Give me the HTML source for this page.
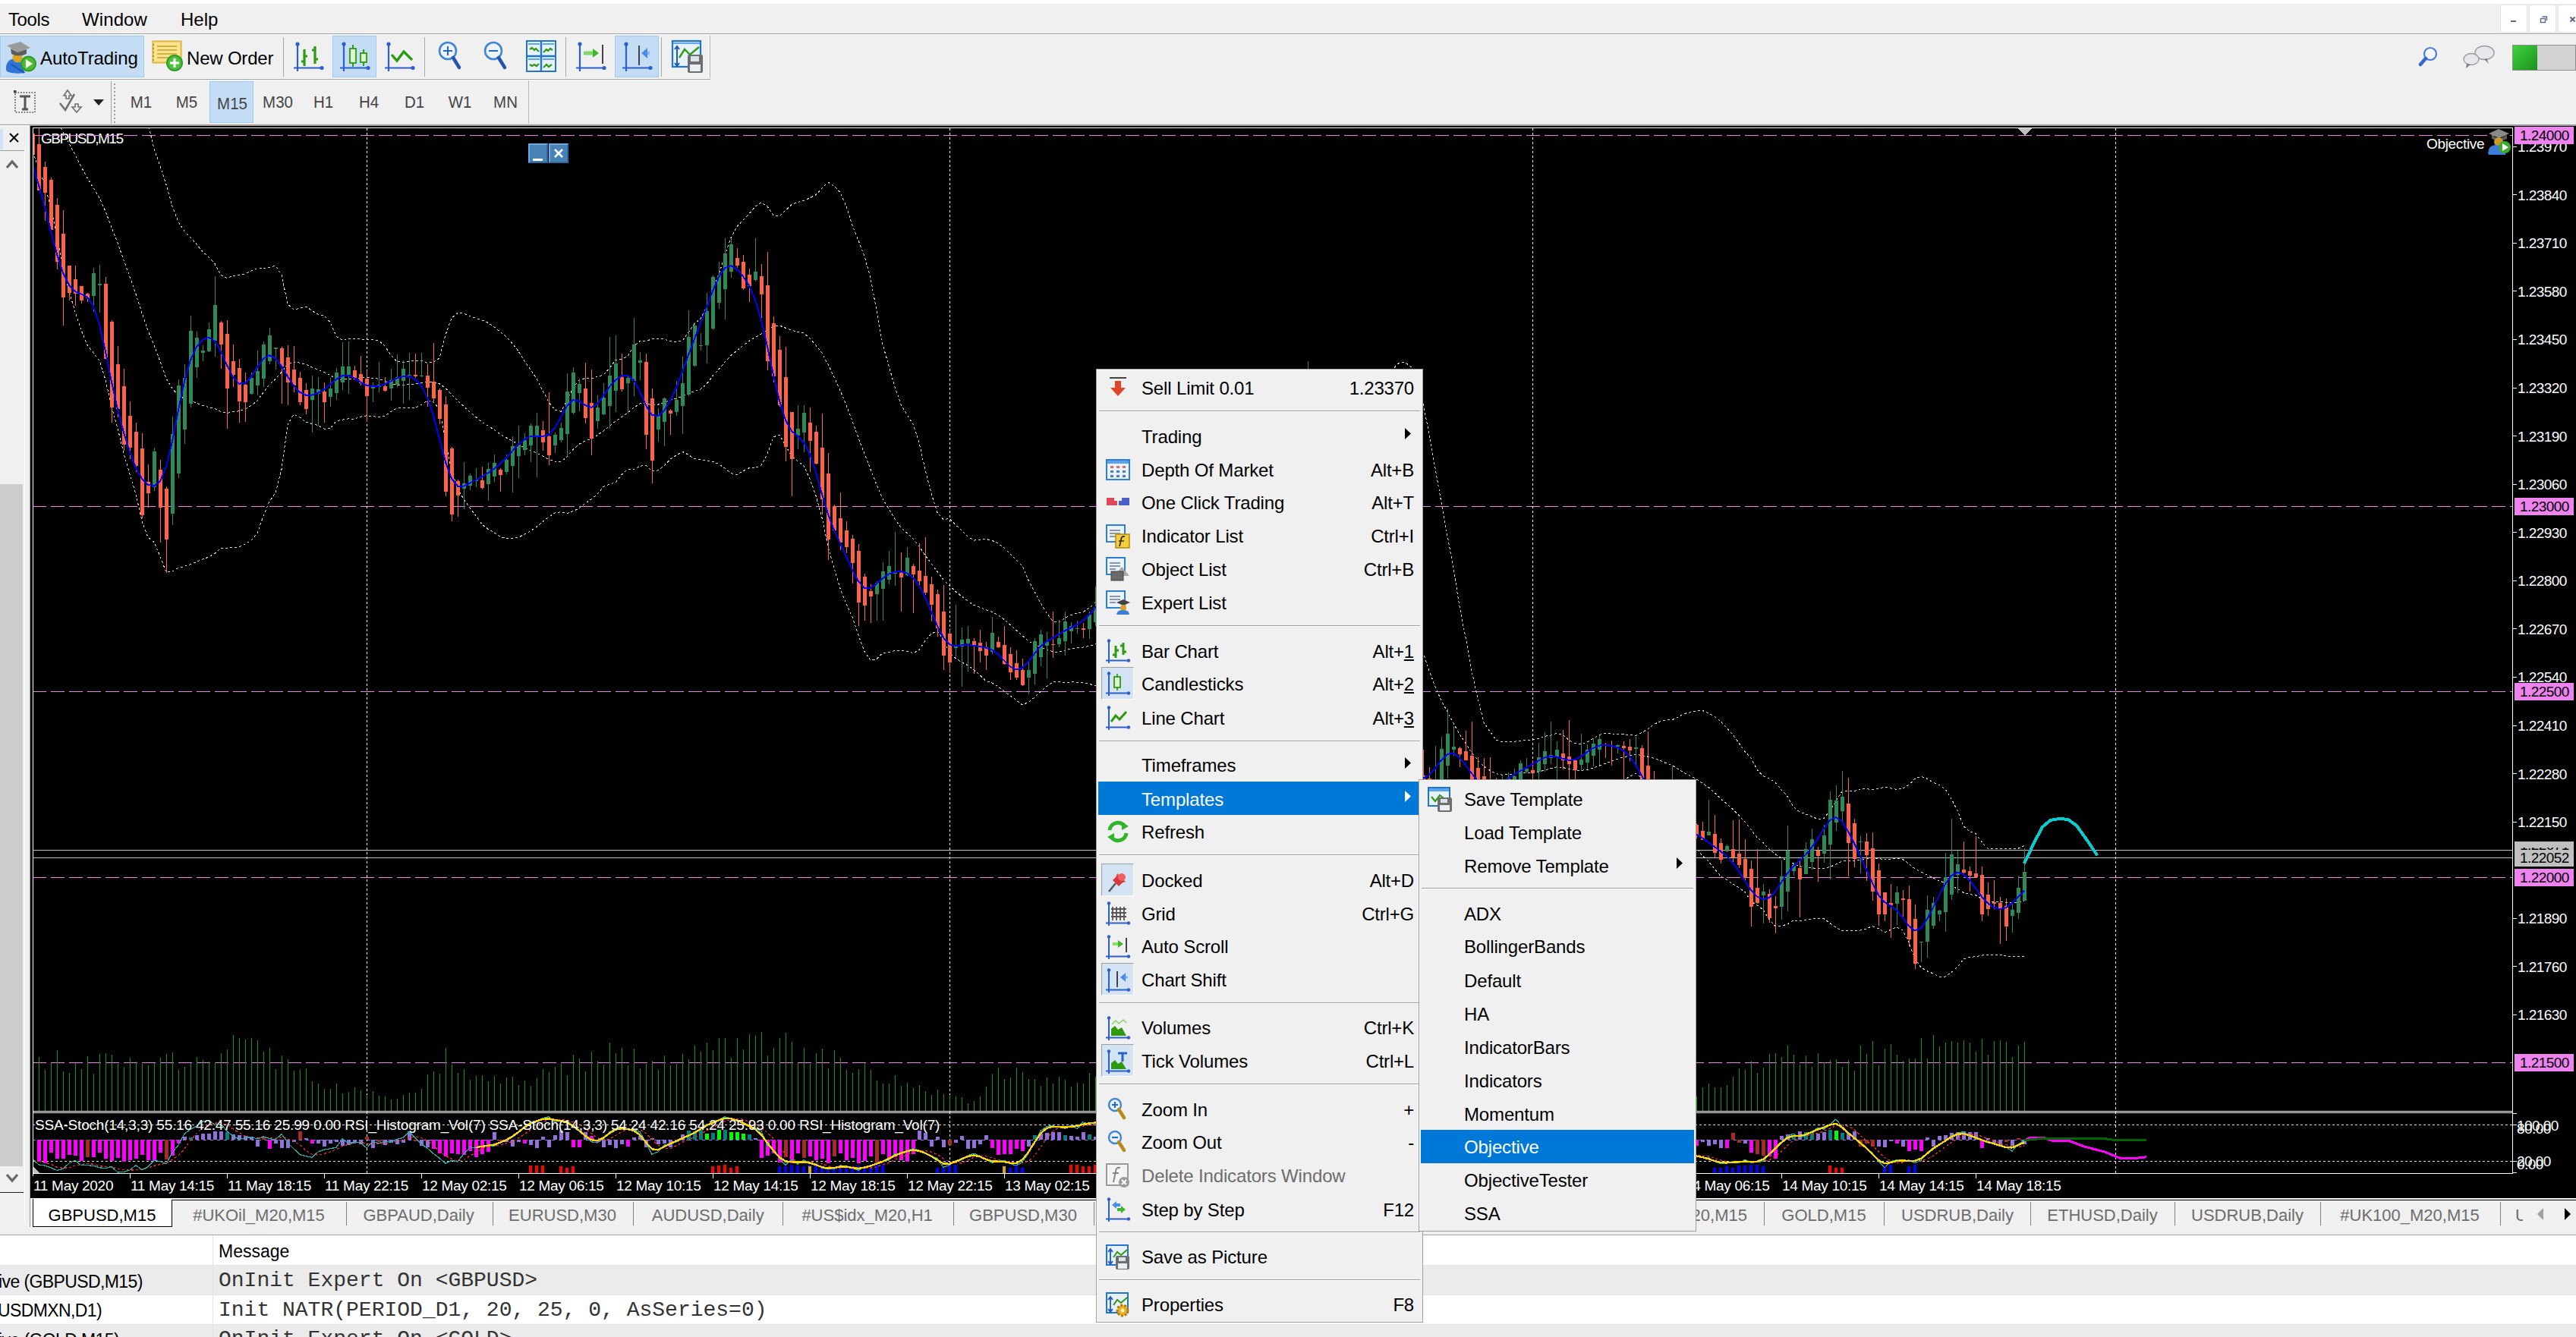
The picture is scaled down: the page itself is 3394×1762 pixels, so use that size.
<!DOCTYPE html>
<html><head><meta charset="utf-8"><style>
html,body{margin:0;padding:0;}
body{width:3394px;height:1762px;overflow:hidden;position:relative;background:#F0F0F0;font-family:"Liberation Sans", sans-serif;}
</style></head><body>
<div style="position:absolute;left:0px;top:0px;width:3394px;height:5px;background:#FFFFFF"></div>
<div style="position:absolute;left:11px;top:13.7px;font-size:24px;line-height:1;color:#000;white-space:pre;font-family:'Liberation Sans', sans-serif;letter-spacing:-0.4px">Tools</div>
<div style="position:absolute;left:108px;top:13.7px;font-size:24px;line-height:1;color:#000;white-space:pre;font-family:'Liberation Sans', sans-serif;letter-spacing:0.1px">Window</div>
<div style="position:absolute;left:238px;top:13.7px;font-size:24px;line-height:1;color:#000;white-space:pre;font-family:'Liberation Sans', sans-serif;">Help</div>
<div style="position:absolute;left:3294px;top:6px;width:36px;height:37px;background:#FFFFFF;border:1px solid #E3E3E3;box-sizing:border-box"></div>
<div style="position:absolute;left:3332px;top:6px;width:36px;height:37px;background:#FFFFFF;border:1px solid #E3E3E3;box-sizing:border-box"></div>
<div style="position:absolute;left:3370px;top:6px;width:40px;height:37px;background:#FFFFFF;border:1px solid #E3E3E3;box-sizing:border-box"></div>
<svg style="position:absolute;left:3294px;top:6px;" width="100" height="37" viewBox="0 0 100 37"><rect x="14" y="21" width="7" height="2" fill="#5A6A80"/><rect x="53.5" y="18.5" width="6" height="5" fill="none" stroke="#5A6A80" stroke-width="1.4"/><path d="M55.5 16 h6 v5" fill="none" stroke="#5A6A80" stroke-width="1.4"/><path d="M92.5 16.5 l6 6 M98.5 16.5 l-6 6" stroke="#5A6A80" stroke-width="2"/></svg>
<div style="position:absolute;left:0px;top:44px;width:3394px;height:1px;background:#A0A0A0"></div>
<div style="position:absolute;left:0px;top:45px;width:3394px;height:1px;background:#FFFFFF"></div>
<div style="position:absolute;left:0px;top:47px;width:190px;height:55px;background:#C5DDF4;border:1px solid #9CCBF3;box-sizing:border-box"></div>
<svg style="position:absolute;left:6px;top:52px;" width="46" height="46" viewBox="0 0 46 46">
<path d="M2 40 Q1 28 12 25 L20 28 L27 44 Q12 46 3 42 Z" fill="#2F74D8"/>
<path d="M9 33 L20 40 L26 44" stroke="#2553A0" stroke-width="2" fill="none"/>
<circle cx="17" cy="24" r="6.5" fill="#D9A520"/>
<path d="M3 8 L21 3 L34 11 L17 17 Z" fill="#9A9A9A"/><path d="M8 12 L17 17 L29 13 L29 19 Q18 24 9 19 Z" fill="#5E5E5E"/>
<circle cx="31.5" cy="32" r="10.5" fill="#2F9A22"/><circle cx="31.5" cy="32" r="8.5" fill="#4DBA35"/>
<path d="M28 26 L37 32 L28 38 Z" fill="#F4F4E8"/></svg>
<div style="position:absolute;left:53px;top:65.2px;font-size:24px;line-height:1;color:#000;white-space:pre;font-family:'Liberation Sans', sans-serif;letter-spacing:-0.1px">AutoTrading</div>
<svg style="position:absolute;left:198px;top:52px;" width="46" height="46" viewBox="0 0 46 46">
<rect x="3" y="2" width="38" height="29" fill="#F2CF55" stroke="#C9A43A" stroke-width="1"/>
<rect x="5" y="4" width="34" height="25" fill="#F9E38E"/>
<path d="M9 9 h26 M9 14 h26 M9 19 h26 M9 24 h20" stroke="#C9A02D" stroke-width="1.6"/>
<path d="M4 6 v22" stroke="#B8912A" stroke-width="2" stroke-dasharray="2,3"/>
<circle cx="32" cy="31" r="11" fill="#2F9A2A"/><circle cx="32" cy="31" r="9" fill="#4CC23B"/>
<path d="M32 25 v12 M26 31 h12" stroke="#FFFFFF" stroke-width="3"/></svg>
<div style="position:absolute;left:246px;top:65.2px;font-size:24px;line-height:1;color:#000;white-space:pre;font-family:'Liberation Sans', sans-serif;letter-spacing:-0.2px">New Order</div>
<div style="position:absolute;left:373px;top:49px;width:1px;height:52px;background:#A9A9A9"></div>
<div style="position:absolute;left:559px;top:49px;width:1px;height:52px;background:#A9A9A9"></div>
<div style="position:absolute;left:745px;top:49px;width:1px;height:52px;background:#A9A9A9"></div>
<div style="position:absolute;left:871px;top:49px;width:1px;height:52px;background:#A9A9A9"></div>
<div style="position:absolute;left:438px;top:47px;width:58px;height:55px;background:#C5DDF4;border:1px solid #9CCBF3;box-sizing:border-box"></div>
<div style="position:absolute;left:810px;top:47px;width:58px;height:55px;background:#C5DDF4;border:1px solid #9CCBF3;box-sizing:border-box"></div>
<svg style="position:absolute;left:387px;top:54px;" width="42" height="42" viewBox="0 0 42 42"><path d="M5 4 V40 M0 35.5 H38" stroke="#2B5FCB" stroke-width="2.2" fill="none"/><circle cx="5" cy="4" r="2.6" fill="#2B5FCB"/><circle cx="37" cy="35.5" r="2.6" fill="#2B5FCB"/><path d="M14 11 V33 M10 27 h4 M14 20 h4 M28 7 V30 M24 12 h4 M28 24 h4" stroke="#2E9A12" stroke-width="3.2" fill="none"/></svg>
<svg style="position:absolute;left:448px;top:54px;" width="42" height="42" viewBox="0 0 42 42"><path d="M5 4 V40 M0 35.5 H38" stroke="#2B5FCB" stroke-width="2.2" fill="none"/><circle cx="5" cy="4" r="2.6" fill="#2B5FCB"/><circle cx="37" cy="35.5" r="2.6" fill="#2B5FCB"/><path d="M17 5 V34 M31 11 V33" stroke="#2E9A12" stroke-width="2"/><rect x="13" y="10" width="8" height="19" fill="#DDF5D3" stroke="#2E9A12" stroke-width="1.8"/><rect x="27" y="16" width="8" height="12" fill="#DDF5D3" stroke="#2E9A12" stroke-width="1.8"/></svg>
<svg style="position:absolute;left:507px;top:54px;" width="42" height="42" viewBox="0 0 42 42"><path d="M5 4 V40 M0 35.5 H38" stroke="#2B5FCB" stroke-width="2.2" fill="none"/><circle cx="5" cy="4" r="2.6" fill="#2B5FCB"/><circle cx="37" cy="35.5" r="2.6" fill="#2B5FCB"/><path d="M9 18 L16 26 L25 14 L36 25" stroke="#2E9A12" stroke-width="3.4" fill="none"/></svg>
<svg style="position:absolute;left:576px;top:54px;" width="34" height="42" viewBox="0 0 34 42"><g transform="translate(14,13)"><circle r="11" fill="#EEF3FA" stroke="#3F86D6" stroke-width="2.6"/><path d="M-6 0 H6 M0 -6 V6" stroke="#2566C8" stroke-width="2"/><path d="M7 9 L15 22" stroke="#2355B0" stroke-width="4.5" stroke-linecap="round"/></g></svg>
<svg style="position:absolute;left:636px;top:54px;" width="34" height="42" viewBox="0 0 34 42"><g transform="translate(14,13)"><circle r="11" fill="#EEF3FA" stroke="#3F86D6" stroke-width="2.6"/><path d="M-6 0 H6" stroke="#2566C8" stroke-width="2"/><path d="M7 9 L15 22" stroke="#2355B0" stroke-width="4.5" stroke-linecap="round"/></g></svg>
<svg style="position:absolute;left:693px;top:53px;" width="42" height="42" viewBox="0 0 42 42">
<rect x="1" y="1" width="38" height="40" fill="#E7F1FA" stroke="#1F74D0" stroke-width="2"/>
<path d="M20 1 V41 M1 21 H39" stroke="#1F74D0" stroke-width="2.4"/>
<path d="M3 5 H18 M22 5 H37 M3 25 H18 M22 25 H37" stroke="#5FA6EC" stroke-width="2"/>
<path d="M5 12 l3 -2 l3 3 l2 -2 l4 4 M23 16 l4 -4 l2 2 l3 -3 l3 2 M5 32 l3 2 l3 -2 l3 2 l3 -3 M23 36 l4 -4 l3 3 l4 -3" stroke="#2E9A12" stroke-width="2.2" fill="none"/></svg>
<svg style="position:absolute;left:759px;top:54px;" width="42" height="42" viewBox="0 0 42 42"><path d="M5 4 V40 M0 35.5 H38" stroke="#2B5FCB" stroke-width="2.2" fill="none"/><circle cx="5" cy="4" r="2.6" fill="#2B5FCB"/><circle cx="37" cy="35.5" r="2.6" fill="#2B5FCB"/><path d="M10 16 H24" stroke="#7FD66A" stroke-width="5"/><path d="M22 10 L30 16 L22 22 Z" fill="#3EB82A"/><path d="M35 5 V30" stroke="#444" stroke-width="2"/></svg>
<svg style="position:absolute;left:820px;top:54px;" width="42" height="42" viewBox="0 0 42 42"><path d="M5 4 V40 M0 35.5 H38" stroke="#2B5FCB" stroke-width="2.2" fill="none"/><circle cx="5" cy="4" r="2.6" fill="#2B5FCB"/><circle cx="37" cy="35.5" r="2.6" fill="#2B5FCB"/><path d="M22 6 V32" stroke="#444" stroke-width="2"/><path d="M28 16 H36" stroke="#8AB8F0" stroke-width="5"/><path d="M33 9 L25 16 L33 23 Z" fill="#4A8DE6"/></svg>
<svg style="position:absolute;left:884px;top:52px;" width="44" height="46" viewBox="0 0 44 46">
<rect x="2" y="2" width="37" height="34" fill="#E7F1FA" stroke="#1F74D0" stroke-width="2.2"/>
<path d="M3 5 H38" stroke="#5FA6EC" stroke-width="2"/>
<path d="M8 10 V34 M5 13 l3 -4 l3 4 M5 31 l3 4 l3 -4" stroke="#2357C0" stroke-width="2" fill="none"/>
<path d="M11 24 L18 13 L25 20 L37 10" stroke="#2E9A12" stroke-width="2.4" fill="none"/>
<rect x="22" y="20" width="20" height="24" rx="2" fill="#6E6E6E"/><rect x="26" y="22" width="11" height="7" fill="#D8E6EC"/><rect x="25" y="33" width="14" height="9" fill="#E8F0F4"/></svg>
<div style="position:absolute;left:935px;top:47px;width:1px;height:56px;background:#B9B9B9"></div>
<div style="position:absolute;left:0px;top:103px;width:936px;height:1px;background:#FFFFFF"></div>
<div style="position:absolute;left:0px;top:104px;width:936px;height:1px;background:#A0A0A0"></div>
<div style="position:absolute;left:0px;top:105px;width:936px;height:1px;background:#FFFFFF"></div>
<svg style="position:absolute;left:18px;top:118px;" width="32" height="32" viewBox="0 0 32 32">
<rect x="2" y="4" width="26" height="26" fill="none" stroke="#444" stroke-width="1.6" stroke-dasharray="1.6,2"/>
<rect x="0" y="1" width="3.5" height="3.5" fill="#444"/>
<path d="M8 9 H22 M15 9 V26 M11 26 H19" stroke="#555" stroke-width="3" fill="none"/></svg>
<svg style="position:absolute;left:76px;top:116px;" width="34" height="36" viewBox="0 0 34 36">
<path d="M3 20 L10 29 L22 8" stroke="#707070" stroke-width="2.6" fill="none"/>
<path d="M8 10 L13 3 L18 10 H15 V14 H11 V10 Z" fill="#F0F0F0" stroke="#707070" stroke-width="1.6"/>
<path d="M23 21 H27 V25 H31 L25 32 L19 25 H23 Z" fill="#F0F0F0" stroke="#707070" stroke-width="1.6"/></svg>
<svg style="position:absolute;left:122px;top:130px;" width="16" height="10" viewBox="0 0 16 10"><path d="M1 1 H15 L8 9 Z" fill="#222"/></svg>
<div style="position:absolute;left:146px;top:107px;width:1px;height:56px;background:#A0A0A0"></div>
<div style="position:absolute;left:150px;top:110px;width:2px;height:2px;background:#9A9A9A"></div>
<div style="position:absolute;left:150px;top:115px;width:2px;height:2px;background:#9A9A9A"></div>
<div style="position:absolute;left:150px;top:120px;width:2px;height:2px;background:#9A9A9A"></div>
<div style="position:absolute;left:150px;top:125px;width:2px;height:2px;background:#9A9A9A"></div>
<div style="position:absolute;left:150px;top:130px;width:2px;height:2px;background:#9A9A9A"></div>
<div style="position:absolute;left:150px;top:135px;width:2px;height:2px;background:#9A9A9A"></div>
<div style="position:absolute;left:150px;top:140px;width:2px;height:2px;background:#9A9A9A"></div>
<div style="position:absolute;left:150px;top:145px;width:2px;height:2px;background:#9A9A9A"></div>
<div style="position:absolute;left:150px;top:150px;width:2px;height:2px;background:#9A9A9A"></div>
<div style="position:absolute;left:150px;top:155px;width:2px;height:2px;background:#9A9A9A"></div>
<div style="position:absolute;left:150px;top:160px;width:2px;height:2px;background:#9A9A9A"></div>
<div style="position:absolute;left:276px;top:107px;width:58px;height:55px;background:#C5DDF4;border:1px solid #9CCBF3;box-sizing:border-box"></div>
<div style="position:absolute;left:-114px;width:600px;top:123.9px;font-size:22px;line-height:1;color:#444444;white-space:pre;text-align:center;transform:scaleX(0.93)">M1</div>
<div style="position:absolute;left:-54px;width:600px;top:123.9px;font-size:22px;line-height:1;color:#444444;white-space:pre;text-align:center;transform:scaleX(0.93)">M5</div>
<div style="position:absolute;left:6px;width:600px;top:125.9px;font-size:22px;line-height:1;color:#444444;white-space:pre;text-align:center;transform:scaleX(0.93)">M15</div>
<div style="position:absolute;left:66px;width:600px;top:123.9px;font-size:22px;line-height:1;color:#444444;white-space:pre;text-align:center;transform:scaleX(0.93)">M30</div>
<div style="position:absolute;left:126px;width:600px;top:123.9px;font-size:22px;line-height:1;color:#444444;white-space:pre;text-align:center;transform:scaleX(0.93)">H1</div>
<div style="position:absolute;left:186px;width:600px;top:123.9px;font-size:22px;line-height:1;color:#444444;white-space:pre;text-align:center;transform:scaleX(0.93)">H4</div>
<div style="position:absolute;left:246px;width:600px;top:123.9px;font-size:22px;line-height:1;color:#444444;white-space:pre;text-align:center;transform:scaleX(0.93)">D1</div>
<div style="position:absolute;left:306px;width:600px;top:123.9px;font-size:22px;line-height:1;color:#444444;white-space:pre;text-align:center;transform:scaleX(0.93)">W1</div>
<div style="position:absolute;left:366px;width:600px;top:123.9px;font-size:22px;line-height:1;color:#444444;white-space:pre;text-align:center;transform:scaleX(0.93)">MN</div>
<div style="position:absolute;left:696px;top:106px;width:1px;height:58px;background:#B9B9B9"></div>
<svg style="position:absolute;left:3186px;top:58px;" width="28" height="34" viewBox="0 0 28 34"><circle cx="16" cy="13" r="8" fill="#F4F6FA" stroke="#3F7FD9" stroke-width="2.2"/>
<path d="M10 19 L3 27" stroke="#3566C9" stroke-width="4.5" stroke-linecap="round"/></svg>
<svg style="position:absolute;left:3244px;top:56px;" width="48" height="36" viewBox="0 0 48 36"><ellipse cx="29.5" cy="13.5" rx="12.5" ry="9" fill="#E8E8EC" stroke="#9A9A9A" stroke-width="1.4"/>
<path d="M32 21 L35 28 L29 22 Z" fill="#7A7A7A"/>
<ellipse cx="12" cy="22" rx="10" ry="7.5" fill="#E8E8EC" stroke="#9A9A9A" stroke-width="1.4"/>
<path d="M6 28 L5 34 L11 29 Z" fill="#7A7A7A"/></svg>
<div style="position:absolute;left:3310px;top:59px;width:84px;height:34px;background:#D3D3D3;border:1px solid #8A8A8A;box-sizing:border-box"></div>
<div style="position:absolute;left:3311px;top:60px;width:32px;height:32px;background:linear-gradient(135deg,#3FD33F,#1C8F1C)"></div>
<div style="position:absolute;left:0px;top:163px;width:3394px;height:1px;background:#E6E6E6"></div>
<div style="position:absolute;left:0px;top:164px;width:3394px;height:1px;background:#A0A0A0"></div>
<div style="position:absolute;left:0px;top:165px;width:39px;height:1452px;background:#F0F0F0"></div>
<div style="position:absolute;left:0px;top:165px;width:39px;height:1px;background:#FFFFFF"></div>
<div style="position:absolute;left:0px;top:170px;width:4px;height:27px;background:#CFE2F6"></div>
<svg style="position:absolute;left:10px;top:173px;" width="18" height="18" viewBox="0 0 18 18"><path d="M3 3 L14 14 M14 3 L3 14" stroke="#000" stroke-width="2"/></svg>
<div style="position:absolute;left:0px;top:198px;width:32px;height:1px;background:#A0A0A0"></div>
<div style="position:absolute;left:32px;top:198px;width:1px;height:1412px;background:#FFFFFF"></div>
<svg style="position:absolute;left:6px;top:208px;" width="22" height="18" viewBox="0 0 22 18"><path d="M3 13 L10 5 L17 13" stroke="#666" stroke-width="3.2" fill="none"/></svg>
<div style="position:absolute;left:0px;top:638px;width:30px;height:899px;background:#CDCDCD"></div>
<svg style="position:absolute;left:6px;top:1544px;" width="22" height="18" viewBox="0 0 22 18"><path d="M3 4 L10 12 L17 4" stroke="#666" stroke-width="3.2" fill="none"/></svg>
<div style="position:absolute;left:0px;top:1571px;width:31px;height:1px;background:#222"></div>
<div style="position:absolute;left:39px;top:165px;width:1px;height:1452px;background:#A0A0A0"></div>
<div style="position:absolute;left:40px;top:165px;width:3354px;height:1414px;background:#000"></div>
<div style="position:absolute;left:40px;top:165px;width:3354px;height:1px;background:#9A9A9A"></div>
<div style="position:absolute;left:54px;top:172.9px;font-size:19px;line-height:1;color:#FFFFFF;white-space:pre;font-family:'Liberation Sans', sans-serif;letter-spacing:-1.5px">GBPUSD,M15</div>
<svg style="position:absolute;left:0;top:0" width="3394" height="1762" viewBox="0 0 3394 1762" shape-rendering="crispEdges"><defs><clipPath id="mainclip"><rect x="44" y="169" width="3266" height="1295"/></clipPath><clipPath id="subclip"><rect x="44" y="1467" width="3266" height="79"/></clipPath></defs><line x1="43" y1="178.5" x2="3310" y2="178.5" stroke="#EE82EE" stroke-width="1" stroke-dasharray="18,6"/><line x1="43" y1="667.5" x2="3310" y2="667.5" stroke="#EE82EE" stroke-width="1" stroke-dasharray="18,6"/><line x1="43" y1="911.5" x2="3310" y2="911.5" stroke="#EE82EE" stroke-width="1" stroke-dasharray="18,6"/><line x1="43" y1="1156.5" x2="3310" y2="1156.5" stroke="#EE82EE" stroke-width="1" stroke-dasharray="18,6"/><line x1="43" y1="1400.5" x2="3310" y2="1400.5" stroke="#EE82EE" stroke-width="1" stroke-dasharray="18,6"/><line x1="483.5" y1="169" x2="483.5" y2="1546" stroke="#FFFFFF" stroke-width="1" stroke-dasharray="3,3"/><line x1="1251.5" y1="169" x2="1251.5" y2="1546" stroke="#FFFFFF" stroke-width="1" stroke-dasharray="3,3"/><line x1="2019.5" y1="169" x2="2019.5" y2="1546" stroke="#FFFFFF" stroke-width="1" stroke-dasharray="3,3"/><line x1="2787.5" y1="169" x2="2787.5" y2="1546" stroke="#FFFFFF" stroke-width="1" stroke-dasharray="3,3"/><line x1="43" y1="1120.5" x2="3310" y2="1120.5" stroke="#C0C0C0" stroke-width="1"/><line x1="43" y1="1130.5" x2="3310" y2="1130.5" stroke="#C0C0C0" stroke-width="1"/><g clip-path="url(#mainclip)"><polyline fill="none" points="35.0,27.3 43.0,28.0 51.0,22.6 59.0,21.2 67.0,15.7 75.0,6.6 83.0,-4.1 91.0,-6.2 99.0,-2.5 107.0,4.4 115.0,14.7 123.0,30.3 131.0,46.6 139.0,56.8 147.0,62.9 155.0,76.2 163.0,88.1 171.0,104.8 179.0,124.0 187.0,138.2 195.0,162.9 203.0,196.0 211.0,218.8 219.0,243.4 227.0,271.7 235.0,292.2 243.0,304.9 251.0,312.7 259.0,321.8 267.0,331.8 275.0,338.7 283.0,347.6 291.0,362.5 299.0,366.7 307.0,363.2 315.0,362.7 323.0,361.0 331.0,357.1 339.0,353.7 347.0,354.1 355.0,352.7 363.0,350.1 371.0,362.3 379.0,400.6 387.0,407.9 395.0,406.4 403.0,404.0 411.0,409.5 419.0,414.1 427.0,416.2 435.0,424.4 443.0,443.2 451.0,448.0 459.0,446.3 467.0,446.5 475.0,447.1 483.0,447.6 491.0,447.9 499.0,448.9 507.0,456.0 515.0,468.1 523.0,476.6 531.0,477.3 539.0,476.2 547.0,475.3 555.0,475.2 563.0,478.3 571.0,477.4 579.0,472.0 587.0,441.3 595.0,418.9 603.0,412.6 611.0,413.0 619.0,416.6 627.0,419.4 635.0,422.0 643.0,425.2 651.0,430.8 659.0,437.2 667.0,443.6 675.0,452.5 683.0,462.8 691.0,476.1 699.0,487.3 707.0,498.9 715.0,514.8 723.0,529.9 731.0,540.0 739.0,542.4 747.0,527.2 755.0,511.6 763.0,500.8 771.0,498.6 779.0,499.0 787.0,496.2 795.0,494.2 803.0,485.4 811.0,474.2 819.0,473.5 827.0,469.6 835.0,456.2 843.0,449.5 851.0,449.9 859.0,446.6 867.0,446.6 875.0,446.7 883.0,449.9 891.0,450.4 899.0,449.2 907.0,438.0 915.0,426.6 923.0,420.2 931.0,404.7 939.0,382.6 947.0,361.8 955.0,337.2 963.0,313.4 971.0,298.7 979.0,290.0 987.0,281.7 995.0,272.3 1003.0,266.9 1011.0,272.1 1019.0,283.5 1027.0,284.9 1035.0,277.2 1043.0,269.7 1051.0,266.6 1059.0,264.6 1067.0,260.8 1075.0,256.7 1083.0,248.0 1091.0,240.1 1099.0,245.0 1107.0,253.6 1115.0,271.8 1123.0,296.9 1131.0,317.0 1139.0,337.5 1147.0,366.6 1155.0,409.5 1163.0,453.9 1171.0,482.1 1179.0,509.9 1187.0,532.7 1195.0,546.7 1203.0,559.3 1211.0,583.2 1219.0,619.2 1227.0,650.2 1235.0,675.5 1243.0,684.5 1251.0,683.4 1259.0,691.4 1267.0,699.0 1275.0,707.1 1283.0,712.1 1291.0,711.3 1299.0,710.4 1307.0,712.3 1315.0,716.1 1323.0,722.0 1331.0,730.2 1339.0,738.1 1347.0,745.9 1355.0,764.4 1363.0,779.7 1371.0,794.3 1379.0,807.7 1387.0,818.4 1395.0,820.6 1403.0,814.6 1411.0,810.7 1419.0,808.1 1427.0,806.5 1435.0,801.5 1443.0,794.3 1451.0,783.0 1459.0,775.7 1467.0,769.9 1475.0,756.6 1483.0,749.1 1491.0,740.5 1499.0,729.5 1507.0,715.5 1515.0,708.2 1523.0,693.5 1531.0,677.3 1539.0,664.7 1547.0,653.1 1555.0,643.6 1563.0,627.3 1571.0,617.4 1579.0,609.5 1587.0,603.4 1595.0,592.8 1603.0,581.7 1611.0,573.7 1619.0,566.8 1627.0,562.2 1635.0,557.4 1643.0,557.4 1651.0,561.8 1659.0,565.7 1667.0,562.5 1675.0,547.0 1683.0,533.0 1691.0,530.6 1699.0,530.7 1707.0,529.9 1715.0,523.1 1723.0,516.8 1731.0,511.7 1739.0,510.8 1747.0,512.1 1755.0,516.2 1763.0,522.3 1771.0,524.9 1779.0,530.0 1787.0,532.7 1795.0,533.4 1803.0,528.5 1811.0,525.3 1819.0,513.0 1827.0,499.7 1835.0,486.6 1843.0,478.7 1851.0,477.4 1859.0,483.6 1867.0,500.3 1875.0,531.9 1883.0,571.9 1891.0,617.4 1899.0,662.0 1907.0,705.6 1915.0,749.4 1923.0,799.4 1931.0,839.6 1939.0,884.1 1947.0,920.1 1955.0,952.2 1963.0,963.8 1971.0,975.2 1979.0,977.5 1987.0,977.4 1995.0,977.4 2003.0,976.1 2011.0,975.6 2019.0,975.3 2027.0,973.4 2035.0,970.3 2043.0,969.0 2051.0,966.4 2059.0,968.3 2067.0,975.3 2075.0,979.4 2083.0,980.5 2091.0,978.2 2099.0,973.5 2107.0,968.4 2115.0,966.5 2123.0,966.9 2131.0,967.3 2139.0,967.8 2147.0,968.6 2155.0,969.3 2163.0,965.7 2171.0,960.9 2179.0,954.5 2187.0,951.1 2195.0,948.7 2203.0,948.7 2211.0,944.9 2219.0,940.5 2227.0,938.9 2235.0,936.6 2243.0,936.3 2251.0,940.1 2259.0,944.1 2267.0,950.6 2275.0,959.2 2283.0,968.3 2291.0,979.2 2299.0,990.4 2307.0,999.1 2315.0,1014.3 2323.0,1022.4 2331.0,1026.0 2339.0,1031.1 2347.0,1041.0 2355.0,1049.4 2363.0,1063.6 2371.0,1070.0 2379.0,1072.9 2387.0,1075.9 2395.0,1079.6 2403.0,1078.6 2411.0,1068.3 2419.0,1055.8 2427.0,1042.9 2435.0,1042.5 2443.0,1042.6 2451.0,1040.4 2459.0,1039.5 2467.0,1040.8 2475.0,1039.4 2483.0,1037.2 2491.0,1038.8 2499.0,1040.3 2507.0,1039.2 2515.0,1034.6 2523.0,1026.2 2531.0,1023.2 2539.0,1026.2 2547.0,1031.3 2555.0,1034.3 2563.0,1040.0 2571.0,1052.7 2579.0,1068.2 2587.0,1088.8 2595.0,1095.5 2603.0,1098.6 2611.0,1109.7 2619.0,1118.0 2627.0,1119.0 2635.0,1118.9 2643.0,1118.6 2651.0,1118.8 2659.0,1118.3 2667.0,1114.4" stroke="#D8D8D8" stroke-width="1" stroke-dasharray="3,3"/><polyline fill="none" points="35.0,184.2 43.0,198.6 51.0,223.3 59.0,243.9 67.0,273.5 75.0,309.7 83.0,351.7 91.0,384.1 99.0,410.9 107.0,435.0 115.0,454.5 123.0,464.9 131.0,475.0 139.0,500.7 147.0,536.1 155.0,564.2 163.0,597.3 171.0,624.7 179.0,651.0 187.0,686.7 195.0,708.2 203.0,714.3 211.0,733.2 219.0,754.3 227.0,752.9 235.0,748.6 243.0,746.5 251.0,743.7 259.0,740.4 267.0,737.0 275.0,734.1 283.0,729.5 291.0,722.5 299.0,722.3 307.0,721.5 315.0,721.1 323.0,717.2 331.0,711.9 339.0,702.8 347.0,679.9 355.0,660.6 363.0,649.4 371.0,618.6 379.0,559.6 387.0,546.0 395.0,549.8 403.0,556.3 411.0,558.4 419.0,560.6 427.0,565.2 435.0,564.9 443.0,555.1 451.0,553.1 459.0,551.9 467.0,552.1 475.0,549.2 483.0,547.8 491.0,548.7 499.0,549.6 507.0,548.5 515.0,542.4 523.0,537.8 531.0,537.4 539.0,537.5 547.0,537.2 555.0,533.7 563.0,527.8 571.0,530.0 579.0,539.3 587.0,581.9 595.0,620.8 603.0,643.3 611.0,658.2 619.0,669.1 627.0,679.7 635.0,690.9 643.0,697.3 651.0,701.7 659.0,707.2 667.0,709.8 675.0,709.6 683.0,708.2 691.0,704.2 699.0,699.7 707.0,694.5 715.0,687.4 723.0,681.3 731.0,675.9 739.0,674.7 747.0,676.8 755.0,673.7 763.0,669.8 771.0,663.3 779.0,658.1 787.0,651.3 795.0,641.4 803.0,638.0 811.0,636.1 819.0,625.5 827.0,618.7 835.0,618.7 843.0,614.3 851.0,613.3 859.0,621.1 867.0,619.8 875.0,613.8 883.0,605.2 891.0,600.0 899.0,595.3 907.0,599.3 915.0,604.5 923.0,605.8 931.0,607.3 939.0,608.1 947.0,611.5 955.0,617.2 963.0,623.6 971.0,625.4 979.0,620.8 987.0,616.8 995.0,616.6 1003.0,613.4 1011.0,598.4 1019.0,575.8 1027.0,573.2 1035.0,587.3 1043.0,600.8 1051.0,607.7 1059.0,613.6 1067.0,631.2 1075.0,653.5 1083.0,682.5 1091.0,720.5 1099.0,748.9 1107.0,775.5 1115.0,795.9 1123.0,812.9 1131.0,837.2 1139.0,858.5 1147.0,870.4 1155.0,868.6 1163.0,860.7 1171.0,859.6 1179.0,857.6 1187.0,857.5 1195.0,858.1 1203.0,860.7 1211.0,856.8 1219.0,844.5 1227.0,835.1 1235.0,831.5 1243.0,843.1 1251.0,860.3 1259.0,867.5 1267.0,872.8 1275.0,876.8 1283.0,882.5 1291.0,889.7 1299.0,897.3 1307.0,900.1 1315.0,904.8 1323.0,911.0 1331.0,916.8 1339.0,922.7 1347.0,929.1 1355.0,925.4 1363.0,919.0 1371.0,911.4 1379.0,904.6 1387.0,899.1 1395.0,898.2 1403.0,899.7 1411.0,898.8 1419.0,899.2 1427.0,899.5 1435.0,901.3 1443.0,903.6 1451.0,907.1 1459.0,907.0 1467.0,908.5 1475.0,912.1 1483.0,909.2 1491.0,904.6 1499.0,899.3 1507.0,893.0 1515.0,884.1 1523.0,884.0 1531.0,884.5 1539.0,880.5 1547.0,874.2 1555.0,866.8 1563.0,864.9 1571.0,857.3 1579.0,846.9 1587.0,833.8 1595.0,824.6 1603.0,815.8 1611.0,806.9 1619.0,794.4 1627.0,779.1 1635.0,768.0 1643.0,750.5 1651.0,733.3 1659.0,725.7 1667.0,731.7 1675.0,755.4 1683.0,780.7 1691.0,789.8 1699.0,791.7 1707.0,790.8 1715.0,790.0 1723.0,790.9 1731.0,790.5 1739.0,790.1 1747.0,791.3 1755.0,795.0 1763.0,799.0 1771.0,811.5 1779.0,824.9 1787.0,846.7 1795.0,873.4 1803.0,913.1 1811.0,949.3 1819.0,992.3 1827.0,1036.1 1835.0,1072.7 1843.0,1102.2 1851.0,1131.0 1859.0,1157.6 1867.0,1177.4 1875.0,1189.4 1883.0,1195.3 1891.0,1193.3 1899.0,1184.1 1907.0,1170.8 1915.0,1156.4 1923.0,1135.6 1931.0,1119.3 1939.0,1099.5 1947.0,1083.4 1955.0,1068.0 1963.0,1066.8 1971.0,1063.9 1979.0,1064.9 1987.0,1064.3 1995.0,1062.7 2003.0,1062.2 2011.0,1061.7 2019.0,1061.0 2027.0,1060.9 2035.0,1060.0 2043.0,1056.6 2051.0,1055.0 2059.0,1054.6 2067.0,1051.5 2075.0,1050.6 2083.0,1050.2 2091.0,1051.1 2099.0,1051.0 2107.0,1050.0 2115.0,1046.1 2123.0,1039.3 2131.0,1033.1 2139.0,1028.0 2147.0,1023.6 2155.0,1019.1 2163.0,1025.2 2171.0,1033.3 2179.0,1043.9 2187.0,1053.1 2195.0,1062.6 2203.0,1068.0 2211.0,1082.0 2219.0,1096.0 2227.0,1105.9 2235.0,1117.0 2243.0,1127.8 2251.0,1134.9 2259.0,1145.2 2267.0,1154.6 2275.0,1159.4 2283.0,1165.0 2291.0,1169.8 2299.0,1175.6 2307.0,1187.6 2315.0,1192.9 2323.0,1199.0 2331.0,1211.8 2339.0,1220.4 2347.0,1220.5 2355.0,1217.9 2363.0,1213.0 2371.0,1213.4 2379.0,1212.6 2387.0,1211.2 2395.0,1210.2 2403.0,1210.6 2411.0,1216.7 2419.0,1222.3 2427.0,1226.8 2435.0,1226.8 2443.0,1226.9 2451.0,1226.0 2459.0,1223.9 2467.0,1220.6 2475.0,1223.6 2483.0,1228.7 2491.0,1225.4 2499.0,1221.8 2507.0,1225.9 2515.0,1242.2 2523.0,1263.6 2531.0,1274.8 2539.0,1279.8 2547.0,1283.0 2555.0,1287.2 2563.0,1287.0 2571.0,1281.5 2579.0,1274.5 2587.0,1263.9 2595.0,1261.5 2603.0,1260.7 2611.0,1259.2 2619.0,1258.1 2627.0,1258.6 2635.0,1258.0 2643.0,1259.9 2651.0,1260.3 2659.0,1260.3 2667.0,1260.6" stroke="#D8D8D8" stroke-width="1" stroke-dasharray="3,3"/><polyline fill="none" points="35.0,105.8 43.0,113.3 51.0,123.0 59.0,132.5 67.0,144.6 75.0,158.1 83.0,173.8 91.0,189.0 99.0,204.2 107.0,219.7 115.0,234.6 123.0,247.6 131.0,260.8 139.0,278.7 147.0,299.5 155.0,320.2 163.0,342.7 171.0,364.7 179.0,387.5 187.0,412.5 195.0,435.5 203.0,455.1 211.0,476.0 219.0,498.9 227.0,512.3 235.0,520.4 243.0,525.7 251.0,528.2 259.0,531.1 267.0,534.4 275.0,536.4 283.0,538.5 291.0,542.5 299.0,544.5 307.0,542.3 315.0,541.9 323.0,539.1 331.0,534.5 339.0,528.2 347.0,517.0 355.0,506.6 363.0,499.7 371.0,490.5 379.0,480.1 387.0,477.0 395.0,478.1 403.0,480.2 411.0,483.9 419.0,487.3 427.0,490.7 435.0,494.6 443.0,499.1 451.0,500.6 459.0,499.1 467.0,499.3 475.0,498.1 483.0,497.7 491.0,498.3 499.0,499.2 507.0,502.3 515.0,505.2 523.0,507.2 531.0,507.3 539.0,506.8 547.0,506.3 555.0,504.5 563.0,503.1 571.0,503.7 579.0,505.7 587.0,511.6 595.0,519.9 603.0,527.9 611.0,535.6 619.0,542.8 627.0,549.6 635.0,556.4 643.0,561.2 651.0,566.3 659.0,572.2 667.0,576.7 675.0,581.1 683.0,585.5 691.0,590.2 699.0,593.5 707.0,596.7 715.0,601.1 723.0,605.6 731.0,608.0 739.0,608.6 747.0,602.0 755.0,592.6 763.0,585.3 771.0,581.0 779.0,578.5 787.0,573.7 795.0,567.8 803.0,561.7 811.0,555.1 819.0,549.5 827.0,544.1 835.0,537.4 843.0,531.9 851.0,531.6 859.0,533.9 867.0,533.2 875.0,530.3 883.0,527.5 891.0,525.2 899.0,522.3 907.0,518.7 915.0,515.6 923.0,513.0 931.0,506.0 939.0,495.4 947.0,486.7 955.0,477.2 963.0,468.5 971.0,462.0 979.0,455.4 987.0,449.3 995.0,444.5 1003.0,440.1 1011.0,435.2 1019.0,429.7 1027.0,429.0 1035.0,432.2 1043.0,435.3 1051.0,437.2 1059.0,439.1 1067.0,446.0 1075.0,455.1 1083.0,465.3 1091.0,480.3 1099.0,496.9 1107.0,514.5 1115.0,533.9 1123.0,554.9 1131.0,577.1 1139.0,598.0 1147.0,618.5 1155.0,639.0 1163.0,657.3 1171.0,670.8 1179.0,683.8 1187.0,695.1 1195.0,702.4 1203.0,710.0 1211.0,720.0 1219.0,731.8 1227.0,742.6 1235.0,753.5 1243.0,763.8 1251.0,771.9 1259.0,779.5 1267.0,785.9 1275.0,791.9 1283.0,797.3 1291.0,800.5 1299.0,803.8 1307.0,806.2 1315.0,810.4 1323.0,816.5 1331.0,823.5 1339.0,830.4 1347.0,837.5 1355.0,844.9 1363.0,849.3 1371.0,852.9 1379.0,856.1 1387.0,858.8 1395.0,859.4 1403.0,857.1 1411.0,854.8 1419.0,853.6 1427.0,853.0 1435.0,851.4 1443.0,849.0 1451.0,845.1 1459.0,841.4 1467.0,839.2 1475.0,834.4 1483.0,829.2 1491.0,822.6 1499.0,814.4 1507.0,804.3 1515.0,796.2 1523.0,788.7 1531.0,780.9 1539.0,772.6 1547.0,763.7 1555.0,755.2 1563.0,746.1 1571.0,737.3 1579.0,728.2 1587.0,718.6 1595.0,708.7 1603.0,698.7 1611.0,690.3 1619.0,680.6 1627.0,670.7 1635.0,662.7 1643.0,654.0 1651.0,647.5 1659.0,645.7 1667.0,647.1 1675.0,651.2 1683.0,656.9 1691.0,660.2 1699.0,661.2 1707.0,660.4 1715.0,656.5 1723.0,653.8 1731.0,651.1 1739.0,650.4 1747.0,651.7 1755.0,655.6 1763.0,660.7 1771.0,668.2 1779.0,677.5 1787.0,689.7 1795.0,703.4 1803.0,720.8 1811.0,737.3 1819.0,752.7 1827.0,767.9 1835.0,779.7 1843.0,790.4 1851.0,804.2 1859.0,820.6 1867.0,838.8 1875.0,860.6 1883.0,883.6 1891.0,905.3 1899.0,923.1 1907.0,938.2 1915.0,952.9 1923.0,967.5 1931.0,979.4 1939.0,991.8 1947.0,1001.7 1955.0,1010.1 1963.0,1015.3 1971.0,1019.6 1979.0,1021.2 1987.0,1020.8 1995.0,1020.0 2003.0,1019.1 2011.0,1018.7 2019.0,1018.2 2027.0,1017.2 2035.0,1015.1 2043.0,1012.8 2051.0,1010.7 2059.0,1011.4 2067.0,1013.4 2075.0,1015.0 2083.0,1015.3 2091.0,1014.6 2099.0,1012.2 2107.0,1009.2 2115.0,1006.3 2123.0,1003.1 2131.0,1000.2 2139.0,997.9 2147.0,996.1 2155.0,994.2 2163.0,995.5 2171.0,997.1 2179.0,999.2 2187.0,1002.1 2195.0,1005.7 2203.0,1008.4 2211.0,1013.4 2219.0,1018.3 2227.0,1022.4 2235.0,1026.8 2243.0,1032.1 2251.0,1037.5 2259.0,1044.6 2267.0,1052.6 2275.0,1059.3 2283.0,1066.6 2291.0,1074.5 2299.0,1083.0 2307.0,1093.3 2315.0,1103.6 2323.0,1110.7 2331.0,1118.9 2339.0,1125.7 2347.0,1130.7 2355.0,1133.7 2363.0,1138.3 2371.0,1141.7 2379.0,1142.8 2387.0,1143.6 2395.0,1144.9 2403.0,1144.6 2411.0,1142.5 2419.0,1139.1 2427.0,1134.9 2435.0,1134.7 2443.0,1134.8 2451.0,1133.2 2459.0,1131.7 2467.0,1130.7 2475.0,1131.5 2483.0,1133.0 2491.0,1132.1 2499.0,1131.1 2507.0,1132.6 2515.0,1138.4 2523.0,1144.9 2531.0,1149.0 2539.0,1153.0 2547.0,1157.2 2555.0,1160.8 2563.0,1163.5 2571.0,1167.1 2579.0,1171.3 2587.0,1176.3 2595.0,1178.5 2603.0,1179.7 2611.0,1184.5 2619.0,1188.0 2627.0,1188.8 2635.0,1188.4 2643.0,1189.2 2651.0,1189.6 2659.0,1189.3 2667.0,1187.5" stroke="#D8D8D8" stroke-width="1" stroke-dasharray="3,3"/><rect x="-191" y="23.4" width="5" height="176.6" fill="#2E8B57"/><rect x="-189" y="-16.2" width="1" height="225.9" fill="#2E8B57"/><rect x="-183" y="28.7" width="5" height="83.0" fill="#2E8B57"/><rect x="-181" y="9.3" width="1" height="107.3" fill="#2E8B57"/><rect x="-175" y="29.4" width="5" height="40.7" fill="#2E8B57"/><rect x="-173" y="28.8" width="1" height="52.1" fill="#2E8B57"/><rect x="-167" y="32.2" width="5" height="17.6" fill="#2E8B57"/><rect x="-165" y="32.2" width="1" height="40.7" fill="#2E8B57"/><rect x="-159" y="33.3" width="5" height="7.7" fill="#2E8B57"/><rect x="-157" y="27.7" width="1" height="15.8" fill="#2E8B57"/><rect x="-151" y="37.2" width="5" height="1.5" fill="#FF6347"/><rect x="-149" y="25.1" width="1" height="23.0" fill="#FF6347"/><rect x="-143" y="37.8" width="5" height="7.6" fill="#FF6347"/><rect x="-141" y="32.9" width="1" height="41.9" fill="#FF6347"/><rect x="-135" y="41.6" width="5" height="4.8" fill="#FF6347"/><rect x="-133" y="9.9" width="1" height="76.4" fill="#FF6347"/><rect x="-127" y="44.0" width="5" height="7.2" fill="#FF6347"/><rect x="-125" y="16.2" width="1" height="69.5" fill="#FF6347"/><rect x="-119" y="47.6" width="5" height="5.0" fill="#FF6347"/><rect x="-117" y="5.9" width="1" height="58.5" fill="#FF6347"/><rect x="-111" y="50.1" width="5" height="7.9" fill="#FF6347"/><rect x="-109" y="48.9" width="1" height="61.2" fill="#FF6347"/><rect x="-103" y="54.1" width="5" height="8.3" fill="#FF6347"/><rect x="-101" y="17.3" width="1" height="62.7" fill="#FF6347"/><rect x="-95" y="58.3" width="5" height="3.6" fill="#FF6347"/><rect x="-93" y="38.6" width="1" height="30.3" fill="#FF6347"/><rect x="-87" y="60.1" width="5" height="14.4" fill="#FF6347"/><rect x="-85" y="46.4" width="1" height="36.2" fill="#FF6347"/><rect x="-79" y="67.3" width="5" height="11.1" fill="#FF6347"/><rect x="-77" y="58.4" width="1" height="27.4" fill="#FF6347"/><rect x="-71" y="72.8" width="5" height="10.5" fill="#FF6347"/><rect x="-69" y="49.1" width="1" height="41.0" fill="#FF6347"/><rect x="-63" y="78.1" width="5" height="3.7" fill="#FF6347"/><rect x="-61" y="68.0" width="1" height="26.0" fill="#FF6347"/><rect x="-55" y="79.9" width="5" height="6.7" fill="#FF6347"/><rect x="-53" y="56.2" width="1" height="53.1" fill="#FF6347"/><rect x="-47" y="83.3" width="5" height="10.9" fill="#FF6347"/><rect x="-45" y="44.5" width="1" height="58.8" fill="#FF6347"/><rect x="-39" y="88.8" width="5" height="12.1" fill="#FF6347"/><rect x="-37" y="75.0" width="1" height="39.9" fill="#FF6347"/><rect x="-31" y="94.8" width="5" height="14.4" fill="#FF6347"/><rect x="-29" y="78.7" width="1" height="30.8" fill="#FF6347"/><rect x="-23" y="102.0" width="5" height="12.1" fill="#FF6347"/><rect x="-21" y="92.9" width="1" height="25.9" fill="#FF6347"/><rect x="-15" y="108.0" width="5" height="13.8" fill="#FF6347"/><rect x="-13" y="95.3" width="1" height="27.0" fill="#FF6347"/><rect x="-7" y="114.9" width="5" height="9.4" fill="#FF6347"/><rect x="-5" y="96.8" width="1" height="31.6" fill="#FF6347"/><rect x="1" y="119.6" width="5" height="16.2" fill="#FF6347"/><rect x="3" y="102.5" width="1" height="34.2" fill="#FF6347"/><rect x="9" y="127.7" width="5" height="21.4" fill="#FF6347"/><rect x="11" y="122.9" width="1" height="35.8" fill="#FF6347"/><rect x="17" y="138.4" width="5" height="20.5" fill="#FF6347"/><rect x="19" y="131.6" width="1" height="53.1" fill="#FF6347"/><rect x="25" y="148.7" width="5" height="30.4" fill="#FF6347"/><rect x="27" y="134.2" width="1" height="109.4" fill="#FF6347"/><rect x="33" y="163.9" width="5" height="24.8" fill="#FF6347"/><rect x="35" y="137.5" width="1" height="67.7" fill="#FF6347"/><rect x="41" y="176.3" width="5" height="27.3" fill="#FF6347"/><rect x="43" y="169.6" width="1" height="80.2" fill="#FF6347"/><rect x="49" y="189.9" width="5" height="60.9" fill="#FF6347"/><rect x="51" y="165.7" width="1" height="85.3" fill="#FF6347"/><rect x="57" y="220.4" width="5" height="33.4" fill="#FF6347"/><rect x="59" y="212.8" width="1" height="78.5" fill="#FF6347"/><rect x="65" y="237.1" width="5" height="65.9" fill="#FF6347"/><rect x="67" y="233.6" width="1" height="75.0" fill="#FF6347"/><rect x="73" y="270.0" width="5" height="75.4" fill="#FF6347"/><rect x="75" y="261.0" width="1" height="93.8" fill="#FF6347"/><rect x="81" y="307.7" width="5" height="84.2" fill="#FF6347"/><rect x="83" y="276.6" width="1" height="152.6" fill="#FF6347"/><rect x="89" y="349.8" width="5" height="36.2" fill="#FF6347"/><rect x="91" y="349.8" width="1" height="46.4" fill="#FF6347"/><rect x="97" y="367.9" width="5" height="19.1" fill="#FF6347"/><rect x="99" y="350.2" width="1" height="52.6" fill="#FF6347"/><rect x="105" y="377.4" width="5" height="18.7" fill="#FF6347"/><rect x="107" y="376.7" width="1" height="23.5" fill="#FF6347"/><rect x="113" y="386.8" width="5" height="6.6" fill="#FF6347"/><rect x="115" y="385.9" width="1" height="11.6" fill="#FF6347"/><rect x="121" y="359.6" width="5" height="30.6" fill="#2E8B57"/><rect x="123" y="353.3" width="1" height="57.2" fill="#2E8B57"/><rect x="129" y="374.0" width="5" height="1.5" fill="#2E8B57"/><rect x="131" y="349.4" width="1" height="62.5" fill="#2E8B57"/><rect x="137" y="374.4" width="5" height="98.2" fill="#FF6347"/><rect x="139" y="365.2" width="1" height="107.5" fill="#FF6347"/><rect x="145" y="423.5" width="5" height="113.5" fill="#FF6347"/><rect x="147" y="421.5" width="1" height="135.8" fill="#FF6347"/><rect x="153" y="480.3" width="5" height="58.3" fill="#FF6347"/><rect x="155" y="455.7" width="1" height="94.4" fill="#FF6347"/><rect x="161" y="509.4" width="5" height="76.4" fill="#FF6347"/><rect x="163" y="485.5" width="1" height="108.6" fill="#FF6347"/><rect x="169" y="547.6" width="5" height="42.1" fill="#FF6347"/><rect x="171" y="529.3" width="1" height="75.5" fill="#FF6347"/><rect x="177" y="568.6" width="5" height="45.3" fill="#FF6347"/><rect x="179" y="557.2" width="1" height="65.1" fill="#FF6347"/><rect x="185" y="591.3" width="5" height="87.3" fill="#FF6347"/><rect x="187" y="571.3" width="1" height="111.4" fill="#FF6347"/><rect x="193" y="634.9" width="5" height="15.0" fill="#FF6347"/><rect x="195" y="611.9" width="1" height="56.8" fill="#FF6347"/><rect x="201" y="595.3" width="5" height="47.1" fill="#2E8B57"/><rect x="203" y="589.5" width="1" height="57.7" fill="#2E8B57"/><rect x="209" y="618.9" width="5" height="49.6" fill="#FF6347"/><rect x="211" y="605.6" width="1" height="109.7" fill="#FF6347"/><rect x="217" y="643.7" width="5" height="67.1" fill="#FF6347"/><rect x="219" y="640.5" width="1" height="114.2" fill="#FF6347"/><rect x="225" y="571.6" width="5" height="105.6" fill="#2E8B57"/><rect x="227" y="548.5" width="1" height="143.9" fill="#2E8B57"/><rect x="233" y="507.5" width="5" height="116.9" fill="#2E8B57"/><rect x="235" y="500.4" width="1" height="130.0" fill="#2E8B57"/><rect x="241" y="498.1" width="5" height="67.8" fill="#2E8B57"/><rect x="243" y="480.0" width="1" height="105.4" fill="#2E8B57"/><rect x="249" y="435.8" width="5" height="96.2" fill="#2E8B57"/><rect x="251" y="416.2" width="1" height="120.9" fill="#2E8B57"/><rect x="257" y="445.3" width="5" height="38.6" fill="#2E8B57"/><rect x="259" y="436.5" width="1" height="61.2" fill="#2E8B57"/><rect x="265" y="462.1" width="5" height="2.5" fill="#2E8B57"/><rect x="267" y="455.0" width="1" height="21.2" fill="#2E8B57"/><rect x="273" y="433.9" width="5" height="29.5" fill="#2E8B57"/><rect x="275" y="425.1" width="1" height="38.6" fill="#2E8B57"/><rect x="281" y="401.6" width="5" height="47.0" fill="#2E8B57"/><rect x="283" y="364.0" width="1" height="106.3" fill="#2E8B57"/><rect x="289" y="425.1" width="5" height="28.7" fill="#FF6347"/><rect x="291" y="422.9" width="1" height="62.9" fill="#FF6347"/><rect x="297" y="439.5" width="5" height="72.7" fill="#FF6347"/><rect x="299" y="422.0" width="1" height="143.0" fill="#FF6347"/><rect x="305" y="475.8" width="5" height="17.8" fill="#FF6347"/><rect x="307" y="454.2" width="1" height="55.5" fill="#FF6347"/><rect x="313" y="484.7" width="5" height="44.5" fill="#FF6347"/><rect x="315" y="472.7" width="1" height="84.5" fill="#FF6347"/><rect x="321" y="507.0" width="5" height="23.1" fill="#FF6347"/><rect x="323" y="490.7" width="1" height="65.2" fill="#FF6347"/><rect x="329" y="497.6" width="5" height="20.9" fill="#2E8B57"/><rect x="331" y="491.2" width="1" height="29.2" fill="#2E8B57"/><rect x="337" y="488.9" width="5" height="19.2" fill="#2E8B57"/><rect x="339" y="462.0" width="1" height="58.5" fill="#2E8B57"/><rect x="345" y="454.0" width="5" height="44.5" fill="#2E8B57"/><rect x="347" y="449.7" width="1" height="60.4" fill="#2E8B57"/><rect x="353" y="442.1" width="5" height="34.1" fill="#2E8B57"/><rect x="355" y="432.0" width="1" height="47.9" fill="#2E8B57"/><rect x="361" y="458.2" width="5" height="1.5" fill="#2E8B57"/><rect x="363" y="457.7" width="1" height="29.3" fill="#2E8B57"/><rect x="369" y="458.7" width="5" height="24.3" fill="#FF6347"/><rect x="371" y="457.1" width="1" height="74.8" fill="#FF6347"/><rect x="377" y="470.8" width="5" height="33.0" fill="#FF6347"/><rect x="379" y="454.9" width="1" height="79.0" fill="#FF6347"/><rect x="385" y="487.3" width="5" height="21.0" fill="#FF6347"/><rect x="387" y="456.2" width="1" height="60.7" fill="#FF6347"/><rect x="393" y="497.8" width="5" height="32.6" fill="#FF6347"/><rect x="395" y="490.4" width="1" height="43.7" fill="#FF6347"/><rect x="401" y="514.1" width="5" height="24.9" fill="#FF6347"/><rect x="403" y="505.1" width="1" height="41.2" fill="#FF6347"/><rect x="409" y="511.8" width="5" height="14.8" fill="#2E8B57"/><rect x="411" y="495.0" width="1" height="75.1" fill="#2E8B57"/><rect x="417" y="513.3" width="5" height="5.9" fill="#2E8B57"/><rect x="419" y="496.6" width="1" height="65.2" fill="#2E8B57"/><rect x="425" y="516.3" width="5" height="13.2" fill="#FF6347"/><rect x="427" y="503.7" width="1" height="53.7" fill="#FF6347"/><rect x="433" y="512.4" width="5" height="10.5" fill="#2E8B57"/><rect x="435" y="498.2" width="1" height="38.0" fill="#2E8B57"/><rect x="441" y="491.1" width="5" height="26.5" fill="#2E8B57"/><rect x="443" y="485.2" width="1" height="41.5" fill="#2E8B57"/><rect x="449" y="483.3" width="5" height="21.0" fill="#2E8B57"/><rect x="451" y="451.3" width="1" height="62.8" fill="#2E8B57"/><rect x="457" y="482.7" width="5" height="11.2" fill="#2E8B57"/><rect x="459" y="450.4" width="1" height="68.1" fill="#2E8B57"/><rect x="465" y="488.3" width="5" height="9.2" fill="#FF6347"/><rect x="467" y="482.2" width="1" height="15.6" fill="#FF6347"/><rect x="473" y="492.9" width="5" height="12.3" fill="#FF6347"/><rect x="475" y="469.3" width="1" height="38.7" fill="#FF6347"/><rect x="481" y="499.0" width="5" height="22.5" fill="#FF6347"/><rect x="483" y="487.7" width="1" height="68.2" fill="#FF6347"/><rect x="489" y="510.1" width="5" height="1.5" fill="#2E8B57"/><rect x="491" y="504.3" width="1" height="25.9" fill="#2E8B57"/><rect x="497" y="507.1" width="5" height="3.1" fill="#2E8B57"/><rect x="499" y="477.4" width="1" height="39.6" fill="#2E8B57"/><rect x="505" y="508.6" width="5" height="6.4" fill="#FF6347"/><rect x="507" y="497.1" width="1" height="18.8" fill="#FF6347"/><rect x="513" y="501.2" width="5" height="10.7" fill="#2E8B57"/><rect x="515" y="485.9" width="1" height="41.7" fill="#2E8B57"/><rect x="521" y="497.4" width="5" height="9.2" fill="#2E8B57"/><rect x="523" y="467.0" width="1" height="43.9" fill="#2E8B57"/><rect x="529" y="486.3" width="5" height="15.7" fill="#2E8B57"/><rect x="531" y="474.9" width="1" height="57.2" fill="#2E8B57"/><rect x="537" y="493.8" width="5" height="1.5" fill="#2E8B57"/><rect x="539" y="464.9" width="1" height="62.2" fill="#2E8B57"/><rect x="545" y="493.9" width="5" height="2.5" fill="#FF6347"/><rect x="547" y="466.0" width="1" height="31.5" fill="#FF6347"/><rect x="553" y="494.9" width="5" height="1.5" fill="#2E8B57"/><rect x="555" y="464.5" width="1" height="32.6" fill="#2E8B57"/><rect x="561" y="495.0" width="5" height="15.6" fill="#FF6347"/><rect x="563" y="479.7" width="1" height="56.3" fill="#FF6347"/><rect x="569" y="502.8" width="5" height="22.0" fill="#FF6347"/><rect x="571" y="452.2" width="1" height="76.5" fill="#FF6347"/><rect x="577" y="513.8" width="5" height="38.5" fill="#FF6347"/><rect x="579" y="511.6" width="1" height="47.1" fill="#FF6347"/><rect x="585" y="533.1" width="5" height="115.1" fill="#FF6347"/><rect x="587" y="521.6" width="1" height="132.4" fill="#FF6347"/><rect x="593" y="590.6" width="5" height="87.1" fill="#FF6347"/><rect x="595" y="588.6" width="1" height="98.1" fill="#FF6347"/><rect x="601" y="634.2" width="5" height="18.8" fill="#FF6347"/><rect x="603" y="631.5" width="1" height="49.0" fill="#FF6347"/><rect x="609" y="636.8" width="5" height="6.7" fill="#2E8B57"/><rect x="611" y="609.3" width="1" height="61.7" fill="#2E8B57"/><rect x="617" y="627.1" width="5" height="13.1" fill="#2E8B57"/><rect x="619" y="623.6" width="1" height="22.1" fill="#2E8B57"/><rect x="625" y="631.9" width="5" height="1.7" fill="#2E8B57"/><rect x="627" y="616.8" width="1" height="25.1" fill="#2E8B57"/><rect x="633" y="632.8" width="5" height="10.0" fill="#FF6347"/><rect x="635" y="614.9" width="1" height="30.5" fill="#FF6347"/><rect x="641" y="617.7" width="5" height="20.1" fill="#2E8B57"/><rect x="643" y="609.8" width="1" height="49.7" fill="#2E8B57"/><rect x="649" y="610.2" width="5" height="17.5" fill="#2E8B57"/><rect x="651" y="598.5" width="1" height="36.9" fill="#2E8B57"/><rect x="657" y="619.0" width="5" height="6.8" fill="#FF6347"/><rect x="659" y="616.6" width="1" height="31.6" fill="#FF6347"/><rect x="665" y="605.7" width="5" height="16.6" fill="#2E8B57"/><rect x="667" y="599.0" width="1" height="25.5" fill="#2E8B57"/><rect x="673" y="588.1" width="5" height="26.0" fill="#2E8B57"/><rect x="675" y="575.4" width="1" height="73.2" fill="#2E8B57"/><rect x="681" y="585.7" width="5" height="15.4" fill="#2E8B57"/><rect x="683" y="561.1" width="1" height="69.2" fill="#2E8B57"/><rect x="689" y="579.6" width="5" height="13.8" fill="#2E8B57"/><rect x="691" y="571.3" width="1" height="28.4" fill="#2E8B57"/><rect x="697" y="560.9" width="5" height="25.6" fill="#2E8B57"/><rect x="699" y="558.2" width="1" height="51.0" fill="#2E8B57"/><rect x="705" y="560.6" width="5" height="13.1" fill="#2E8B57"/><rect x="707" y="544.4" width="1" height="84.4" fill="#2E8B57"/><rect x="713" y="567.1" width="5" height="16.0" fill="#FF6347"/><rect x="715" y="555.1" width="1" height="38.6" fill="#FF6347"/><rect x="721" y="575.1" width="5" height="24.6" fill="#FF6347"/><rect x="723" y="516.7" width="1" height="96.0" fill="#FF6347"/><rect x="729" y="572.8" width="5" height="14.6" fill="#2E8B57"/><rect x="731" y="569.8" width="1" height="27.4" fill="#2E8B57"/><rect x="737" y="564.4" width="5" height="15.7" fill="#2E8B57"/><rect x="739" y="556.8" width="1" height="26.2" fill="#2E8B57"/><rect x="745" y="516.3" width="5" height="55.9" fill="#2E8B57"/><rect x="747" y="492.4" width="1" height="108.6" fill="#2E8B57"/><rect x="753" y="490.8" width="5" height="53.5" fill="#2E8B57"/><rect x="755" y="483.6" width="1" height="62.3" fill="#2E8B57"/><rect x="761" y="505.6" width="5" height="11.9" fill="#2E8B57"/><rect x="763" y="499.3" width="1" height="42.7" fill="#2E8B57"/><rect x="769" y="511.6" width="5" height="38.9" fill="#FF6347"/><rect x="771" y="478.2" width="1" height="79.8" fill="#FF6347"/><rect x="777" y="531.0" width="5" height="47.1" fill="#FF6347"/><rect x="779" y="487.2" width="1" height="113.2" fill="#FF6347"/><rect x="785" y="536.7" width="5" height="17.8" fill="#2E8B57"/><rect x="787" y="521.4" width="1" height="43.6" fill="#2E8B57"/><rect x="793" y="524.0" width="5" height="21.6" fill="#2E8B57"/><rect x="795" y="505.3" width="1" height="41.6" fill="#2E8B57"/><rect x="801" y="495.4" width="5" height="39.4" fill="#2E8B57"/><rect x="803" y="443.5" width="1" height="121.8" fill="#2E8B57"/><rect x="809" y="478.8" width="5" height="36.3" fill="#2E8B57"/><rect x="811" y="441.8" width="1" height="101.5" fill="#2E8B57"/><rect x="817" y="497.0" width="5" height="16.1" fill="#FF6347"/><rect x="819" y="465.8" width="1" height="49.8" fill="#FF6347"/><rect x="825" y="498.4" width="5" height="6.6" fill="#2E8B57"/><rect x="827" y="495.3" width="1" height="49.2" fill="#2E8B57"/><rect x="833" y="454.2" width="5" height="47.5" fill="#2E8B57"/><rect x="835" y="419.2" width="1" height="102.7" fill="#2E8B57"/><rect x="841" y="475.3" width="5" height="2.7" fill="#2E8B57"/><rect x="843" y="463.7" width="1" height="37.6" fill="#2E8B57"/><rect x="849" y="476.6" width="5" height="96.6" fill="#FF6347"/><rect x="851" y="465.5" width="1" height="126.3" fill="#FF6347"/><rect x="857" y="524.9" width="5" height="81.7" fill="#FF6347"/><rect x="859" y="511.8" width="1" height="124.8" fill="#FF6347"/><rect x="865" y="546.9" width="5" height="18.9" fill="#2E8B57"/><rect x="867" y="538.0" width="1" height="44.1" fill="#2E8B57"/><rect x="873" y="525.1" width="5" height="31.2" fill="#2E8B57"/><rect x="875" y="523.9" width="1" height="63.7" fill="#2E8B57"/><rect x="881" y="540.7" width="5" height="4.0" fill="#FF6347"/><rect x="883" y="538.8" width="1" height="34.2" fill="#FF6347"/><rect x="889" y="526.8" width="5" height="15.9" fill="#2E8B57"/><rect x="891" y="502.4" width="1" height="45.1" fill="#2E8B57"/><rect x="897" y="505.1" width="5" height="29.6" fill="#2E8B57"/><rect x="899" y="470.2" width="1" height="101.9" fill="#2E8B57"/><rect x="905" y="444.0" width="5" height="76.0" fill="#2E8B57"/><rect x="907" y="409.0" width="1" height="113.3" fill="#2E8B57"/><rect x="913" y="428.9" width="5" height="53.1" fill="#2E8B57"/><rect x="915" y="425.1" width="1" height="57.5" fill="#2E8B57"/><rect x="921" y="454.7" width="5" height="1.5" fill="#2E8B57"/><rect x="923" y="438.8" width="1" height="23.6" fill="#2E8B57"/><rect x="929" y="410.1" width="5" height="45.0" fill="#2E8B57"/><rect x="931" y="386.1" width="1" height="93.0" fill="#2E8B57"/><rect x="937" y="365.4" width="5" height="67.2" fill="#2E8B57"/><rect x="939" y="362.8" width="1" height="72.0" fill="#2E8B57"/><rect x="945" y="362.6" width="5" height="36.4" fill="#2E8B57"/><rect x="947" y="344.7" width="1" height="62.1" fill="#2E8B57"/><rect x="953" y="334.4" width="5" height="46.4" fill="#2E8B57"/><rect x="955" y="313.7" width="1" height="106.8" fill="#2E8B57"/><rect x="961" y="321.6" width="5" height="36.0" fill="#2E8B57"/><rect x="963" y="313.9" width="1" height="52.1" fill="#2E8B57"/><rect x="969" y="339.6" width="5" height="10.3" fill="#FF6347"/><rect x="971" y="326.5" width="1" height="26.0" fill="#FF6347"/><rect x="977" y="344.8" width="5" height="34.9" fill="#FF6347"/><rect x="979" y="335.9" width="1" height="45.8" fill="#FF6347"/><rect x="985" y="362.2" width="5" height="14.4" fill="#FF6347"/><rect x="987" y="353.5" width="1" height="44.4" fill="#FF6347"/><rect x="993" y="358.0" width="5" height="11.3" fill="#2E8B57"/><rect x="995" y="313.5" width="1" height="57.1" fill="#2E8B57"/><rect x="1001" y="363.7" width="5" height="24.4" fill="#FF6347"/><rect x="1003" y="347.8" width="1" height="71.4" fill="#FF6347"/><rect x="1009" y="375.9" width="5" height="99.8" fill="#FF6347"/><rect x="1011" y="332.4" width="1" height="155.1" fill="#FF6347"/><rect x="1017" y="425.8" width="5" height="69.7" fill="#FF6347"/><rect x="1019" y="417.4" width="1" height="87.0" fill="#FF6347"/><rect x="1025" y="460.7" width="5" height="73.0" fill="#FF6347"/><rect x="1027" y="443.4" width="1" height="92.3" fill="#FF6347"/><rect x="1033" y="497.2" width="5" height="92.1" fill="#FF6347"/><rect x="1035" y="457.2" width="1" height="150.7" fill="#FF6347"/><rect x="1041" y="543.3" width="5" height="61.6" fill="#FF6347"/><rect x="1043" y="542.9" width="1" height="111.5" fill="#FF6347"/><rect x="1049" y="564.9" width="5" height="9.2" fill="#2E8B57"/><rect x="1051" y="533.8" width="1" height="58.5" fill="#2E8B57"/><rect x="1057" y="544.1" width="5" height="25.4" fill="#2E8B57"/><rect x="1059" y="533.9" width="1" height="62.0" fill="#2E8B57"/><rect x="1065" y="556.8" width="5" height="24.6" fill="#FF6347"/><rect x="1067" y="537.3" width="1" height="84.8" fill="#FF6347"/><rect x="1073" y="569.1" width="5" height="42.2" fill="#FF6347"/><rect x="1075" y="561.4" width="1" height="50.9" fill="#FF6347"/><rect x="1081" y="590.1" width="5" height="67.8" fill="#FF6347"/><rect x="1083" y="545.0" width="1" height="132.8" fill="#FF6347"/><rect x="1089" y="624.0" width="5" height="86.5" fill="#FF6347"/><rect x="1091" y="597.4" width="1" height="140.5" fill="#FF6347"/><rect x="1097" y="667.3" width="5" height="31.3" fill="#FF6347"/><rect x="1099" y="664.7" width="1" height="36.1" fill="#FF6347"/><rect x="1105" y="682.9" width="5" height="31.6" fill="#FF6347"/><rect x="1107" y="648.8" width="1" height="76.4" fill="#FF6347"/><rect x="1113" y="698.7" width="5" height="22.6" fill="#FF6347"/><rect x="1115" y="687.2" width="1" height="41.7" fill="#FF6347"/><rect x="1121" y="710.0" width="5" height="32.2" fill="#FF6347"/><rect x="1123" y="705.4" width="1" height="63.2" fill="#FF6347"/><rect x="1129" y="726.1" width="5" height="68.3" fill="#FF6347"/><rect x="1131" y="717.1" width="1" height="107.7" fill="#FF6347"/><rect x="1137" y="760.3" width="5" height="37.7" fill="#FF6347"/><rect x="1139" y="756.1" width="1" height="62.0" fill="#FF6347"/><rect x="1145" y="779.1" width="5" height="7.2" fill="#FF6347"/><rect x="1147" y="769.5" width="1" height="51.7" fill="#FF6347"/><rect x="1153" y="768.4" width="5" height="14.3" fill="#2E8B57"/><rect x="1155" y="766.1" width="1" height="52.0" fill="#2E8B57"/><rect x="1161" y="753.0" width="5" height="22.5" fill="#2E8B57"/><rect x="1163" y="741.0" width="1" height="77.3" fill="#2E8B57"/><rect x="1169" y="746.1" width="5" height="18.1" fill="#2E8B57"/><rect x="1171" y="726.2" width="1" height="43.4" fill="#2E8B57"/><rect x="1177" y="754.6" width="5" height="1.5" fill="#2E8B57"/><rect x="1179" y="701.4" width="1" height="70.7" fill="#2E8B57"/><rect x="1185" y="754.9" width="5" height="5.8" fill="#FF6347"/><rect x="1187" y="727.9" width="1" height="77.6" fill="#FF6347"/><rect x="1193" y="734.8" width="5" height="23.0" fill="#2E8B57"/><rect x="1195" y="721.3" width="1" height="37.6" fill="#2E8B57"/><rect x="1201" y="746.3" width="5" height="10.6" fill="#FF6347"/><rect x="1203" y="742.9" width="1" height="64.7" fill="#FF6347"/><rect x="1209" y="751.6" width="5" height="13.9" fill="#FF6347"/><rect x="1211" y="715.6" width="1" height="55.5" fill="#FF6347"/><rect x="1217" y="758.6" width="5" height="21.9" fill="#FF6347"/><rect x="1219" y="708.1" width="1" height="75.5" fill="#FF6347"/><rect x="1225" y="769.5" width="5" height="27.5" fill="#FF6347"/><rect x="1227" y="759.5" width="1" height="59.3" fill="#FF6347"/><rect x="1233" y="783.3" width="5" height="44.8" fill="#FF6347"/><rect x="1235" y="777.2" width="1" height="61.4" fill="#FF6347"/><rect x="1241" y="805.7" width="5" height="58.5" fill="#FF6347"/><rect x="1243" y="770.7" width="1" height="111.8" fill="#FF6347"/><rect x="1249" y="834.9" width="5" height="37.7" fill="#FF6347"/><rect x="1251" y="830.2" width="1" height="56.5" fill="#FF6347"/><rect x="1257" y="850.4" width="5" height="3.4" fill="#2E8B57"/><rect x="1259" y="797.0" width="1" height="67.8" fill="#2E8B57"/><rect x="1265" y="843.0" width="5" height="9.1" fill="#2E8B57"/><rect x="1267" y="827.4" width="1" height="77.3" fill="#2E8B57"/><rect x="1273" y="842.2" width="5" height="5.3" fill="#2E8B57"/><rect x="1275" y="824.9" width="1" height="59.8" fill="#2E8B57"/><rect x="1281" y="844.9" width="5" height="4.7" fill="#FF6347"/><rect x="1283" y="840.6" width="1" height="47.1" fill="#FF6347"/><rect x="1289" y="847.2" width="5" height="11.0" fill="#FF6347"/><rect x="1291" y="829.6" width="1" height="42.9" fill="#FF6347"/><rect x="1297" y="852.7" width="5" height="11.7" fill="#FF6347"/><rect x="1299" y="846.2" width="1" height="37.0" fill="#FF6347"/><rect x="1305" y="833.9" width="5" height="24.7" fill="#2E8B57"/><rect x="1307" y="812.5" width="1" height="49.5" fill="#2E8B57"/><rect x="1313" y="846.2" width="5" height="6.5" fill="#FF6347"/><rect x="1315" y="839.1" width="1" height="15.1" fill="#FF6347"/><rect x="1321" y="849.5" width="5" height="25.6" fill="#FF6347"/><rect x="1323" y="824.6" width="1" height="51.5" fill="#FF6347"/><rect x="1329" y="862.3" width="5" height="23.6" fill="#FF6347"/><rect x="1331" y="852.7" width="1" height="42.8" fill="#FF6347"/><rect x="1337" y="874.1" width="5" height="18.6" fill="#FF6347"/><rect x="1339" y="856.5" width="1" height="39.3" fill="#FF6347"/><rect x="1345" y="883.4" width="5" height="19.2" fill="#FF6347"/><rect x="1347" y="868.4" width="1" height="35.2" fill="#FF6347"/><rect x="1353" y="883.2" width="5" height="9.8" fill="#2E8B57"/><rect x="1355" y="869.5" width="1" height="45.4" fill="#2E8B57"/><rect x="1361" y="844.7" width="5" height="43.3" fill="#2E8B57"/><rect x="1363" y="841.3" width="1" height="60.2" fill="#2E8B57"/><rect x="1369" y="836.4" width="5" height="30.0" fill="#2E8B57"/><rect x="1371" y="830.2" width="1" height="47.9" fill="#2E8B57"/><rect x="1377" y="846.0" width="5" height="5.4" fill="#2E8B57"/><rect x="1379" y="833.0" width="1" height="61.3" fill="#2E8B57"/><rect x="1385" y="848.7" width="5" height="1.5" fill="#FF6347"/><rect x="1387" y="806.1" width="1" height="60.7" fill="#FF6347"/><rect x="1393" y="840.6" width="5" height="8.7" fill="#2E8B57"/><rect x="1395" y="817.0" width="1" height="35.6" fill="#2E8B57"/><rect x="1401" y="818.7" width="5" height="26.1" fill="#2E8B57"/><rect x="1403" y="806.2" width="1" height="57.9" fill="#2E8B57"/><rect x="1409" y="825.4" width="5" height="6.4" fill="#2E8B57"/><rect x="1411" y="819.6" width="1" height="28.7" fill="#2E8B57"/><rect x="1417" y="827.9" width="5" height="1.5" fill="#2E8B57"/><rect x="1419" y="818.4" width="1" height="16.2" fill="#2E8B57"/><rect x="1425" y="828.2" width="5" height="2.1" fill="#FF6347"/><rect x="1427" y="821.3" width="1" height="19.4" fill="#FF6347"/><rect x="1433" y="810.3" width="5" height="19.0" fill="#2E8B57"/><rect x="1435" y="805.9" width="1" height="36.2" fill="#2E8B57"/><rect x="1441" y="800.5" width="5" height="19.3" fill="#2E8B57"/><rect x="1443" y="773.4" width="1" height="52.0" fill="#2E8B57"/><rect x="1449" y="780.3" width="5" height="29.8" fill="#2E8B57"/><rect x="1451" y="749.5" width="1" height="67.5" fill="#2E8B57"/><rect x="1457" y="790.6" width="5" height="4.6" fill="#2E8B57"/><rect x="1459" y="776.0" width="1" height="21.0" fill="#2E8B57"/><rect x="1465" y="790.1" width="5" height="2.8" fill="#2E8B57"/><rect x="1467" y="762.3" width="1" height="66.6" fill="#2E8B57"/><rect x="1473" y="756.6" width="5" height="35.0" fill="#2E8B57"/><rect x="1475" y="725.8" width="1" height="79.6" fill="#2E8B57"/><rect x="1481" y="771.1" width="5" height="2.9" fill="#2E8B57"/><rect x="1483" y="741.3" width="1" height="41.0" fill="#2E8B57"/><rect x="1489" y="753.4" width="5" height="19.2" fill="#2E8B57"/><rect x="1491" y="752.7" width="1" height="25.3" fill="#2E8B57"/><rect x="1497" y="729.7" width="5" height="33.3" fill="#2E8B57"/><rect x="1499" y="728.9" width="1" height="93.2" fill="#2E8B57"/><rect x="1505" y="699.8" width="5" height="46.6" fill="#2E8B57"/><rect x="1507" y="697.6" width="1" height="84.8" fill="#2E8B57"/><rect x="1513" y="721.6" width="5" height="1.5" fill="#2E8B57"/><rect x="1515" y="717.0" width="1" height="6.4" fill="#2E8B57"/><rect x="1521" y="695.3" width="5" height="27.0" fill="#2E8B57"/><rect x="1523" y="681.0" width="1" height="59.6" fill="#2E8B57"/><rect x="1529" y="680.2" width="5" height="28.6" fill="#2E8B57"/><rect x="1531" y="663.0" width="1" height="60.8" fill="#2E8B57"/><rect x="1537" y="680.2" width="5" height="14.3" fill="#2E8B57"/><rect x="1539" y="647.7" width="1" height="59.9" fill="#2E8B57"/><rect x="1545" y="670.3" width="5" height="17.0" fill="#2E8B57"/><rect x="1547" y="646.1" width="1" height="44.8" fill="#2E8B57"/><rect x="1553" y="671.2" width="5" height="7.6" fill="#2E8B57"/><rect x="1555" y="657.1" width="1" height="35.6" fill="#2E8B57"/><rect x="1561" y="636.8" width="5" height="38.2" fill="#2E8B57"/><rect x="1563" y="626.6" width="1" height="48.5" fill="#2E8B57"/><rect x="1569" y="650.4" width="5" height="5.6" fill="#2E8B57"/><rect x="1571" y="626.6" width="1" height="35.8" fill="#2E8B57"/><rect x="1577" y="645.9" width="5" height="7.3" fill="#2E8B57"/><rect x="1579" y="631.9" width="1" height="40.2" fill="#2E8B57"/><rect x="1585" y="637.5" width="5" height="12.0" fill="#2E8B57"/><rect x="1587" y="587.3" width="1" height="69.8" fill="#2E8B57"/><rect x="1593" y="613.2" width="5" height="30.3" fill="#2E8B57"/><rect x="1595" y="597.9" width="1" height="86.1" fill="#2E8B57"/><rect x="1601" y="600.3" width="5" height="28.0" fill="#2E8B57"/><rect x="1603" y="566.8" width="1" height="75.5" fill="#2E8B57"/><rect x="1609" y="611.9" width="5" height="2.4" fill="#2E8B57"/><rect x="1611" y="587.6" width="1" height="40.0" fill="#2E8B57"/><rect x="1617" y="596.9" width="5" height="16.2" fill="#2E8B57"/><rect x="1619" y="566.8" width="1" height="54.2" fill="#2E8B57"/><rect x="1625" y="591.0" width="5" height="14.0" fill="#2E8B57"/><rect x="1627" y="569.0" width="1" height="45.1" fill="#2E8B57"/><rect x="1633" y="598.0" width="5" height="1.5" fill="#2E8B57"/><rect x="1635" y="583.5" width="1" height="25.9" fill="#2E8B57"/><rect x="1641" y="595.8" width="5" height="2.2" fill="#2E8B57"/><rect x="1643" y="558.4" width="1" height="39.9" fill="#2E8B57"/><rect x="1649" y="596.9" width="5" height="27.8" fill="#FF6347"/><rect x="1651" y="587.7" width="1" height="41.2" fill="#FF6347"/><rect x="1657" y="610.8" width="5" height="82.2" fill="#FF6347"/><rect x="1659" y="587.8" width="1" height="148.5" fill="#FF6347"/><rect x="1665" y="651.9" width="5" height="75.6" fill="#FF6347"/><rect x="1667" y="648.2" width="1" height="81.4" fill="#FF6347"/><rect x="1673" y="689.7" width="5" height="113.7" fill="#FF6347"/><rect x="1675" y="685.7" width="1" height="154.2" fill="#FF6347"/><rect x="1681" y="746.6" width="5" height="62.7" fill="#FF6347"/><rect x="1683" y="745.8" width="1" height="80.2" fill="#FF6347"/><rect x="1689" y="746.7" width="5" height="31.2" fill="#2E8B57"/><rect x="1691" y="739.5" width="1" height="49.9" fill="#2E8B57"/><rect x="1697" y="699.6" width="5" height="62.8" fill="#2E8B57"/><rect x="1699" y="699.1" width="1" height="75.3" fill="#2E8B57"/><rect x="1705" y="654.8" width="5" height="76.2" fill="#2E8B57"/><rect x="1707" y="650.1" width="1" height="112.6" fill="#2E8B57"/><rect x="1713" y="594.0" width="5" height="98.8" fill="#2E8B57"/><rect x="1715" y="593.1" width="1" height="130.5" fill="#2E8B57"/><rect x="1721" y="583.1" width="5" height="60.4" fill="#2E8B57"/><rect x="1723" y="562.7" width="1" height="87.9" fill="#2E8B57"/><rect x="1729" y="595.4" width="5" height="17.9" fill="#2E8B57"/><rect x="1731" y="594.9" width="1" height="25.6" fill="#2E8B57"/><rect x="1737" y="604.3" width="5" height="28.3" fill="#FF6347"/><rect x="1739" y="542.1" width="1" height="97.2" fill="#FF6347"/><rect x="1745" y="618.5" width="5" height="44.9" fill="#FF6347"/><rect x="1747" y="576.4" width="1" height="97.9" fill="#FF6347"/><rect x="1753" y="640.9" width="5" height="49.8" fill="#FF6347"/><rect x="1755" y="629.6" width="1" height="64.6" fill="#FF6347"/><rect x="1761" y="665.8" width="5" height="35.7" fill="#FF6347"/><rect x="1763" y="665.0" width="1" height="72.4" fill="#FF6347"/><rect x="1769" y="683.7" width="5" height="79.4" fill="#FF6347"/><rect x="1771" y="667.0" width="1" height="109.4" fill="#FF6347"/><rect x="1777" y="723.4" width="5" height="58.1" fill="#FF6347"/><rect x="1779" y="715.9" width="1" height="113.1" fill="#FF6347"/><rect x="1785" y="752.4" width="5" height="83.0" fill="#FF6347"/><rect x="1787" y="726.6" width="1" height="118.5" fill="#FF6347"/><rect x="1793" y="793.9" width="5" height="78.7" fill="#FF6347"/><rect x="1795" y="793.5" width="1" height="87.8" fill="#FF6347"/><rect x="1801" y="833.3" width="5" height="110.9" fill="#FF6347"/><rect x="1803" y="824.5" width="1" height="125.9" fill="#FF6347"/><rect x="1809" y="888.7" width="5" height="65.8" fill="#FF6347"/><rect x="1811" y="886.4" width="1" height="76.5" fill="#FF6347"/><rect x="1817" y="921.6" width="5" height="78.4" fill="#FF6347"/><rect x="1819" y="894.0" width="1" height="119.8" fill="#FF6347"/><rect x="1825" y="960.8" width="5" height="70.7" fill="#FF6347"/><rect x="1827" y="925.6" width="1" height="109.0" fill="#FF6347"/><rect x="1833" y="996.2" width="5" height="43.3" fill="#FF6347"/><rect x="1835" y="991.3" width="1" height="64.4" fill="#FF6347"/><rect x="1841" y="1017.9" width="5" height="6.2" fill="#FF6347"/><rect x="1843" y="1002.4" width="1" height="44.7" fill="#FF6347"/><rect x="1849" y="1021.0" width="5" height="1.5" fill="#FF6347"/><rect x="1851" y="1019.5" width="1" height="16.2" fill="#FF6347"/><rect x="1857" y="1021.7" width="5" height="6.4" fill="#FF6347"/><rect x="1859" y="1007.5" width="1" height="42.4" fill="#FF6347"/><rect x="1865" y="1018.7" width="5" height="6.2" fill="#2E8B57"/><rect x="1867" y="981.2" width="1" height="51.1" fill="#2E8B57"/><rect x="1873" y="1021.8" width="5" height="8.6" fill="#FF6347"/><rect x="1875" y="987.7" width="1" height="55.4" fill="#FF6347"/><rect x="1881" y="1026.1" width="5" height="16.3" fill="#FF6347"/><rect x="1883" y="1011.2" width="1" height="45.4" fill="#FF6347"/><rect x="1889" y="1030.0" width="5" height="4.3" fill="#2E8B57"/><rect x="1891" y="982.5" width="1" height="66.5" fill="#2E8B57"/><rect x="1897" y="986.7" width="5" height="45.4" fill="#2E8B57"/><rect x="1899" y="970.8" width="1" height="62.7" fill="#2E8B57"/><rect x="1905" y="966.9" width="5" height="42.5" fill="#2E8B57"/><rect x="1907" y="934.4" width="1" height="91.2" fill="#2E8B57"/><rect x="1913" y="983.8" width="5" height="4.4" fill="#2E8B57"/><rect x="1915" y="956.9" width="1" height="39.4" fill="#2E8B57"/><rect x="1921" y="986.0" width="5" height="7.7" fill="#FF6347"/><rect x="1923" y="984.2" width="1" height="26.6" fill="#FF6347"/><rect x="1929" y="989.9" width="5" height="11.8" fill="#FF6347"/><rect x="1931" y="963.3" width="1" height="39.0" fill="#FF6347"/><rect x="1937" y="995.8" width="5" height="33.1" fill="#FF6347"/><rect x="1939" y="950.6" width="1" height="92.3" fill="#FF6347"/><rect x="1945" y="1012.3" width="5" height="21.9" fill="#FF6347"/><rect x="1947" y="998.2" width="1" height="63.2" fill="#FF6347"/><rect x="1953" y="1023.3" width="5" height="16.7" fill="#FF6347"/><rect x="1955" y="998.7" width="1" height="77.2" fill="#FF6347"/><rect x="1961" y="1031.7" width="5" height="15.8" fill="#FF6347"/><rect x="1963" y="998.0" width="1" height="63.9" fill="#FF6347"/><rect x="1969" y="1039.5" width="5" height="1.5" fill="#FF6347"/><rect x="1971" y="1024.7" width="1" height="40.4" fill="#FF6347"/><rect x="1977" y="1031.8" width="5" height="8.3" fill="#2E8B57"/><rect x="1979" y="1023.4" width="1" height="25.7" fill="#2E8B57"/><rect x="1985" y="1025.3" width="5" height="10.6" fill="#2E8B57"/><rect x="1987" y="1018.2" width="1" height="18.6" fill="#2E8B57"/><rect x="1993" y="1023.3" width="5" height="7.3" fill="#2E8B57"/><rect x="1995" y="1013.4" width="1" height="42.3" fill="#2E8B57"/><rect x="2001" y="1006.4" width="5" height="20.6" fill="#2E8B57"/><rect x="2003" y="1001.8" width="1" height="34.4" fill="#2E8B57"/><rect x="2009" y="1013.0" width="5" height="3.6" fill="#2E8B57"/><rect x="2011" y="999.3" width="1" height="19.2" fill="#2E8B57"/><rect x="2017" y="1014.8" width="5" height="3.8" fill="#FF6347"/><rect x="2019" y="1002.1" width="1" height="49.1" fill="#FF6347"/><rect x="2025" y="997.8" width="5" height="19.0" fill="#2E8B57"/><rect x="2027" y="979.0" width="1" height="58.2" fill="#2E8B57"/><rect x="2033" y="990.0" width="5" height="17.3" fill="#2E8B57"/><rect x="2035" y="964.9" width="1" height="51.8" fill="#2E8B57"/><rect x="2041" y="995.2" width="5" height="3.5" fill="#2E8B57"/><rect x="2043" y="951.0" width="1" height="55.7" fill="#2E8B57"/><rect x="2049" y="988.2" width="5" height="8.7" fill="#2E8B57"/><rect x="2051" y="977.1" width="1" height="51.1" fill="#2E8B57"/><rect x="2057" y="992.6" width="5" height="9.5" fill="#FF6347"/><rect x="2059" y="962.2" width="1" height="51.4" fill="#FF6347"/><rect x="2065" y="997.3" width="5" height="9.6" fill="#FF6347"/><rect x="2067" y="948.5" width="1" height="92.5" fill="#FF6347"/><rect x="2073" y="1002.1" width="5" height="12.5" fill="#FF6347"/><rect x="2075" y="999.5" width="1" height="37.7" fill="#FF6347"/><rect x="2081" y="1001.0" width="5" height="7.4" fill="#2E8B57"/><rect x="2083" y="967.2" width="1" height="49.0" fill="#2E8B57"/><rect x="2089" y="987.8" width="5" height="16.8" fill="#2E8B57"/><rect x="2091" y="981.2" width="1" height="33.2" fill="#2E8B57"/><rect x="2097" y="980.2" width="5" height="16.1" fill="#2E8B57"/><rect x="2099" y="973.4" width="1" height="37.0" fill="#2E8B57"/><rect x="2105" y="973.7" width="5" height="14.6" fill="#2E8B57"/><rect x="2107" y="969.2" width="1" height="38.9" fill="#2E8B57"/><rect x="2113" y="980.9" width="5" height="1.5" fill="#FF6347"/><rect x="2115" y="979.2" width="1" height="20.1" fill="#FF6347"/><rect x="2121" y="981.5" width="5" height="2.1" fill="#FF6347"/><rect x="2123" y="976.0" width="1" height="33.4" fill="#FF6347"/><rect x="2129" y="982.3" width="5" height="1.5" fill="#2E8B57"/><rect x="2131" y="980.5" width="1" height="12.7" fill="#2E8B57"/><rect x="2137" y="982.5" width="5" height="3.5" fill="#FF6347"/><rect x="2139" y="976.6" width="1" height="50.2" fill="#FF6347"/><rect x="2145" y="984.2" width="5" height="4.8" fill="#FF6347"/><rect x="2147" y="973.8" width="1" height="28.7" fill="#FF6347"/><rect x="2153" y="984.6" width="5" height="2.0" fill="#2E8B57"/><rect x="2155" y="970.9" width="1" height="36.4" fill="#2E8B57"/><rect x="2161" y="985.6" width="5" height="47.4" fill="#FF6347"/><rect x="2163" y="981.6" width="1" height="51.7" fill="#FF6347"/><rect x="2169" y="1009.3" width="5" height="35.9" fill="#FF6347"/><rect x="2171" y="964.2" width="1" height="92.2" fill="#FF6347"/><rect x="2177" y="1027.3" width="5" height="33.1" fill="#FF6347"/><rect x="2179" y="1016.3" width="1" height="57.6" fill="#FF6347"/><rect x="2185" y="1043.8" width="5" height="12.0" fill="#FF6347"/><rect x="2187" y="1033.6" width="1" height="29.5" fill="#FF6347"/><rect x="2193" y="1049.8" width="5" height="12.2" fill="#FF6347"/><rect x="2195" y="1035.2" width="1" height="30.2" fill="#FF6347"/><rect x="2201" y="1048.7" width="5" height="7.2" fill="#2E8B57"/><rect x="2203" y="1008.6" width="1" height="51.8" fill="#2E8B57"/><rect x="2209" y="1052.3" width="5" height="37.3" fill="#FF6347"/><rect x="2211" y="1046.0" width="1" height="44.1" fill="#FF6347"/><rect x="2217" y="1071.0" width="5" height="28.1" fill="#FF6347"/><rect x="2219" y="1044.8" width="1" height="63.1" fill="#FF6347"/><rect x="2225" y="1085.0" width="5" height="4.6" fill="#FF6347"/><rect x="2227" y="1081.9" width="1" height="15.4" fill="#FF6347"/><rect x="2233" y="1087.3" width="5" height="14.3" fill="#FF6347"/><rect x="2235" y="1084.8" width="1" height="19.7" fill="#FF6347"/><rect x="2241" y="1094.5" width="5" height="12.2" fill="#FF6347"/><rect x="2243" y="1083.4" width="1" height="23.5" fill="#FF6347"/><rect x="2249" y="1096.4" width="5" height="4.2" fill="#2E8B57"/><rect x="2251" y="1054.4" width="1" height="46.4" fill="#2E8B57"/><rect x="2257" y="1098.5" width="5" height="25.1" fill="#FF6347"/><rect x="2259" y="1074.3" width="1" height="55.3" fill="#FF6347"/><rect x="2265" y="1111.0" width="5" height="22.1" fill="#FF6347"/><rect x="2267" y="1104.6" width="1" height="33.2" fill="#FF6347"/><rect x="2273" y="1115.3" width="5" height="6.8" fill="#2E8B57"/><rect x="2275" y="1113.4" width="1" height="9.4" fill="#2E8B57"/><rect x="2281" y="1118.7" width="5" height="11.6" fill="#FF6347"/><rect x="2283" y="1081.3" width="1" height="57.9" fill="#FF6347"/><rect x="2289" y="1124.5" width="5" height="15.7" fill="#FF6347"/><rect x="2291" y="1080.3" width="1" height="64.0" fill="#FF6347"/><rect x="2297" y="1132.4" width="5" height="24.2" fill="#FF6347"/><rect x="2299" y="1106.4" width="1" height="56.9" fill="#FF6347"/><rect x="2305" y="1144.5" width="5" height="50.5" fill="#FF6347"/><rect x="2307" y="1133.5" width="1" height="87.0" fill="#FF6347"/><rect x="2313" y="1169.7" width="5" height="20.5" fill="#FF6347"/><rect x="2315" y="1119.4" width="1" height="71.7" fill="#FF6347"/><rect x="2321" y="1175.0" width="5" height="5.0" fill="#2E8B57"/><rect x="2323" y="1165.3" width="1" height="52.0" fill="#2E8B57"/><rect x="2329" y="1177.5" width="5" height="32.3" fill="#FF6347"/><rect x="2331" y="1172.2" width="1" height="44.1" fill="#FF6347"/><rect x="2337" y="1193.6" width="5" height="2.9" fill="#FF6347"/><rect x="2339" y="1181.1" width="1" height="48.4" fill="#FF6347"/><rect x="2345" y="1155.4" width="5" height="39.6" fill="#2E8B57"/><rect x="2347" y="1134.0" width="1" height="77.8" fill="#2E8B57"/><rect x="2353" y="1121.1" width="5" height="54.2" fill="#2E8B57"/><rect x="2355" y="1087.9" width="1" height="112.8" fill="#2E8B57"/><rect x="2361" y="1140.4" width="5" height="7.7" fill="#2E8B57"/><rect x="2363" y="1137.0" width="1" height="17.0" fill="#2E8B57"/><rect x="2369" y="1144.3" width="5" height="14.6" fill="#FF6347"/><rect x="2371" y="1131.8" width="1" height="77.4" fill="#FF6347"/><rect x="2377" y="1119.4" width="5" height="32.2" fill="#2E8B57"/><rect x="2379" y="1110.0" width="1" height="41.9" fill="#2E8B57"/><rect x="2385" y="1106.0" width="5" height="29.5" fill="#2E8B57"/><rect x="2387" y="1092.0" width="1" height="53.7" fill="#2E8B57"/><rect x="2393" y="1120.7" width="5" height="7.4" fill="#FF6347"/><rect x="2395" y="1116.1" width="1" height="45.7" fill="#FF6347"/><rect x="2401" y="1101.1" width="5" height="23.4" fill="#2E8B57"/><rect x="2403" y="1086.8" width="1" height="50.2" fill="#2E8B57"/><rect x="2409" y="1054.2" width="5" height="58.5" fill="#2E8B57"/><rect x="2411" y="1043.0" width="1" height="115.7" fill="#2E8B57"/><rect x="2417" y="1054.6" width="5" height="28.9" fill="#2E8B57"/><rect x="2419" y="1035.0" width="1" height="60.2" fill="#2E8B57"/><rect x="2425" y="1049.7" width="5" height="19.3" fill="#2E8B57"/><rect x="2427" y="1016.3" width="1" height="67.4" fill="#2E8B57"/><rect x="2433" y="1059.4" width="5" height="51.4" fill="#FF6347"/><rect x="2435" y="1024.8" width="1" height="129.7" fill="#FF6347"/><rect x="2441" y="1085.1" width="5" height="47.2" fill="#FF6347"/><rect x="2443" y="1078.8" width="1" height="63.8" fill="#FF6347"/><rect x="2449" y="1108.5" width="5" height="1.5" fill="#2E8B57"/><rect x="2451" y="1101.6" width="1" height="49.7" fill="#2E8B57"/><rect x="2457" y="1108.6" width="5" height="18.3" fill="#FF6347"/><rect x="2459" y="1097.5" width="1" height="63.2" fill="#FF6347"/><rect x="2465" y="1117.7" width="5" height="57.6" fill="#FF6347"/><rect x="2467" y="1097.2" width="1" height="90.2" fill="#FF6347"/><rect x="2473" y="1146.6" width="5" height="58.8" fill="#FF6347"/><rect x="2475" y="1137.6" width="1" height="82.1" fill="#FF6347"/><rect x="2481" y="1176.0" width="5" height="28.8" fill="#FF6347"/><rect x="2483" y="1175.6" width="1" height="38.7" fill="#FF6347"/><rect x="2489" y="1190.3" width="5" height="2.2" fill="#FF6347"/><rect x="2491" y="1164.9" width="1" height="71.1" fill="#FF6347"/><rect x="2497" y="1175.5" width="5" height="15.9" fill="#2E8B57"/><rect x="2499" y="1168.4" width="1" height="51.0" fill="#2E8B57"/><rect x="2505" y="1183.5" width="5" height="2.5" fill="#FF6347"/><rect x="2507" y="1172.7" width="1" height="37.7" fill="#FF6347"/><rect x="2513" y="1184.7" width="5" height="53.3" fill="#FF6347"/><rect x="2515" y="1166.7" width="1" height="79.9" fill="#FF6347"/><rect x="2521" y="1211.4" width="5" height="59.0" fill="#FF6347"/><rect x="2523" y="1192.4" width="1" height="84.7" fill="#FF6347"/><rect x="2529" y="1240.8" width="5" height="1.5" fill="#2E8B57"/><rect x="2531" y="1240.5" width="1" height="27.1" fill="#2E8B57"/><rect x="2537" y="1198.5" width="5" height="42.3" fill="#2E8B57"/><rect x="2539" y="1180.3" width="1" height="81.7" fill="#2E8B57"/><rect x="2545" y="1189.6" width="5" height="30.1" fill="#2E8B57"/><rect x="2547" y="1182.2" width="1" height="42.1" fill="#2E8B57"/><rect x="2553" y="1200.1" width="5" height="4.5" fill="#2E8B57"/><rect x="2555" y="1199.3" width="1" height="14.9" fill="#2E8B57"/><rect x="2561" y="1155.8" width="5" height="46.6" fill="#2E8B57"/><rect x="2563" y="1124.3" width="1" height="103.8" fill="#2E8B57"/><rect x="2569" y="1126.3" width="5" height="52.8" fill="#2E8B57"/><rect x="2571" y="1079.3" width="1" height="106.3" fill="#2E8B57"/><rect x="2577" y="1139.0" width="5" height="13.6" fill="#2E8B57"/><rect x="2579" y="1120.7" width="1" height="56.3" fill="#2E8B57"/><rect x="2585" y="1145.9" width="5" height="4.4" fill="#FF6347"/><rect x="2587" y="1109.1" width="1" height="45.0" fill="#FF6347"/><rect x="2593" y="1148.0" width="5" height="5.8" fill="#FF6347"/><rect x="2595" y="1141.5" width="1" height="33.7" fill="#FF6347"/><rect x="2601" y="1151.0" width="5" height="4.7" fill="#FF6347"/><rect x="2603" y="1102.0" width="1" height="54.7" fill="#FF6347"/><rect x="2609" y="1153.3" width="5" height="51.6" fill="#FF6347"/><rect x="2611" y="1141.6" width="1" height="72.8" fill="#FF6347"/><rect x="2617" y="1179.1" width="5" height="19.1" fill="#FF6347"/><rect x="2619" y="1162.7" width="1" height="44.5" fill="#FF6347"/><rect x="2625" y="1188.6" width="5" height="2.0" fill="#FF6347"/><rect x="2627" y="1159.5" width="1" height="38.2" fill="#FF6347"/><rect x="2633" y="1189.6" width="5" height="8.4" fill="#FF6347"/><rect x="2635" y="1182.3" width="1" height="61.9" fill="#FF6347"/><rect x="2641" y="1193.8" width="5" height="27.1" fill="#FF6347"/><rect x="2643" y="1183.5" width="1" height="56.2" fill="#FF6347"/><rect x="2649" y="1198.6" width="5" height="8.7" fill="#2E8B57"/><rect x="2651" y="1187.5" width="1" height="41.1" fill="#2E8B57"/><rect x="2657" y="1170.4" width="5" height="32.6" fill="#2E8B57"/><rect x="2659" y="1153.8" width="1" height="56.7" fill="#2E8B57"/><rect x="2665" y="1149.3" width="5" height="37.4" fill="#2E8B57"/><rect x="2667" y="1117.9" width="1" height="69.3" fill="#2E8B57"/><polyline fill="none" points="35.0,196.7 43.0,218.1 51.0,243.6 59.0,272.8 67.0,304.4 75.0,334.8 83.0,359.5 91.0,375.7 99.0,384.1 107.0,387.5 115.0,391.6 123.0,403.2 131.0,427.6 139.0,463.5 147.0,503.2 155.0,539.6 163.0,570.1 171.0,595.7 179.0,616.5 187.0,631.1 195.0,638.9 203.0,640.6 211.0,634.5 219.0,615.3 227.0,581.5 235.0,540.3 243.0,502.4 251.0,474.5 259.0,457.0 267.0,447.4 275.0,444.6 283.0,449.9 291.0,463.4 299.0,481.3 307.0,497.0 315.0,505.6 323.0,505.1 331.0,496.6 339.0,483.9 347.0,472.8 355.0,468.2 363.0,472.2 371.0,482.8 379.0,496.2 387.0,508.4 395.0,516.9 403.0,520.7 411.0,520.6 419.0,517.9 427.0,513.3 435.0,506.8 443.0,499.9 451.0,495.2 459.0,494.8 467.0,498.4 475.0,503.6 483.0,507.8 491.0,509.5 499.0,508.8 507.0,506.2 515.0,502.4 523.0,498.6 531.0,496.1 539.0,496.2 547.0,499.8 555.0,508.3 563.0,523.7 571.0,547.6 579.0,578.3 587.0,609.0 595.0,631.0 603.0,640.6 611.0,640.6 619.0,636.7 627.0,632.5 635.0,628.3 643.0,623.4 651.0,617.8 659.0,611.2 667.0,603.3 675.0,594.5 683.0,585.9 691.0,579.0 699.0,575.0 707.0,574.5 715.0,575.2 723.0,572.8 731.0,564.1 739.0,549.8 747.0,535.3 755.0,527.3 763.0,528.3 771.0,534.0 779.0,537.0 787.0,532.3 795.0,521.5 803.0,509.7 811.0,500.7 819.0,495.5 827.0,494.7 835.0,501.0 843.0,515.9 851.0,534.3 859.0,546.9 867.0,548.5 875.0,541.1 883.0,528.4 891.0,511.3 899.0,490.3 907.0,467.8 915.0,446.4 923.0,425.9 931.0,404.8 939.0,383.5 947.0,365.1 955.0,353.3 963.0,350.2 971.0,354.8 979.0,364.0 987.0,376.5 995.0,394.9 1003.0,422.0 1011.0,456.9 1019.0,494.6 1027.0,528.6 1035.0,553.8 1043.0,568.0 1051.0,574.9 1059.0,582.7 1067.0,598.4 1075.0,622.8 1083.0,651.2 1091.0,677.5 1099.0,698.6 1107.0,716.1 1115.0,733.3 1123.0,751.0 1131.0,766.2 1139.0,774.8 1147.0,775.0 1155.0,769.3 1163.0,762.1 1171.0,756.6 1179.0,753.7 1187.0,753.1 1195.0,755.4 1203.0,761.4 1211.0,772.1 1219.0,787.3 1227.0,805.9 1235.0,825.0 1243.0,840.5 1251.0,849.2 1259.0,851.4 1267.0,850.4 1275.0,849.8 1283.0,850.7 1291.0,852.2 1299.0,853.7 1307.0,856.5 1315.0,862.2 1323.0,870.5 1331.0,878.5 1339.0,882.6 1347.0,880.3 1355.0,872.0 1363.0,861.2 1371.0,851.8 1379.0,845.5 1387.0,840.7 1395.0,836.0 1403.0,831.3 1411.0,827.3 1419.0,823.3 1427.0,817.8 1435.0,810.2 1443.0,801.4 1451.0,793.1 1459.0,785.6 1467.0,777.9 1475.0,769.1 1483.0,758.4 1491.0,745.9 1499.0,732.3 1507.0,719.4 1515.0,707.8 1523.0,697.4 1531.0,687.8 1539.0,678.9 1547.0,670.3 1555.0,661.9 1563.0,654.0 1571.0,646.5 1579.0,638.8 1587.0,629.9 1595.0,620.5 1603.0,612.1 1611.0,605.8 1619.0,602.1 1627.0,602.3 1635.0,609.1 1643.0,625.5 1651.0,652.8 1659.0,687.9 1667.0,722.5 1675.0,745.5 1683.0,748.5 1691.0,730.3 1699.0,697.9 1707.0,662.2 1715.0,633.8 1723.0,619.9 1731.0,622.4 1739.0,638.2 1747.0,662.1 1755.0,690.3 1763.0,721.7 1771.0,756.5 1779.0,795.0 1787.0,836.3 1795.0,878.7 1803.0,919.5 1811.0,956.1 1819.0,986.0 1827.0,1007.4 1835.0,1019.8 1843.0,1024.9 1851.0,1026.0 1859.0,1026.1 1867.0,1026.5 1875.0,1025.8 1883.0,1021.5 1891.0,1012.6 1899.0,1001.7 1907.0,993.8 1915.0,992.6 1923.0,998.3 1931.0,1008.2 1939.0,1019.3 1947.0,1028.7 1955.0,1034.9 1963.0,1037.2 1971.0,1035.8 1979.0,1031.7 1987.0,1026.3 1995.0,1020.8 2003.0,1016.0 2011.0,1011.7 2019.0,1007.2 2027.0,1002.5 2035.0,998.6 2043.0,996.7 2051.0,997.5 2059.0,999.9 2067.0,1001.8 2075.0,1001.1 2083.0,997.1 2091.0,991.3 2099.0,985.9 2107.0,982.6 2115.0,981.8 2123.0,982.8 2131.0,985.0 2139.0,989.1 2147.0,996.4 2155.0,1007.8 2163.0,1022.2 2171.0,1036.5 2179.0,1047.7 2187.0,1055.6 2195.0,1062.3 2203.0,1069.9 2211.0,1078.7 2219.0,1087.2 2227.0,1094.0 2235.0,1099.4 2243.0,1104.4 2251.0,1110.1 2259.0,1116.1 2267.0,1122.1 2275.0,1128.4 2283.0,1136.7 2291.0,1147.9 2299.0,1160.9 2307.0,1173.0 2315.0,1181.6 2323.0,1185.2 2331.0,1183.1 2339.0,1174.8 2347.0,1162.6 2355.0,1150.8 2363.0,1141.8 2371.0,1134.4 2379.0,1126.5 2387.0,1116.9 2395.0,1105.2 2403.0,1092.1 2411.0,1081.1 2419.0,1077.1 2427.0,1082.7 2435.0,1095.7 2443.0,1111.4 2451.0,1127.9 2459.0,1145.7 2467.0,1164.1 2475.0,1179.5 2483.0,1188.9 2491.0,1194.0 2499.0,1199.7 2507.0,1209.4 2515.0,1220.5 2523.0,1226.4 2531.0,1223.0 2539.0,1211.4 2547.0,1196.0 2555.0,1179.8 2563.0,1164.9 2571.0,1154.0 2579.0,1149.7 2587.0,1152.2 2595.0,1160.0 2603.0,1170.7 2611.0,1181.6 2619.0,1190.3 2627.0,1195.8 2635.0,1198.0 2643.0,1196.2 2651.0,1190.4 2659.0,1182.2 2667.0,1173.9" stroke="#0000FF" stroke-width="2"/></g><polyline fill="none" points="2667.0,1137.8 2681.0,1108.6 2691.0,1089.7 2701.5,1081.0 2715.0,1078.6 2725.5,1080.4 2736.0,1088.0 2749.6,1107.0 2763.4,1127.5" stroke="#00CED1" stroke-width="4" stroke-linejoin="round"/><rect x="1723" y="476" width="1" height="12" fill="#2E8B57"/><path d="M2658 169 L2677.5 169 L2667.7 178.5 Z" fill="#C0C0C0"/><path d="M51.5 1464V1393M59.5 1464V1410M67.5 1464V1401M75.5 1464V1384M83.5 1464V1412M91.5 1464V1414M99.5 1464V1401M107.5 1464V1409M115.5 1464V1392M123.5 1464V1415M131.5 1464V1389M139.5 1464V1388M147.5 1464V1390M155.5 1464V1402M163.5 1464V1406M171.5 1464V1394M179.5 1464V1399M187.5 1464V1402M195.5 1464V1404M203.5 1464V1401M211.5 1464V1394M219.5 1464V1389M227.5 1464V1387M235.5 1464V1410M243.5 1464V1406M251.5 1464V1401M259.5 1464V1393M267.5 1464V1397M275.5 1464V1399M283.5 1464V1400M291.5 1464V1388M299.5 1464V1383M307.5 1464V1364M315.5 1464V1368M323.5 1464V1370M331.5 1464V1368M339.5 1464V1371M347.5 1464V1386M355.5 1464V1381M363.5 1464V1409M371.5 1464V1391M379.5 1464V1396M387.5 1464V1411M395.5 1464V1410M403.5 1464V1408M411.5 1464V1425M419.5 1464V1428M427.5 1464V1435M435.5 1464V1435M443.5 1464V1428M451.5 1464V1441M459.5 1464V1439M467.5 1464V1433M475.5 1464V1437M483.5 1464V1443M491.5 1464V1438M499.5 1464V1444M507.5 1464V1445M515.5 1464V1449M523.5 1464V1448M531.5 1464V1443M539.5 1464V1440M547.5 1464V1440M555.5 1464V1435M563.5 1464V1416M571.5 1464V1412M579.5 1464V1415M587.5 1464V1381M595.5 1464V1403M603.5 1464V1414M611.5 1464V1409M619.5 1464V1423M627.5 1464V1418M635.5 1464V1417M643.5 1464V1425M651.5 1464V1418M659.5 1464V1428M667.5 1464V1420M675.5 1464V1419M683.5 1464V1430M691.5 1464V1424M699.5 1464V1431M707.5 1464V1421M715.5 1464V1409M723.5 1464V1413M731.5 1464V1406M739.5 1464V1402M747.5 1464V1417M755.5 1464V1390M763.5 1464V1395M771.5 1464V1412M779.5 1464V1386M787.5 1464V1398M795.5 1464V1403M803.5 1464V1374M811.5 1464V1388M819.5 1464V1381M827.5 1464V1404M835.5 1464V1382M843.5 1464V1408M851.5 1464V1402M859.5 1464V1398M867.5 1464V1410M875.5 1464V1391M883.5 1464V1404M891.5 1464V1402M899.5 1464V1389M907.5 1464V1396M915.5 1464V1378M923.5 1464V1386M931.5 1464V1374M939.5 1464V1384M947.5 1464V1368M955.5 1464V1368M963.5 1464V1394M971.5 1464V1368M979.5 1464V1383M987.5 1464V1363M995.5 1464V1365M1003.5 1464V1360M1011.5 1464V1391M1019.5 1464V1381M1027.5 1464V1368M1035.5 1464V1361M1043.5 1464V1373M1051.5 1464V1401M1059.5 1464V1381M1067.5 1464V1402M1075.5 1464V1388M1083.5 1464V1382M1091.5 1464V1408M1099.5 1464V1384M1107.5 1464V1394M1115.5 1464V1410M1123.5 1464V1414M1131.5 1464V1409M1139.5 1464V1401M1147.5 1464V1410M1155.5 1464V1424M1163.5 1464V1428M1171.5 1464V1428M1179.5 1464V1417M1187.5 1464V1431M1195.5 1464V1427M1203.5 1464V1434M1211.5 1464V1430M1219.5 1464V1438M1227.5 1464V1443M1235.5 1464V1436M1243.5 1464V1442M1251.5 1464V1443M1259.5 1464V1445M1267.5 1464V1446M1275.5 1464V1454M1283.5 1464V1451M1291.5 1464V1445M1299.5 1464V1432M1307.5 1464V1415M1315.5 1464V1407M1323.5 1464V1422M1331.5 1464V1420M1339.5 1464V1407M1347.5 1464V1413M1355.5 1464V1422M1363.5 1464V1422M1371.5 1464V1431M1379.5 1464V1420M1387.5 1464V1428M1395.5 1464V1419M1403.5 1464V1423M1411.5 1464V1432M1419.5 1464V1427M1427.5 1464V1428M1435.5 1464V1414M1443.5 1464V1419M1451.5 1464V1430M1459.5 1464V1427M1467.5 1464V1423M1475.5 1464V1420M1483.5 1464V1417M1491.5 1464V1421M1499.5 1464V1421M1507.5 1464V1429M1515.5 1464V1416M1523.5 1464V1421M1531.5 1464V1428M1539.5 1464V1417M1547.5 1464V1404M1555.5 1464V1426M1563.5 1464V1424M1571.5 1464V1411M1579.5 1464V1420M1587.5 1464V1419M1595.5 1464V1414M1603.5 1464V1419M1611.5 1464V1411M1619.5 1464V1412M1627.5 1464V1400M1635.5 1464V1399M1643.5 1464V1423M1651.5 1464V1409M1659.5 1464V1403M1667.5 1464V1400M1675.5 1464V1402M1683.5 1464V1406M1691.5 1464V1405M1699.5 1464V1412M1707.5 1464V1415M1715.5 1464V1401M1723.5 1464V1399M1731.5 1464V1398M1739.5 1464V1405M1747.5 1464V1415M1755.5 1464V1403M1763.5 1464V1404M1771.5 1464V1410M1779.5 1464V1407M1787.5 1464V1415M1795.5 1464V1410M1803.5 1464V1414M1811.5 1464V1423M1819.5 1464V1416M1827.5 1464V1417M1835.5 1464V1400M1843.5 1464V1413M1851.5 1464V1416M1859.5 1464V1420M1867.5 1464V1420M1875.5 1464V1418M1883.5 1464V1423M1891.5 1464V1426M1899.5 1464V1406M1907.5 1464V1416M1915.5 1464V1416M1923.5 1464V1414M1931.5 1464V1420M1939.5 1464V1424M1947.5 1464V1426M1955.5 1464V1421M1963.5 1464V1421M1971.5 1464V1412M1979.5 1464V1416M1987.5 1464V1407M1995.5 1464V1421M2003.5 1464V1409M2011.5 1464V1417M2019.5 1464V1429M2027.5 1464V1427M2035.5 1464V1419M2043.5 1464V1412M2051.5 1464V1425M2059.5 1464V1418M2067.5 1464V1425M2075.5 1464V1418M2083.5 1464V1434M2091.5 1464V1427M2099.5 1464V1420M2107.5 1464V1432M2115.5 1464V1433M2123.5 1464V1437M2131.5 1464V1436M2139.5 1464V1435M2147.5 1464V1428M2155.5 1464V1437M2163.5 1464V1435M2171.5 1464V1438M2179.5 1464V1433M2187.5 1464V1430M2195.5 1464V1434M2203.5 1464V1441M2211.5 1464V1435M2219.5 1464V1433M2227.5 1464V1438M2235.5 1464V1445M2243.5 1464V1433M2251.5 1464V1428M2259.5 1464V1433M2267.5 1464V1433M2275.5 1464V1430M2283.5 1464V1419M2291.5 1464V1408M2299.5 1464V1410M2307.5 1464V1398M2315.5 1464V1414M2323.5 1464V1407M2331.5 1464V1389M2339.5 1464V1388M2347.5 1464V1393M2355.5 1464V1378M2363.5 1464V1390M2371.5 1464V1403M2379.5 1464V1391M2387.5 1464V1406M2395.5 1464V1388M2403.5 1464V1400M2411.5 1464V1397M2419.5 1464V1396M2427.5 1464V1406M2435.5 1464V1397M2443.5 1464V1411M2451.5 1464V1378M2459.5 1464V1389M2467.5 1464V1372M2475.5 1464V1404M2483.5 1464V1382M2491.5 1464V1376M2499.5 1464V1390M2507.5 1464V1398M2515.5 1464V1395M2523.5 1464V1395M2531.5 1464V1368M2539.5 1464V1395M2547.5 1464V1364M2555.5 1464V1379M2563.5 1464V1374M2571.5 1464V1372M2579.5 1464V1374M2587.5 1464V1371M2595.5 1464V1374M2603.5 1464V1386M2611.5 1464V1369M2619.5 1464V1390M2627.5 1464V1372M2635.5 1464V1371M2643.5 1464V1373M2651.5 1464V1393M2659.5 1464V1378M2667.5 1464V1373" stroke="#0A9A0A" stroke-width="1" fill="none"/><line x1="43" y1="1482.5" x2="3310" y2="1482.5" stroke="#E0E0E0" stroke-width="1" stroke-dasharray="3,3"/><line x1="43" y1="1530.5" x2="3310" y2="1530.5" stroke="#E0E0E0" stroke-width="1" stroke-dasharray="3,3"/><line x1="43" y1="1502.5" x2="2667" y2="1502.5" stroke="#9370DB" stroke-width="1" stroke-dasharray="4,5"/><g clip-path="url(#subclip)"><rect x="49" y="1502" width="5" height="29" fill="#FF00FF"/><rect x="57" y="1502" width="5" height="31" fill="#FF00FF"/><rect x="65" y="1502" width="5" height="17" fill="#FF00FF"/><rect x="73" y="1502" width="5" height="25" fill="#FF00FF"/><rect x="81" y="1502" width="5" height="25" fill="#FF00FF"/><rect x="89" y="1502" width="5" height="20" fill="#FF00FF"/><rect x="97" y="1502" width="5" height="21" fill="#FF00FF"/><rect x="105" y="1502" width="5" height="28" fill="#FF00FF"/><rect x="113" y="1502" width="5" height="23" fill="#A52A2A"/><rect x="121" y="1502" width="5" height="23" fill="#FF00FF"/><rect x="129" y="1502" width="5" height="17" fill="#FF00FF"/><rect x="137" y="1502" width="5" height="25" fill="#FF00FF"/><rect x="145" y="1502" width="5" height="28" fill="#FF00FF"/><rect x="153" y="1502" width="5" height="24" fill="#FF00FF"/><rect x="161" y="1502" width="5" height="29" fill="#FF00FF"/><rect x="169" y="1502" width="5" height="27" fill="#FF00FF"/><rect x="177" y="1502" width="5" height="25" fill="#FF00FF"/><rect x="185" y="1502" width="5" height="20" fill="#FF00FF"/><rect x="193" y="1502" width="5" height="27" fill="#FF00FF"/><rect x="201" y="1502" width="5" height="28" fill="#FF00FF"/><rect x="209" y="1502" width="5" height="17" fill="#FF00FF"/><rect x="217" y="1502" width="5" height="26" fill="#A52A2A"/><rect x="225" y="1502" width="5" height="21" fill="#FF00FF"/><rect x="233" y="1502" width="5" height="5" fill="#FF00FF"/><rect x="241" y="1498" width="5" height="4" fill="#9370DB"/><rect x="249" y="1499" width="5" height="3" fill="#008080"/><rect x="257" y="1496" width="5" height="6" fill="#9370DB"/><rect x="265" y="1494" width="5" height="8" fill="#9370DB"/><rect x="273" y="1494" width="5" height="8" fill="#9370DB"/><rect x="281" y="1491" width="5" height="11" fill="#9370DB"/><rect x="289" y="1491" width="5" height="11" fill="#9370DB"/><rect x="297" y="1492" width="5" height="10" fill="#008080"/><rect x="305" y="1495" width="5" height="7" fill="#9370DB"/><rect x="313" y="1496" width="5" height="6" fill="#9370DB"/><rect x="321" y="1497" width="5" height="5" fill="#9370DB"/><rect x="329" y="1498" width="5" height="4" fill="#9370DB"/><rect x="337" y="1502" width="5" height="9" fill="#9370DB"/><rect x="345" y="1499" width="5" height="3" fill="#A52A2A"/><rect x="353" y="1502" width="5" height="12" fill="#FF00FF"/><rect x="361" y="1502" width="5" height="5" fill="#9370DB"/><rect x="369" y="1502" width="5" height="11" fill="#9370DB"/><rect x="377" y="1502" width="5" height="11" fill="#9370DB"/><rect x="385" y="1502" width="5" height="3" fill="#9370DB"/><rect x="393" y="1491" width="5" height="11" fill="#A52A2A"/><rect x="401" y="1500" width="5" height="2" fill="#9370DB"/><rect x="409" y="1502" width="5" height="5" fill="#FF00FF"/><rect x="417" y="1502" width="5" height="5" fill="#9370DB"/><rect x="425" y="1502" width="5" height="9" fill="#9370DB"/><rect x="433" y="1502" width="5" height="5" fill="#9370DB"/><rect x="441" y="1502" width="5" height="3" fill="#9370DB"/><rect x="449" y="1502" width="5" height="8" fill="#9370DB"/><rect x="457" y="1502" width="5" height="7" fill="#9370DB"/><rect x="465" y="1502" width="5" height="3" fill="#9370DB"/><rect x="473" y="1502" width="5" height="6" fill="#9370DB"/><rect x="481" y="1498" width="5" height="4" fill="#A52A2A"/><rect x="489" y="1502" width="5" height="11" fill="#9370DB"/><rect x="497" y="1502" width="5" height="3" fill="#A52A2A"/><rect x="505" y="1502" width="5" height="7" fill="#9370DB"/><rect x="513" y="1502" width="5" height="4" fill="#9370DB"/><rect x="521" y="1502" width="5" height="6" fill="#9370DB"/><rect x="529" y="1502" width="5" height="4" fill="#9370DB"/><rect x="537" y="1491" width="5" height="11" fill="#9370DB"/><rect x="545" y="1502" width="5" height="2" fill="#A52A2A"/><rect x="553" y="1502" width="5" height="8" fill="#9370DB"/><rect x="561" y="1502" width="5" height="10" fill="#9370DB"/><rect x="569" y="1502" width="5" height="12" fill="#FF00FF"/><rect x="577" y="1502" width="5" height="18" fill="#FF00FF"/><rect x="585" y="1502" width="5" height="22" fill="#FF00FF"/><rect x="593" y="1502" width="5" height="18" fill="#FF00FF"/><rect x="601" y="1502" width="5" height="19" fill="#FF00FF"/><rect x="609" y="1502" width="5" height="20" fill="#FF00FF"/><rect x="617" y="1502" width="5" height="15" fill="#FF00FF"/><rect x="625" y="1502" width="5" height="23" fill="#FF00FF"/><rect x="633" y="1502" width="5" height="19" fill="#FF00FF"/><rect x="641" y="1502" width="5" height="16" fill="#FF00FF"/><rect x="649" y="1492" width="5" height="10" fill="#9370DB"/><rect x="657" y="1502" width="5" height="2" fill="#A52A2A"/><rect x="665" y="1502" width="5" height="3" fill="#9370DB"/><rect x="673" y="1502" width="5" height="9" fill="#9370DB"/><rect x="681" y="1502" width="5" height="3" fill="#9370DB"/><rect x="689" y="1502" width="5" height="5" fill="#FF00FF"/><rect x="697" y="1502" width="5" height="7" fill="#9370DB"/><rect x="705" y="1502" width="5" height="11" fill="#9370DB"/><rect x="713" y="1498" width="5" height="4" fill="#9370DB"/><rect x="721" y="1502" width="5" height="10" fill="#9370DB"/><rect x="729" y="1496" width="5" height="6" fill="#9370DB"/><rect x="737" y="1490" width="5" height="12" fill="#9370DB"/><rect x="745" y="1492" width="5" height="10" fill="#9370DB"/><rect x="753" y="1502" width="5" height="10" fill="#FF00FF"/><rect x="761" y="1502" width="5" height="10" fill="#FF00FF"/><rect x="769" y="1492" width="5" height="10" fill="#9370DB"/><rect x="777" y="1497" width="5" height="5" fill="#FF00FF"/><rect x="785" y="1502" width="5" height="3" fill="#FF00FF"/><rect x="793" y="1502" width="5" height="10" fill="#9370DB"/><rect x="801" y="1502" width="5" height="7" fill="#9370DB"/><rect x="809" y="1502" width="5" height="11" fill="#9370DB"/><rect x="817" y="1502" width="5" height="6" fill="#9370DB"/><rect x="825" y="1502" width="5" height="9" fill="#FF00FF"/><rect x="833" y="1499" width="5" height="3" fill="#9370DB"/><rect x="841" y="1497" width="5" height="5" fill="#9370DB"/><rect x="849" y="1502" width="5" height="10" fill="#9370DB"/><rect x="857" y="1500" width="5" height="2" fill="#9370DB"/><rect x="865" y="1502" width="5" height="6" fill="#9370DB"/><rect x="873" y="1502" width="5" height="5" fill="#9370DB"/><rect x="881" y="1502" width="5" height="10" fill="#9370DB"/><rect x="889" y="1502" width="5" height="3" fill="#9370DB"/><rect x="897" y="1495" width="5" height="7" fill="#9370DB"/><rect x="905" y="1490" width="5" height="12" fill="#008080"/><rect x="913" y="1491" width="5" height="11" fill="#008080"/><rect x="921" y="1489" width="5" height="13" fill="#008080"/><rect x="929" y="1494" width="5" height="8" fill="#00FF00"/><rect x="937" y="1493" width="5" height="9" fill="#008080"/><rect x="945" y="1489" width="5" height="13" fill="#00FF00"/><rect x="953" y="1489" width="5" height="13" fill="#008080"/><rect x="961" y="1492" width="5" height="10" fill="#00FF00"/><rect x="969" y="1492" width="5" height="10" fill="#00FF00"/><rect x="977" y="1494" width="5" height="8" fill="#00FF00"/><rect x="985" y="1495" width="5" height="7" fill="#008080"/><rect x="993" y="1500" width="5" height="2" fill="#9370DB"/><rect x="1001" y="1502" width="5" height="24" fill="#FF00FF"/><rect x="1009" y="1502" width="5" height="21" fill="#FF00FF"/><rect x="1017" y="1502" width="5" height="18" fill="#FF00FF"/><rect x="1025" y="1502" width="5" height="30" fill="#FF00FF"/><rect x="1033" y="1502" width="5" height="23" fill="#A52A2A"/><rect x="1041" y="1502" width="5" height="31" fill="#FF00FF"/><rect x="1049" y="1502" width="5" height="18" fill="#FF00FF"/><rect x="1057" y="1502" width="5" height="24" fill="#A52A2A"/><rect x="1065" y="1502" width="5" height="22" fill="#FF00FF"/><rect x="1073" y="1502" width="5" height="27" fill="#FF00FF"/><rect x="1081" y="1502" width="5" height="25" fill="#FF00FF"/><rect x="1089" y="1502" width="5" height="31" fill="#FF00FF"/><rect x="1097" y="1502" width="5" height="22" fill="#A52A2A"/><rect x="1105" y="1502" width="5" height="18" fill="#FF00FF"/><rect x="1113" y="1502" width="5" height="27" fill="#FF00FF"/><rect x="1121" y="1502" width="5" height="24" fill="#FF00FF"/><rect x="1129" y="1502" width="5" height="31" fill="#FF00FF"/><rect x="1137" y="1502" width="5" height="28" fill="#FF00FF"/><rect x="1145" y="1502" width="5" height="22" fill="#FF00FF"/><rect x="1153" y="1502" width="5" height="31" fill="#A52A2A"/><rect x="1161" y="1502" width="5" height="19" fill="#FF00FF"/><rect x="1169" y="1502" width="5" height="26" fill="#FF00FF"/><rect x="1177" y="1502" width="5" height="23" fill="#FF00FF"/><rect x="1185" y="1502" width="5" height="27" fill="#FF00FF"/><rect x="1193" y="1502" width="5" height="29" fill="#FF00FF"/><rect x="1201" y="1502" width="5" height="19" fill="#FF00FF"/><rect x="1209" y="1490" width="5" height="12" fill="#9370DB"/><rect x="1217" y="1493" width="5" height="9" fill="#9370DB"/><rect x="1225" y="1502" width="5" height="9" fill="#9370DB"/><rect x="1233" y="1498" width="5" height="4" fill="#9370DB"/><rect x="1241" y="1502" width="5" height="10" fill="#9370DB"/><rect x="1249" y="1502" width="5" height="7" fill="#A52A2A"/><rect x="1257" y="1502" width="5" height="4" fill="#9370DB"/><rect x="1265" y="1497" width="5" height="5" fill="#9370DB"/><rect x="1273" y="1502" width="5" height="12" fill="#9370DB"/><rect x="1281" y="1502" width="5" height="11" fill="#9370DB"/><rect x="1289" y="1502" width="5" height="6" fill="#9370DB"/><rect x="1297" y="1496" width="5" height="6" fill="#9370DB"/><rect x="1305" y="1502" width="5" height="11" fill="#FF00FF"/><rect x="1313" y="1502" width="5" height="20" fill="#FF00FF"/><rect x="1321" y="1502" width="5" height="19" fill="#FF00FF"/><rect x="1329" y="1502" width="5" height="19" fill="#FF00FF"/><rect x="1337" y="1502" width="5" height="12" fill="#FF00FF"/><rect x="1345" y="1502" width="5" height="15" fill="#FF00FF"/><rect x="1353" y="1502" width="5" height="9" fill="#9370DB"/><rect x="1361" y="1496" width="5" height="6" fill="#008080"/><rect x="1369" y="1494" width="5" height="8" fill="#9370DB"/><rect x="1377" y="1493" width="5" height="9" fill="#9370DB"/><rect x="1385" y="1492" width="5" height="10" fill="#9370DB"/><rect x="1393" y="1492" width="5" height="10" fill="#9370DB"/><rect x="1401" y="1496" width="5" height="6" fill="#008080"/><rect x="1409" y="1497" width="5" height="5" fill="#9370DB"/><rect x="1417" y="1498" width="5" height="4" fill="#9370DB"/><rect x="1425" y="1492" width="5" height="10" fill="#9370DB"/><rect x="1433" y="1495" width="5" height="7" fill="#008080"/><rect x="1441" y="1498" width="5" height="4" fill="#9370DB"/><rect x="1449" y="1493" width="5" height="9" fill="#008080"/><rect x="1457" y="1493" width="5" height="9" fill="#9370DB"/><rect x="1465" y="1492" width="5" height="10" fill="#9370DB"/><rect x="1473" y="1491" width="5" height="11" fill="#008080"/><rect x="1481" y="1496" width="5" height="6" fill="#9370DB"/><rect x="1489" y="1492" width="5" height="10" fill="#9370DB"/><rect x="1497" y="1497" width="5" height="5" fill="#008080"/><rect x="1505" y="1494" width="5" height="8" fill="#9370DB"/><rect x="1513" y="1493" width="5" height="9" fill="#008080"/><rect x="1521" y="1498" width="5" height="4" fill="#9370DB"/><rect x="1529" y="1498" width="5" height="4" fill="#9370DB"/><rect x="1537" y="1494" width="5" height="8" fill="#008080"/><rect x="1545" y="1493" width="5" height="9" fill="#9370DB"/><rect x="1553" y="1495" width="5" height="7" fill="#9370DB"/><rect x="1561" y="1497" width="5" height="5" fill="#008080"/><rect x="1569" y="1492" width="5" height="10" fill="#008080"/><rect x="1577" y="1498" width="5" height="4" fill="#9370DB"/><rect x="1585" y="1492" width="5" height="10" fill="#9370DB"/><rect x="1593" y="1491" width="5" height="11" fill="#008080"/><rect x="1601" y="1492" width="5" height="10" fill="#008080"/><rect x="1609" y="1502" width="5" height="8" fill="#A52A2A"/><rect x="1617" y="1502" width="5" height="9" fill="#9370DB"/><rect x="1625" y="1499" width="5" height="3" fill="#9370DB"/><rect x="1633" y="1502" width="5" height="5" fill="#9370DB"/><rect x="1641" y="1499" width="5" height="3" fill="#9370DB"/><rect x="1649" y="1502" width="5" height="10" fill="#9370DB"/><rect x="1657" y="1502" width="5" height="3" fill="#A52A2A"/><rect x="1665" y="1502" width="5" height="8" fill="#9370DB"/><rect x="1673" y="1502" width="5" height="3" fill="#9370DB"/><rect x="1681" y="1492" width="5" height="10" fill="#9370DB"/><rect x="1689" y="1502" width="5" height="3" fill="#9370DB"/><rect x="1697" y="1502" width="5" height="5" fill="#9370DB"/><rect x="1705" y="1502" width="5" height="4" fill="#9370DB"/><rect x="1713" y="1502" width="5" height="10" fill="#FF00FF"/><rect x="1721" y="1502" width="5" height="10" fill="#9370DB"/><rect x="1729" y="1502" width="5" height="6" fill="#9370DB"/><rect x="1737" y="1502" width="5" height="9" fill="#9370DB"/><rect x="1745" y="1502" width="5" height="7" fill="#9370DB"/><rect x="1753" y="1491" width="5" height="11" fill="#FF00FF"/><rect x="1761" y="1502" width="5" height="5" fill="#A52A2A"/><rect x="1769" y="1502" width="5" height="3" fill="#9370DB"/><rect x="1777" y="1502" width="5" height="9" fill="#9370DB"/><rect x="1785" y="1502" width="5" height="4" fill="#9370DB"/><rect x="1793" y="1502" width="5" height="4" fill="#9370DB"/><rect x="1801" y="1502" width="5" height="6" fill="#9370DB"/><rect x="1809" y="1502" width="5" height="4" fill="#9370DB"/><rect x="1817" y="1493" width="5" height="9" fill="#FF00FF"/><rect x="1825" y="1502" width="5" height="11" fill="#9370DB"/><rect x="1833" y="1502" width="5" height="3" fill="#9370DB"/><rect x="1841" y="1502" width="5" height="11" fill="#9370DB"/><rect x="1849" y="1502" width="5" height="5" fill="#9370DB"/><rect x="1857" y="1502" width="5" height="8" fill="#A52A2A"/><rect x="1865" y="1498" width="5" height="4" fill="#9370DB"/><rect x="1873" y="1502" width="5" height="10" fill="#9370DB"/><rect x="1881" y="1502" width="5" height="3" fill="#9370DB"/><rect x="1889" y="1502" width="5" height="7" fill="#FF00FF"/><rect x="1897" y="1502" width="5" height="7" fill="#A52A2A"/><rect x="1905" y="1502" width="5" height="8" fill="#9370DB"/><rect x="1913" y="1497" width="5" height="5" fill="#9370DB"/><rect x="1921" y="1502" width="5" height="9" fill="#FF00FF"/><rect x="1929" y="1493" width="5" height="9" fill="#9370DB"/><rect x="1937" y="1502" width="5" height="10" fill="#9370DB"/><rect x="1945" y="1502" width="5" height="4" fill="#9370DB"/><rect x="1953" y="1502" width="5" height="2" fill="#FF00FF"/><rect x="1961" y="1502" width="5" height="2" fill="#FF00FF"/><rect x="1969" y="1497" width="5" height="5" fill="#9370DB"/><rect x="1977" y="1502" width="5" height="7" fill="#9370DB"/><rect x="1985" y="1502" width="5" height="4" fill="#A52A2A"/><rect x="1993" y="1502" width="5" height="8" fill="#9370DB"/><rect x="2001" y="1502" width="5" height="7" fill="#9370DB"/><rect x="2009" y="1502" width="5" height="9" fill="#9370DB"/><rect x="2017" y="1502" width="5" height="9" fill="#9370DB"/><rect x="2025" y="1502" width="5" height="6" fill="#9370DB"/><rect x="2033" y="1502" width="5" height="4" fill="#9370DB"/><rect x="2041" y="1495" width="5" height="7" fill="#9370DB"/><rect x="2049" y="1502" width="5" height="8" fill="#9370DB"/><rect x="2057" y="1502" width="5" height="12" fill="#9370DB"/><rect x="2065" y="1502" width="5" height="10" fill="#FF00FF"/><rect x="2073" y="1500" width="5" height="2" fill="#9370DB"/><rect x="2081" y="1502" width="5" height="10" fill="#9370DB"/><rect x="2089" y="1502" width="5" height="4" fill="#A52A2A"/><rect x="2097" y="1491" width="5" height="11" fill="#9370DB"/><rect x="2105" y="1502" width="5" height="5" fill="#9370DB"/><rect x="2113" y="1492" width="5" height="10" fill="#9370DB"/><rect x="2121" y="1493" width="5" height="9" fill="#9370DB"/><rect x="2129" y="1502" width="5" height="4" fill="#9370DB"/><rect x="2137" y="1502" width="5" height="10" fill="#FF00FF"/><rect x="2145" y="1491" width="5" height="11" fill="#9370DB"/><rect x="2153" y="1502" width="5" height="7" fill="#9370DB"/><rect x="2161" y="1502" width="5" height="10" fill="#9370DB"/><rect x="2169" y="1502" width="5" height="7" fill="#9370DB"/><rect x="2177" y="1502" width="5" height="2" fill="#9370DB"/><rect x="2185" y="1502" width="5" height="10" fill="#A52A2A"/><rect x="2193" y="1502" width="5" height="9" fill="#9370DB"/><rect x="2201" y="1502" width="5" height="3" fill="#FF00FF"/><rect x="2209" y="1499" width="5" height="3" fill="#9370DB"/><rect x="2217" y="1502" width="5" height="10" fill="#9370DB"/><rect x="2225" y="1502" width="5" height="5" fill="#9370DB"/><rect x="2233" y="1502" width="5" height="8" fill="#FF00FF"/><rect x="2241" y="1502" width="5" height="3" fill="#9370DB"/><rect x="2249" y="1502" width="5" height="8" fill="#9370DB"/><rect x="2257" y="1502" width="5" height="6" fill="#9370DB"/><rect x="2265" y="1502" width="5" height="11" fill="#9370DB"/><rect x="2273" y="1502" width="5" height="11" fill="#FF00FF"/><rect x="2281" y="1493" width="5" height="9" fill="#A52A2A"/><rect x="2289" y="1502" width="5" height="4" fill="#A52A2A"/><rect x="2297" y="1502" width="5" height="5" fill="#9370DB"/><rect x="2305" y="1502" width="5" height="17" fill="#FF00FF"/><rect x="2313" y="1502" width="5" height="19" fill="#A52A2A"/><rect x="2321" y="1502" width="5" height="21" fill="#A52A2A"/><rect x="2329" y="1502" width="5" height="22" fill="#FF00FF"/><rect x="2337" y="1502" width="5" height="25" fill="#FF00FF"/><rect x="2345" y="1497" width="5" height="5" fill="#9370DB"/><rect x="2353" y="1495" width="5" height="7" fill="#9370DB"/><rect x="2361" y="1497" width="5" height="5" fill="#008080"/><rect x="2369" y="1491" width="5" height="11" fill="#9370DB"/><rect x="2377" y="1492" width="5" height="10" fill="#008080"/><rect x="2385" y="1491" width="5" height="11" fill="#008080"/><rect x="2393" y="1494" width="5" height="8" fill="#9370DB"/><rect x="2401" y="1492" width="5" height="10" fill="#9370DB"/><rect x="2409" y="1489" width="5" height="13" fill="#008080"/><rect x="2417" y="1490" width="5" height="12" fill="#00FF00"/><rect x="2425" y="1493" width="5" height="9" fill="#008080"/><rect x="2433" y="1493" width="5" height="9" fill="#9370DB"/><rect x="2441" y="1491" width="5" height="11" fill="#9370DB"/><rect x="2449" y="1502" width="5" height="9" fill="#A52A2A"/><rect x="2457" y="1502" width="5" height="5" fill="#A52A2A"/><rect x="2465" y="1502" width="5" height="9" fill="#A52A2A"/><rect x="2473" y="1502" width="5" height="9" fill="#9370DB"/><rect x="2481" y="1502" width="5" height="10" fill="#9370DB"/><rect x="2489" y="1502" width="5" height="2" fill="#9370DB"/><rect x="2497" y="1502" width="5" height="5" fill="#FF00FF"/><rect x="2505" y="1502" width="5" height="9" fill="#9370DB"/><rect x="2513" y="1502" width="5" height="15" fill="#FF00FF"/><rect x="2521" y="1502" width="5" height="13" fill="#FF00FF"/><rect x="2529" y="1502" width="5" height="15" fill="#FF00FF"/><rect x="2537" y="1499" width="5" height="3" fill="#9370DB"/><rect x="2545" y="1502" width="5" height="9" fill="#9370DB"/><rect x="2553" y="1497" width="5" height="5" fill="#9370DB"/><rect x="2561" y="1496" width="5" height="6" fill="#9370DB"/><rect x="2569" y="1493" width="5" height="9" fill="#9370DB"/><rect x="2577" y="1492" width="5" height="10" fill="#9370DB"/><rect x="2585" y="1491" width="5" height="11" fill="#9370DB"/><rect x="2593" y="1492" width="5" height="10" fill="#9370DB"/><rect x="2601" y="1492" width="5" height="10" fill="#9370DB"/><rect x="2609" y="1502" width="5" height="11" fill="#FF00FF"/><rect x="2617" y="1500" width="5" height="2" fill="#9370DB"/><rect x="2625" y="1502" width="5" height="4" fill="#9370DB"/><rect x="2633" y="1502" width="5" height="9" fill="#9370DB"/><rect x="2641" y="1502" width="5" height="3" fill="#A52A2A"/><rect x="2649" y="1502" width="5" height="8" fill="#9370DB"/><rect x="2657" y="1500" width="5" height="2" fill="#A52A2A"/><rect x="2665" y="1502" width="5" height="6" fill="#9370DB"/><rect x="697" y="1536" width="4" height="10" fill="#FF0000"/><rect x="705" y="1536" width="4" height="10" fill="#FF0000"/><rect x="713" y="1536" width="4" height="10" fill="#FF0000"/><rect x="737" y="1537" width="4" height="9" fill="#FF0000"/><rect x="745" y="1539" width="4" height="7" fill="#FF0000"/><rect x="753" y="1537" width="4" height="9" fill="#FF0000"/><rect x="937" y="1537" width="4" height="9" fill="#FF0000"/><rect x="945" y="1536" width="4" height="10" fill="#FF0000"/><rect x="953" y="1535" width="4" height="11" fill="#FF0000"/><rect x="961" y="1539" width="4" height="7" fill="#FF0000"/><rect x="969" y="1537" width="4" height="9" fill="#FF0000"/><rect x="1025" y="1537" width="4" height="9" fill="#0000FF"/><rect x="1033" y="1537" width="4" height="9" fill="#0000FF"/><rect x="1041" y="1535" width="4" height="11" fill="#0000FF"/><rect x="1049" y="1536" width="4" height="10" fill="#0000FF"/><rect x="1057" y="1537" width="4" height="9" fill="#0000FF"/><rect x="1065" y="1535" width="4" height="11" fill="#0000FF"/><rect x="1073" y="1536" width="4" height="10" fill="#0000FF"/><rect x="1081" y="1539" width="4" height="7" fill="#0000FF"/><rect x="1089" y="1539" width="4" height="7" fill="#0000FF"/><rect x="1097" y="1539" width="4" height="7" fill="#0000FF"/><rect x="1105" y="1535" width="4" height="11" fill="#0000FF"/><rect x="1113" y="1536" width="4" height="10" fill="#0000FF"/><rect x="1121" y="1537" width="4" height="9" fill="#0000FF"/><rect x="1129" y="1536" width="4" height="10" fill="#0000FF"/><rect x="1137" y="1539" width="4" height="7" fill="#0000FF"/><rect x="1145" y="1535" width="4" height="11" fill="#0000FF"/><rect x="1153" y="1535" width="4" height="11" fill="#0000FF"/><rect x="1161" y="1535" width="4" height="11" fill="#0000FF"/><rect x="1233" y="1539" width="4" height="7" fill="#0000FF"/><rect x="1241" y="1539" width="4" height="7" fill="#0000FF"/><rect x="1249" y="1535" width="4" height="11" fill="#0000FF"/><rect x="1257" y="1535" width="4" height="11" fill="#0000FF"/><rect x="1329" y="1539" width="4" height="7" fill="#0000FF"/><rect x="1337" y="1535" width="4" height="11" fill="#0000FF"/><rect x="1345" y="1539" width="4" height="7" fill="#0000FF"/><rect x="1409" y="1535" width="4" height="11" fill="#FF0000"/><rect x="1417" y="1535" width="4" height="11" fill="#FF0000"/><rect x="1425" y="1537" width="4" height="9" fill="#FF0000"/><rect x="1433" y="1537" width="4" height="9" fill="#FF0000"/><rect x="1441" y="1535" width="4" height="11" fill="#FF0000"/><rect x="1449" y="1535" width="4" height="11" fill="#FF0000"/><rect x="2257" y="1539" width="4" height="7" fill="#0000FF"/><rect x="2265" y="1539" width="4" height="7" fill="#0000FF"/><rect x="2273" y="1537" width="4" height="9" fill="#0000FF"/><rect x="2281" y="1539" width="4" height="7" fill="#0000FF"/><rect x="2289" y="1536" width="4" height="10" fill="#0000FF"/><rect x="2297" y="1536" width="4" height="10" fill="#0000FF"/><rect x="2305" y="1535" width="4" height="11" fill="#0000FF"/><rect x="2313" y="1535" width="4" height="11" fill="#0000FF"/><rect x="2321" y="1537" width="4" height="9" fill="#0000FF"/><rect x="2409" y="1536" width="4" height="10" fill="#FF0000"/><rect x="2417" y="1539" width="4" height="7" fill="#FF0000"/><rect x="2425" y="1539" width="4" height="7" fill="#FF0000"/><rect x="2481" y="1537" width="4" height="9" fill="#0000FF"/><rect x="2489" y="1535" width="4" height="11" fill="#0000FF"/><rect x="2513" y="1537" width="4" height="9" fill="#0000FF"/><rect x="2521" y="1535" width="4" height="11" fill="#0000FF"/><rect x="1065" y="1537" width="4" height="9" fill="#DAA520"/><rect x="1321" y="1537" width="4" height="9" fill="#DAA520"/><polyline fill="none" points="-189.0,1527.3 -181.0,1528.4 -173.0,1526.9 -165.0,1527.2 -157.0,1527.7 -149.0,1527.6 -141.0,1528.1 -133.0,1528.4 -125.0,1528.5 -117.0,1527.9 -109.0,1529.1 -101.0,1528.9 -93.0,1528.9 -85.0,1529.1 -77.0,1529.0 -69.0,1529.1 -61.0,1529.7 -53.0,1530.2 -45.0,1529.6 -37.0,1529.4 -29.0,1529.3 -21.0,1528.8 -13.0,1529.4 -5.0,1529.8 3.0,1529.2 11.0,1528.1 19.0,1528.0 27.0,1527.9 35.0,1528.0 43.0,1528.9 51.0,1530.3 59.0,1531.9 67.0,1534.3 75.0,1538.1 83.0,1539.4 91.0,1538.7 99.0,1536.3 107.0,1534.6 115.0,1533.4 123.0,1534.2 131.0,1536.7 139.0,1537.6 147.0,1538.0 155.0,1540.2 163.0,1541.6 171.0,1542.2 179.0,1541.8 187.0,1541.0 195.0,1539.3 203.0,1536.2 211.0,1534.8 219.0,1532.8 227.0,1528.2 235.0,1523.1 243.0,1514.0 251.0,1502.7 259.0,1494.0 267.0,1486.2 275.0,1481.7 283.0,1480.2 291.0,1479.5 299.0,1482.6 307.0,1487.8 315.0,1492.5 323.0,1497.2 331.0,1499.1 339.0,1500.1 347.0,1499.3 355.0,1499.5 363.0,1500.4 371.0,1498.7 379.0,1500.7 387.0,1504.0 395.0,1508.9 403.0,1516.2 411.0,1521.1 419.0,1522.1 427.0,1520.5 435.0,1518.0 443.0,1514.8 451.0,1510.5 459.0,1508.2 467.0,1506.3 475.0,1504.6 483.0,1507.7 491.0,1507.3 499.0,1507.5 507.0,1507.2 515.0,1505.2 523.0,1504.4 531.0,1502.6 539.0,1499.4 547.0,1498.0 555.0,1499.6 563.0,1503.0 571.0,1510.2 579.0,1516.9 587.0,1523.3 595.0,1527.3 603.0,1530.0 611.0,1528.6 619.0,1523.2 627.0,1519.1 635.0,1513.9 643.0,1511.1 651.0,1510.8 659.0,1508.8 667.0,1506.9 675.0,1504.3 683.0,1499.8 691.0,1494.7 699.0,1488.7 707.0,1483.8 715.0,1479.0 723.0,1475.7 731.0,1475.6 739.0,1475.1 747.0,1476.0 755.0,1478.9 763.0,1481.8 771.0,1486.8 779.0,1493.6 787.0,1499.4 795.0,1502.2 803.0,1501.0 811.0,1496.6 819.0,1491.4 827.0,1488.3 835.0,1487.5 843.0,1488.6 851.0,1493.6 859.0,1501.7 867.0,1509.1 875.0,1513.5 883.0,1514.0 891.0,1509.9 899.0,1505.2 907.0,1502.0 915.0,1498.7 923.0,1494.5 931.0,1490.0 939.0,1486.2 947.0,1481.5 955.0,1477.4 963.0,1475.6 971.0,1474.2 979.0,1475.2 987.0,1478.5 995.0,1481.8 1003.0,1485.5 1011.0,1493.0 1019.0,1500.5 1027.0,1510.5 1035.0,1521.8 1043.0,1526.4 1051.0,1531.2 1059.0,1531.6 1067.0,1530.9 1075.0,1532.5 1083.0,1533.7 1091.0,1536.7 1099.0,1538.6 1107.0,1539.0 1115.0,1538.3 1123.0,1538.0 1131.0,1538.6 1139.0,1539.0 1147.0,1539.2 1155.0,1537.7 1163.0,1534.8 1171.0,1532.5 1179.0,1528.3 1187.0,1525.2 1195.0,1521.7 1203.0,1517.8 1211.0,1516.7 1219.0,1516.5 1227.0,1518.1 1235.0,1521.5 1243.0,1527.0 1251.0,1530.9 1259.0,1532.5 1267.0,1533.0 1275.0,1529.1 1283.0,1525.3 1291.0,1523.8 1299.0,1523.7 1307.0,1526.1 1315.0,1528.6 1323.0,1530.1 1331.0,1531.4 1339.0,1532.3 1347.0,1532.6 1355.0,1530.2 1363.0,1523.2 1371.0,1511.8 1379.0,1500.0 1387.0,1491.0 1395.0,1486.0 1403.0,1485.2 1411.0,1484.8 1419.0,1485.8 1427.0,1484.1 1435.0,1482.8 1443.0,1481.6 1451.0,1479.6 1459.0,1480.1 1467.0,1480.2 1475.0,1481.6 1483.0,1481.9 1491.0,1481.6 1499.0,1481.7 1507.0,1481.7 1515.0,1482.0 1523.0,1483.6 1531.0,1485.1 1539.0,1484.6 1547.0,1485.7 1555.0,1486.2 1563.0,1484.7 1571.0,1486.0 1579.0,1486.2 1587.0,1485.3 1595.0,1487.5 1603.0,1488.0 1611.0,1488.3 1619.0,1489.8 1627.0,1489.9 1635.0,1490.6 1643.0,1491.6 1651.0,1492.1 1659.0,1491.6 1667.0,1491.4 1675.0,1491.6 1683.0,1490.4 1691.0,1492.6 1699.0,1493.1 1707.0,1492.9 1715.0,1493.9 1723.0,1493.3 1731.0,1494.0 1739.0,1494.7 1747.0,1495.9 1755.0,1495.7 1763.0,1495.8 1771.0,1496.5 1779.0,1496.8 1787.0,1498.1 1795.0,1498.9 1803.0,1499.5 1811.0,1500.4 1819.0,1501.1 1827.0,1501.8 1835.0,1502.1 1843.0,1502.1 1851.0,1501.2 1859.0,1501.0 1867.0,1501.5 1875.0,1502.0 1883.0,1502.5 1891.0,1502.2 1899.0,1501.3 1907.0,1501.6 1915.0,1502.6 1923.0,1503.8 1931.0,1504.2 1939.0,1504.1 1947.0,1504.0 1955.0,1503.5 1963.0,1504.7 1971.0,1505.0 1979.0,1504.7 1987.0,1504.8 1995.0,1505.3 2003.0,1505.9 2011.0,1506.1 2019.0,1506.5 2027.0,1506.8 2035.0,1507.2 2043.0,1507.8 2051.0,1509.5 2059.0,1509.1 2067.0,1508.5 2075.0,1509.5 2083.0,1508.8 2091.0,1509.4 2099.0,1510.3 2107.0,1509.5 2115.0,1509.6 2123.0,1510.0 2131.0,1511.6 2139.0,1512.4 2147.0,1514.7 2155.0,1515.8 2163.0,1515.3 2171.0,1516.8 2179.0,1517.3 2187.0,1517.6 2195.0,1517.9 2203.0,1518.8 2211.0,1518.8 2219.0,1520.4 2227.0,1521.4 2235.0,1522.0 2243.0,1523.3 2251.0,1523.8 2259.0,1526.5 2267.0,1528.8 2275.0,1530.7 2283.0,1531.9 2291.0,1532.5 2299.0,1531.1 2307.0,1531.0 2315.0,1531.2 2323.0,1530.6 2331.0,1529.0 2339.0,1524.1 2347.0,1517.7 2355.0,1509.4 2363.0,1502.6 2371.0,1499.1 2379.0,1496.8 2387.0,1495.4 2395.0,1493.5 2403.0,1490.8 2411.0,1487.3 2419.0,1483.0 2427.0,1482.6 2435.0,1484.3 2443.0,1488.3 2451.0,1496.3 2459.0,1503.2 2467.0,1509.3 2475.0,1517.4 2483.0,1525.4 2491.0,1530.0 2499.0,1532.2 2507.0,1532.0 2515.0,1529.4 2523.0,1529.9 2531.0,1530.1 2539.0,1527.5 2547.0,1523.5 2555.0,1517.5 2563.0,1511.3 2571.0,1505.7 2579.0,1500.9 2587.0,1496.5 2595.0,1494.9 2603.0,1495.3 2611.0,1497.5 2619.0,1501.2 2627.0,1503.3 2635.0,1506.3 2643.0,1508.4 2651.0,1511.2 2659.0,1511.8 2667.0,1509.8" stroke="#FF2020" stroke-width="1.2" stroke-dasharray="3,3"/><polyline fill="none" points="-189.0,1527.3 -181.0,1529.5 -173.0,1523.8 -165.0,1528.2 -157.0,1529.2 -149.0,1529.2 -141.0,1525.8 -133.0,1529.5 -125.0,1529.3 -117.0,1526.9 -109.0,1530.6 -101.0,1528.9 -93.0,1529.0 -85.0,1528.0 -77.0,1530.2 -69.0,1529.2 -61.0,1531.4 -53.0,1530.0 -45.0,1527.7 -37.0,1528.5 -29.0,1531.0 -21.0,1528.2 -13.0,1529.8 -5.0,1530.1 3.0,1528.6 11.0,1524.1 19.0,1529.3 27.0,1529.5 35.0,1529.3 43.0,1527.4 51.0,1535.0 59.0,1536.0 67.0,1538.8 75.0,1542.5 83.0,1540.5 91.0,1533.1 99.0,1529.0 107.0,1535.9 115.0,1535.7 123.0,1536.3 131.0,1538.8 139.0,1539.7 147.0,1537.3 155.0,1545.0 163.0,1544.5 171.0,1542.0 179.0,1535.8 187.0,1541.6 195.0,1537.7 203.0,1529.5 211.0,1530.4 219.0,1533.7 227.0,1519.2 235.0,1509.0 243.0,1494.2 251.0,1488.4 259.0,1484.3 267.0,1478.1 275.0,1476.3 283.0,1482.3 291.0,1481.3 299.0,1490.5 307.0,1497.3 315.0,1501.1 323.0,1499.8 331.0,1498.5 339.0,1500.9 347.0,1497.9 355.0,1500.6 363.0,1502.0 371.0,1494.4 379.0,1505.8 387.0,1513.9 395.0,1521.7 403.0,1523.6 411.0,1525.3 419.0,1518.0 427.0,1515.1 435.0,1513.7 443.0,1512.3 451.0,1500.7 459.0,1506.2 467.0,1505.9 475.0,1505.6 483.0,1513.0 491.0,1504.6 499.0,1506.8 507.0,1504.3 515.0,1505.2 523.0,1501.4 531.0,1499.3 539.0,1491.7 547.0,1499.5 555.0,1507.7 563.0,1513.2 571.0,1520.2 579.0,1526.4 587.0,1533.3 595.0,1529.4 603.0,1531.0 611.0,1520.6 619.0,1511.8 627.0,1512.9 635.0,1510.5 643.0,1509.1 651.0,1510.8 659.0,1504.9 667.0,1502.8 675.0,1498.6 683.0,1492.9 691.0,1484.7 699.0,1478.8 707.0,1478.8 715.0,1473.6 723.0,1471.7 731.0,1478.3 739.0,1476.8 747.0,1477.4 755.0,1483.1 763.0,1490.1 771.0,1496.5 779.0,1504.8 787.0,1506.1 795.0,1501.3 803.0,1491.8 811.0,1487.3 819.0,1485.2 827.0,1488.8 835.0,1488.6 843.0,1491.6 851.0,1505.3 859.0,1521.2 867.0,1518.1 875.0,1509.1 883.0,1507.3 891.0,1504.9 899.0,1499.4 907.0,1496.3 915.0,1494.1 923.0,1488.3 931.0,1481.2 939.0,1481.1 947.0,1475.4 955.0,1471.8 963.0,1473.9 971.0,1475.7 979.0,1479.5 987.0,1485.0 995.0,1486.9 1003.0,1490.5 1011.0,1509.5 1019.0,1515.2 1027.0,1526.8 1035.0,1535.6 1043.0,1527.9 1051.0,1534.4 1059.0,1528.5 1067.0,1532.9 1075.0,1534.1 1083.0,1539.4 1091.0,1540.6 1099.0,1540.2 1107.0,1536.0 1115.0,1536.6 1123.0,1539.4 1131.0,1542.3 1139.0,1537.9 1147.0,1537.3 1155.0,1533.3 1163.0,1530.8 1171.0,1528.8 1179.0,1520.3 1187.0,1520.9 1195.0,1516.8 1203.0,1513.3 1211.0,1516.0 1219.0,1519.9 1227.0,1523.2 1235.0,1526.8 1243.0,1538.3 1251.0,1535.4 1259.0,1529.5 1267.0,1528.8 1275.0,1522.9 1283.0,1520.1 1291.0,1523.3 1299.0,1528.6 1307.0,1532.4 1315.0,1530.3 1323.0,1529.3 1331.0,1533.5 1339.0,1536.0 1347.0,1531.5 1355.0,1519.9 1363.0,1505.4 1371.0,1490.4 1379.0,1484.5 1387.0,1483.6 1395.0,1485.4 1403.0,1487.2 1411.0,1483.0 1419.0,1487.6 1427.0,1478.6 1435.0,1481.9 1443.0,1478.1 1451.0,1479.7 1459.0,1480.7 1467.0,1482.2 1475.0,1483.9 1483.0,1480.7 1491.0,1479.7 1499.0,1482.4 1507.0,1483.9 1515.0,1482.2 1523.0,1486.1 1531.0,1488.2 1539.0,1482.0 1547.0,1486.3 1555.0,1488.2 1563.0,1482.3 1571.0,1487.4 1579.0,1486.9 1587.0,1484.8 1595.0,1491.1 1603.0,1489.2 1611.0,1488.2 1619.0,1490.6 1627.0,1491.5 1635.0,1492.2 1643.0,1492.3 1651.0,1492.4 1659.0,1489.4 1667.0,1491.5 1675.0,1493.1 1683.0,1487.4 1691.0,1498.3 1699.0,1493.4 1707.0,1492.4 1715.0,1491.2 1723.0,1496.1 1731.0,1496.1 1739.0,1495.3 1747.0,1496.1 1755.0,1495.5 1763.0,1496.3 1771.0,1498.1 1779.0,1497.4 1787.0,1500.7 1795.0,1499.4 1803.0,1500.4 1811.0,1501.2 1819.0,1503.4 1827.0,1502.2 1835.0,1501.7 1843.0,1501.1 1851.0,1500.0 1859.0,1501.2 1867.0,1503.7 1875.0,1503.0 1883.0,1501.9 1891.0,1500.2 1899.0,1500.0 1907.0,1504.3 1915.0,1506.0 1923.0,1504.9 1931.0,1501.4 1939.0,1504.2 1947.0,1505.4 1955.0,1503.2 1963.0,1506.2 1971.0,1505.3 1979.0,1504.2 1987.0,1503.6 1995.0,1508.2 2003.0,1507.5 2011.0,1505.1 2019.0,1505.1 2027.0,1509.5 2035.0,1509.1 2043.0,1507.4 2051.0,1511.8 2059.0,1508.0 2067.0,1506.6 2075.0,1511.5 2083.0,1509.0 2091.0,1510.4 2099.0,1510.0 2107.0,1508.6 2115.0,1509.1 2123.0,1512.1 2131.0,1516.4 2139.0,1512.1 2147.0,1518.0 2155.0,1516.5 2163.0,1514.5 2171.0,1518.3 2179.0,1519.9 2187.0,1517.6 2195.0,1515.8 2203.0,1522.0 2211.0,1519.8 2219.0,1524.0 2227.0,1519.8 2235.0,1524.5 2243.0,1525.1 2251.0,1525.8 2259.0,1530.6 2267.0,1533.6 2275.0,1532.7 2283.0,1530.7 2291.0,1533.0 2299.0,1528.1 2307.0,1532.3 2315.0,1531.5 2323.0,1530.6 2331.0,1521.5 2339.0,1513.0 2347.0,1505.5 2355.0,1497.7 2363.0,1494.0 2371.0,1499.2 2379.0,1496.4 2387.0,1492.0 2395.0,1486.4 2403.0,1488.2 2411.0,1482.4 2419.0,1474.9 2427.0,1485.0 2435.0,1495.1 2443.0,1498.4 2451.0,1506.8 2459.0,1512.5 2467.0,1519.5 2475.0,1530.6 2483.0,1538.9 2491.0,1530.8 2499.0,1528.5 2507.0,1529.7 2515.0,1528.9 2523.0,1532.6 2531.0,1529.4 2539.0,1519.2 2547.0,1512.8 2555.0,1508.7 2563.0,1504.3 2571.0,1496.9 2579.0,1493.8 2587.0,1491.0 2595.0,1497.9 2603.0,1498.3 2611.0,1502.7 2619.0,1506.0 2627.0,1506.0 2635.0,1510.5 2643.0,1511.3 2651.0,1517.2 2659.0,1508.2 2667.0,1502.4" stroke="#20B2AA" stroke-width="1.2"/><polyline fill="none" points="627.0,1512.3 635.0,1510.8 643.0,1509.8 651.0,1508.5 659.0,1505.7 667.0,1502.2 675.0,1497.8 683.0,1492.0 691.0,1485.7 699.0,1480.7 707.0,1477.5 715.0,1474.9 723.0,1474.4 731.0,1476.0 739.0,1477.4 747.0,1479.4 755.0,1483.8 763.0,1490.1 771.0,1496.8 779.0,1502.1 787.0,1503.3 795.0,1499.5 803.0,1493.4 811.0,1488.7 819.0,1487.2 827.0,1488.0 835.0,1490.1 843.0,1495.7 851.0,1505.6 859.0,1514.3 867.0,1515.4 875.0,1511.3 883.0,1507.3 891.0,1503.9 899.0,1500.1 907.0,1496.6 915.0,1492.8 923.0,1488.0 931.0,1483.3 939.0,1479.6 947.0,1476.2 955.0,1473.9 963.0,1474.2 971.0,1476.5 979.0,1480.0 987.0,1483.9 995.0,1488.2 1003.0,1495.3 1011.0,1505.9 1019.0,1516.4 1027.0,1525.2 1035.0,1530.4 1043.0,1531.3 1051.0,1531.4 1059.0,1531.3 1067.0,1532.6 1075.0,1535.1 1083.0,1538.1 1091.0,1539.6 1099.0,1539.0 1107.0,1537.6 1115.0,1537.6 1123.0,1539.1 1131.0,1539.9 1139.0,1538.6 1147.0,1536.4 1155.0,1533.7 1163.0,1530.7 1171.0,1527.0 1179.0,1522.9 1187.0,1519.8 1195.0,1517.1 1203.0,1515.6 1211.0,1516.7 1219.0,1519.7 1227.0,1523.7 1235.0,1528.8 1243.0,1533.5 1251.0,1533.8 1259.0,1530.9 1267.0,1527.4 1275.0,1524.1 1283.0,1522.5 1291.0,1524.3 1299.0,1527.8 1307.0,1530.3 1315.0,1530.7 1323.0,1531.1 1331.0,1532.8 1339.0,1533.1 1347.0,1528.4 1355.0,1518.4 1363.0,1505.5 1371.0,1493.8 1379.0,1486.9 1387.0,1484.8 1395.0,1485.2 1403.0,1485.6 1411.0,1485.0 1419.0,1483.9 1427.0,1481.8 1435.0,1480.4 1443.0,1479.6 1451.0,1479.8 1459.0,1480.9 1467.0,1482.0 1475.0,1482.3 1483.0,1481.4 1491.0,1481.0 1499.0,1482.0 1507.0,1483.0 1515.0,1483.9 1523.0,1485.3 1531.0,1485.8 1539.0,1485.2 1547.0,1485.6 1555.0,1485.9 1563.0,1485.5 1571.0,1485.9 1579.0,1486.5 1587.0,1487.2 1595.0,1488.7 1603.0,1489.3 1611.0,1489.4 1619.0,1490.2 1627.0,1491.3 1635.0,1492.0 1643.0,1492.1 1651.0,1491.6 1659.0,1491.0 1667.0,1491.2 1675.0,1491.4 1683.0,1492.0 1691.0,1493.9 1699.0,1493.9 1707.0,1492.9 1715.0,1493.1 1723.0,1494.7 1731.0,1495.6 1739.0,1495.7 1747.0,1495.8 1755.0,1496.0 1763.0,1496.6 1771.0,1497.5 1779.0,1498.4 1787.0,1499.4 1795.0,1500.0 1803.0,1500.5 1811.0,1501.5 1819.0,1502.3 1827.0,1502.2 1835.0,1501.6 1843.0,1501.0 1851.0,1500.8 1859.0,1501.6 1867.0,1502.6 1875.0,1502.7 1883.0,1501.8 1891.0,1500.9 1899.0,1501.5 1907.0,1503.5 1915.0,1504.7 1923.0,1504.3 1931.0,1503.4 1939.0,1503.8 1947.0,1504.4 1955.0,1504.6 1963.0,1505.1 1971.0,1505.0 1979.0,1504.6 1987.0,1505.2 1995.0,1506.5 2003.0,1506.8 2011.0,1506.1 2019.0,1506.5 2027.0,1508.0 2035.0,1508.7 2043.0,1509.1 2051.0,1509.4 2059.0,1508.8 2067.0,1508.6 2075.0,1509.5 2083.0,1509.9 2091.0,1510.0 2099.0,1509.7 2107.0,1509.4 2115.0,1510.2 2123.0,1512.2 2131.0,1514.0 2139.0,1514.8 2147.0,1515.9 2155.0,1516.2 2163.0,1516.4 2171.0,1517.6 2179.0,1518.4 2187.0,1518.0 2195.0,1518.2 2203.0,1519.8 2211.0,1521.1 2219.0,1521.8 2227.0,1522.2 2235.0,1523.5 2243.0,1525.1 2251.0,1527.2 2259.0,1530.0 2267.0,1532.1 2275.0,1532.4 2283.0,1531.8 2291.0,1531.2 2299.0,1530.6 2307.0,1531.0 2315.0,1530.7 2323.0,1527.7 2331.0,1521.3 2339.0,1513.4 2347.0,1505.7 2355.0,1499.6 2363.0,1496.9 2371.0,1496.8 2379.0,1495.3 2387.0,1491.9 2395.0,1488.5 2403.0,1485.8 2411.0,1482.4 2419.0,1481.0 2427.0,1485.6 2435.0,1493.0 2443.0,1499.7 2451.0,1506.2 2459.0,1513.0 2467.0,1520.9 2475.0,1529.0 2483.0,1533.3 2491.0,1532.1 2499.0,1529.9 2507.0,1529.4 2515.0,1530.0 2523.0,1530.0 2531.0,1526.8 2539.0,1520.3 2547.0,1513.8 2555.0,1508.6 2563.0,1503.5 2571.0,1498.3 2579.0,1494.7 2587.0,1494.1 2595.0,1496.3 2603.0,1499.3 2611.0,1502.3 2619.0,1505.0 2627.0,1507.2 2635.0,1509.7 2643.0,1512.1 2651.0,1512.4 2659.0,1509.2 2667.0,1505.5" stroke="#FFD700" stroke-width="2.4"/><polyline fill="none" points="2667.0,1503.0 2676.0,1499.0 2692.0,1499.0 2703.0,1503.0 2725.0,1503.0 2746.0,1511.0 2773.0,1518.0 2795.0,1527.0 2814.0,1526.4 2828.0,1524.8" stroke="#FF00FF" stroke-width="3"/><polyline fill="none" points="2667.0,1503.0 2676.0,1501.7 2692.0,1500.3 2770.0,1500.3 2787.0,1502.5 2828.0,1502.5" stroke="#006400" stroke-width="3"/></g><path d="M44 1537 L52 1546 L44 1546 Z" fill="#C0C0C0"/><line x1="43.5" y1="168" x2="43.5" y2="1550" stroke="#FFFFFF" stroke-width="1"/><line x1="43" y1="168.5" x2="3311" y2="168.5" stroke="#FFFFFF" stroke-width="1"/><line x1="3310.5" y1="168" x2="3310.5" y2="1547" stroke="#FFFFFF" stroke-width="1"/><line x1="43" y1="1464.5" x2="3311" y2="1464.5" stroke="#FFFFFF" stroke-width="1"/><line x1="43" y1="1466.5" x2="3311" y2="1466.5" stroke="#FFFFFF" stroke-width="1"/><line x1="43" y1="1546.5" x2="3311" y2="1546.5" stroke="#FFFFFF" stroke-width="1"/><line x1="40" y1="1579.5" x2="3394" y2="1579.5" stroke="#FFFFFF" stroke-width="1"/><line x1="3311" y1="193.5" x2="3316" y2="193.5" stroke="#FFFFFF" stroke-width="1"/><line x1="3311" y1="256.5" x2="3316" y2="256.5" stroke="#FFFFFF" stroke-width="1"/><line x1="3311" y1="320.5" x2="3316" y2="320.5" stroke="#FFFFFF" stroke-width="1"/><line x1="3311" y1="383.5" x2="3316" y2="383.5" stroke="#FFFFFF" stroke-width="1"/><line x1="3311" y1="447.5" x2="3316" y2="447.5" stroke="#FFFFFF" stroke-width="1"/><line x1="3311" y1="511.5" x2="3316" y2="511.5" stroke="#FFFFFF" stroke-width="1"/><line x1="3311" y1="574.5" x2="3316" y2="574.5" stroke="#FFFFFF" stroke-width="1"/><line x1="3311" y1="638.5" x2="3316" y2="638.5" stroke="#FFFFFF" stroke-width="1"/><line x1="3311" y1="701.5" x2="3316" y2="701.5" stroke="#FFFFFF" stroke-width="1"/><line x1="3311" y1="765.5" x2="3316" y2="765.5" stroke="#FFFFFF" stroke-width="1"/><line x1="3311" y1="828.5" x2="3316" y2="828.5" stroke="#FFFFFF" stroke-width="1"/><line x1="3311" y1="892.5" x2="3316" y2="892.5" stroke="#FFFFFF" stroke-width="1"/><line x1="3311" y1="956.5" x2="3316" y2="956.5" stroke="#FFFFFF" stroke-width="1"/><line x1="3311" y1="1019.5" x2="3316" y2="1019.5" stroke="#FFFFFF" stroke-width="1"/><line x1="3311" y1="1083.5" x2="3316" y2="1083.5" stroke="#FFFFFF" stroke-width="1"/><line x1="3311" y1="1210.5" x2="3316" y2="1210.5" stroke="#FFFFFF" stroke-width="1"/><line x1="3311" y1="1273.5" x2="3316" y2="1273.5" stroke="#FFFFFF" stroke-width="1"/><line x1="3311" y1="1337.5" x2="3316" y2="1337.5" stroke="#FFFFFF" stroke-width="1"/><line x1="171.5" y1="1547" x2="171.5" y2="1553" stroke="#FFFFFF" stroke-width="1"/><line x1="299.5" y1="1547" x2="299.5" y2="1553" stroke="#FFFFFF" stroke-width="1"/><line x1="427.5" y1="1547" x2="427.5" y2="1553" stroke="#FFFFFF" stroke-width="1"/><line x1="555.5" y1="1547" x2="555.5" y2="1553" stroke="#FFFFFF" stroke-width="1"/><line x1="683.5" y1="1547" x2="683.5" y2="1553" stroke="#FFFFFF" stroke-width="1"/><line x1="811.5" y1="1547" x2="811.5" y2="1553" stroke="#FFFFFF" stroke-width="1"/><line x1="939.5" y1="1547" x2="939.5" y2="1553" stroke="#FFFFFF" stroke-width="1"/><line x1="1067.5" y1="1547" x2="1067.5" y2="1553" stroke="#FFFFFF" stroke-width="1"/><line x1="1195.5" y1="1547" x2="1195.5" y2="1553" stroke="#FFFFFF" stroke-width="1"/><line x1="1323.5" y1="1547" x2="1323.5" y2="1553" stroke="#FFFFFF" stroke-width="1"/><line x1="1451.5" y1="1547" x2="1451.5" y2="1553" stroke="#FFFFFF" stroke-width="1"/><line x1="1579.5" y1="1547" x2="1579.5" y2="1553" stroke="#FFFFFF" stroke-width="1"/><line x1="1707.5" y1="1547" x2="1707.5" y2="1553" stroke="#FFFFFF" stroke-width="1"/><line x1="1835.5" y1="1547" x2="1835.5" y2="1553" stroke="#FFFFFF" stroke-width="1"/><line x1="1963.5" y1="1547" x2="1963.5" y2="1553" stroke="#FFFFFF" stroke-width="1"/><line x1="2091.5" y1="1547" x2="2091.5" y2="1553" stroke="#FFFFFF" stroke-width="1"/><line x1="2219.5" y1="1547" x2="2219.5" y2="1553" stroke="#FFFFFF" stroke-width="1"/><line x1="2347.5" y1="1547" x2="2347.5" y2="1553" stroke="#FFFFFF" stroke-width="1"/><line x1="2475.5" y1="1547" x2="2475.5" y2="1553" stroke="#FFFFFF" stroke-width="1"/><line x1="2603.5" y1="1547" x2="2603.5" y2="1553" stroke="#FFFFFF" stroke-width="1"/><line x1="3311" y1="1482.5" x2="3316" y2="1482.5" stroke="#FFFFFF" stroke-width="1"/><line x1="3311" y1="1530.5" x2="3316" y2="1530.5" stroke="#FFFFFF" stroke-width="1"/><line x1="3311" y1="1467.5" x2="3316" y2="1467.5" stroke="#FFFFFF" stroke-width="1"/><line x1="3311" y1="1545.5" x2="3316" y2="1545.5" stroke="#FFFFFF" stroke-width="1"/></svg>
<div style="position:absolute;left:696px;top:189px;width:26px;height:26px;background:#4682B4;border-top:2px solid #6AA8E6;border-left:2px solid #6AA8E6;border-right:2px solid #2D6AA5;border-bottom:2px solid #2D6AA5;box-sizing:border-box"></div>
<div style="position:absolute;left:723px;top:189px;width:26px;height:26px;background:#4682B4;border-top:2px solid #6AA8E6;border-left:2px solid #6AA8E6;border-right:2px solid #2D6AA5;border-bottom:2px solid #2D6AA5;box-sizing:border-box"></div>
<div style="position:absolute;left:702px;top:209px;width:13px;height:3px;background:#FFFFFF"></div>
<svg style="position:absolute;left:723px;top:189px;" width="26" height="26" viewBox="0 0 26 26"><path d="M8 8 L18 18 M18 8 L8 18" stroke="#FFF" stroke-width="2.6"/></svg>
<div style="position:absolute;left:3197px;top:180.4px;font-size:19px;line-height:1;color:#FFFFFF;white-space:pre;font-family:'Liberation Sans', sans-serif;letter-spacing:-0.33px">Objective</div>
<svg style="position:absolute;left:3276px;top:168px;" width="34" height="36" viewBox="0 0 34 36"><path d="M3 8 L16 2 L30 8 L17 14 Z" fill="#8A8A8A"/><path d="M7 10 L17 15 L27 10 L27 15 Q17 20 7 15 Z" fill="#5A5A5A"/>
<circle cx="16" cy="19" r="6" fill="#C89B2A"/><path d="M2 34 Q3 23 12 23 L22 25 Q27 30 25 36 L3 36 Z" fill="#3D7BD8"/>
<circle cx="24" cy="26" r="8" fill="#3DAA2E"/><path d="M21 21 L29 26 L21 31 Z" fill="#FFFFFF"/></svg>
<div style="position:absolute;left:3317px;top:184.1px;font-size:19px;line-height:1;color:#FFFFFF;white-space:pre;font-family:'Liberation Sans', sans-serif;letter-spacing:-0.58px">1.23970</div>
<div style="position:absolute;left:3317px;top:247.7px;font-size:19px;line-height:1;color:#FFFFFF;white-space:pre;font-family:'Liberation Sans', sans-serif;letter-spacing:-0.58px">1.23840</div>
<div style="position:absolute;left:3317px;top:311.2px;font-size:19px;line-height:1;color:#FFFFFF;white-space:pre;font-family:'Liberation Sans', sans-serif;letter-spacing:-0.58px">1.23710</div>
<div style="position:absolute;left:3317px;top:374.8px;font-size:19px;line-height:1;color:#FFFFFF;white-space:pre;font-family:'Liberation Sans', sans-serif;letter-spacing:-0.58px">1.23580</div>
<div style="position:absolute;left:3317px;top:438.4px;font-size:19px;line-height:1;color:#FFFFFF;white-space:pre;font-family:'Liberation Sans', sans-serif;letter-spacing:-0.58px">1.23450</div>
<div style="position:absolute;left:3317px;top:501.9px;font-size:19px;line-height:1;color:#FFFFFF;white-space:pre;font-family:'Liberation Sans', sans-serif;letter-spacing:-0.58px">1.23320</div>
<div style="position:absolute;left:3317px;top:565.5px;font-size:19px;line-height:1;color:#FFFFFF;white-space:pre;font-family:'Liberation Sans', sans-serif;letter-spacing:-0.58px">1.23190</div>
<div style="position:absolute;left:3317px;top:629.1px;font-size:19px;line-height:1;color:#FFFFFF;white-space:pre;font-family:'Liberation Sans', sans-serif;letter-spacing:-0.58px">1.23060</div>
<div style="position:absolute;left:3317px;top:692.6px;font-size:19px;line-height:1;color:#FFFFFF;white-space:pre;font-family:'Liberation Sans', sans-serif;letter-spacing:-0.58px">1.22930</div>
<div style="position:absolute;left:3317px;top:756.2px;font-size:19px;line-height:1;color:#FFFFFF;white-space:pre;font-family:'Liberation Sans', sans-serif;letter-spacing:-0.58px">1.22800</div>
<div style="position:absolute;left:3317px;top:819.8px;font-size:19px;line-height:1;color:#FFFFFF;white-space:pre;font-family:'Liberation Sans', sans-serif;letter-spacing:-0.58px">1.22670</div>
<div style="position:absolute;left:3317px;top:883.4px;font-size:19px;line-height:1;color:#FFFFFF;white-space:pre;font-family:'Liberation Sans', sans-serif;letter-spacing:-0.58px">1.22540</div>
<div style="position:absolute;left:3317px;top:946.9px;font-size:19px;line-height:1;color:#FFFFFF;white-space:pre;font-family:'Liberation Sans', sans-serif;letter-spacing:-0.58px">1.22410</div>
<div style="position:absolute;left:3317px;top:1010.5px;font-size:19px;line-height:1;color:#FFFFFF;white-space:pre;font-family:'Liberation Sans', sans-serif;letter-spacing:-0.58px">1.22280</div>
<div style="position:absolute;left:3317px;top:1074.1px;font-size:19px;line-height:1;color:#FFFFFF;white-space:pre;font-family:'Liberation Sans', sans-serif;letter-spacing:-0.58px">1.22150</div>
<div style="position:absolute;left:3317px;top:1201.2px;font-size:19px;line-height:1;color:#FFFFFF;white-space:pre;font-family:'Liberation Sans', sans-serif;letter-spacing:-0.58px">1.21890</div>
<div style="position:absolute;left:3317px;top:1264.8px;font-size:19px;line-height:1;color:#FFFFFF;white-space:pre;font-family:'Liberation Sans', sans-serif;letter-spacing:-0.58px">1.21760</div>
<div style="position:absolute;left:3317px;top:1328.3px;font-size:19px;line-height:1;color:#FFFFFF;white-space:pre;font-family:'Liberation Sans', sans-serif;letter-spacing:-0.58px">1.21630</div>
<div style="position:absolute;left:3313px;top:167px;width:78px;height:23px;background:#EE82EE"></div>
<div style="position:absolute;left:3320px;top:169.4px;font-size:19px;line-height:1;color:#000000;white-space:pre;font-family:'Liberation Sans', sans-serif;letter-spacing:-0.58px">1.24000</div>
<div style="position:absolute;left:3313px;top:656px;width:78px;height:23px;background:#EE82EE"></div>
<div style="position:absolute;left:3320px;top:658.4px;font-size:19px;line-height:1;color:#000000;white-space:pre;font-family:'Liberation Sans', sans-serif;letter-spacing:-0.58px">1.23000</div>
<div style="position:absolute;left:3313px;top:900px;width:78px;height:23px;background:#EE82EE"></div>
<div style="position:absolute;left:3320px;top:902.4px;font-size:19px;line-height:1;color:#000000;white-space:pre;font-family:'Liberation Sans', sans-serif;letter-spacing:-0.58px">1.22500</div>
<div style="position:absolute;left:3313px;top:1145px;width:78px;height:23px;background:#EE82EE"></div>
<div style="position:absolute;left:3320px;top:1147.4px;font-size:19px;line-height:1;color:#000000;white-space:pre;font-family:'Liberation Sans', sans-serif;letter-spacing:-0.58px">1.22000</div>
<div style="position:absolute;left:3313px;top:1389px;width:78px;height:23px;background:#EE82EE"></div>
<div style="position:absolute;left:3320px;top:1391.4px;font-size:19px;line-height:1;color:#000000;white-space:pre;font-family:'Liberation Sans', sans-serif;letter-spacing:-0.58px">1.21500</div>
<div style="position:absolute;left:3313px;top:1109px;width:78px;height:33px;background:#C0C0C0"></div>
<div style="position:absolute;left:3320px;top:1103.9px;font-size:19px;line-height:1;color:#000;white-space:pre;font-family:'Liberation Sans', sans-serif;letter-spacing:-0.58px;clip-path:inset(13px 0 0 0)">1.22071</div>
<div style="position:absolute;left:3320px;top:1121.4px;font-size:19px;line-height:1;color:#000;white-space:pre;font-family:'Liberation Sans', sans-serif;letter-spacing:-0.58px">1.22052</div>
<div style="position:absolute;left:3316px;top:1473.9px;font-size:19px;line-height:1;color:#FFF;white-space:pre;font-family:'Liberation Sans', sans-serif;letter-spacing:-0.58px">100.00</div>
<div style="position:absolute;left:3316px;top:1477.9px;font-size:19px;line-height:1;color:#FFF;white-space:pre;font-family:'Liberation Sans', sans-serif;letter-spacing:-0.58px">80.00</div>
<div style="position:absolute;left:3316px;top:1520.9px;font-size:19px;line-height:1;color:#FFF;white-space:pre;font-family:'Liberation Sans', sans-serif;letter-spacing:-0.58px">20.00</div>
<div style="position:absolute;left:3316px;top:1524.9px;font-size:19px;line-height:1;color:#FFF;white-space:pre;font-family:'Liberation Sans', sans-serif;letter-spacing:-0.58px">0.00</div>
<div style="position:absolute;left:44px;top:1553.4px;font-size:19px;line-height:1;color:#FFFFFF;white-space:pre;font-family:'Liberation Sans', sans-serif;letter-spacing:-0.3px">11 May 2020</div>
<div style="position:absolute;left:172px;top:1553.4px;font-size:19px;line-height:1;color:#FFFFFF;white-space:pre;font-family:'Liberation Sans', sans-serif;letter-spacing:-0.3px">11 May 14:15</div>
<div style="position:absolute;left:300px;top:1553.4px;font-size:19px;line-height:1;color:#FFFFFF;white-space:pre;font-family:'Liberation Sans', sans-serif;letter-spacing:-0.3px">11 May 18:15</div>
<div style="position:absolute;left:428px;top:1553.4px;font-size:19px;line-height:1;color:#FFFFFF;white-space:pre;font-family:'Liberation Sans', sans-serif;letter-spacing:-0.3px">11 May 22:15</div>
<div style="position:absolute;left:556px;top:1553.4px;font-size:19px;line-height:1;color:#FFFFFF;white-space:pre;font-family:'Liberation Sans', sans-serif;letter-spacing:-0.3px">12 May 02:15</div>
<div style="position:absolute;left:684px;top:1553.4px;font-size:19px;line-height:1;color:#FFFFFF;white-space:pre;font-family:'Liberation Sans', sans-serif;letter-spacing:-0.3px">12 May 06:15</div>
<div style="position:absolute;left:812px;top:1553.4px;font-size:19px;line-height:1;color:#FFFFFF;white-space:pre;font-family:'Liberation Sans', sans-serif;letter-spacing:-0.3px">12 May 10:15</div>
<div style="position:absolute;left:940px;top:1553.4px;font-size:19px;line-height:1;color:#FFFFFF;white-space:pre;font-family:'Liberation Sans', sans-serif;letter-spacing:-0.3px">12 May 14:15</div>
<div style="position:absolute;left:1068px;top:1553.4px;font-size:19px;line-height:1;color:#FFFFFF;white-space:pre;font-family:'Liberation Sans', sans-serif;letter-spacing:-0.3px">12 May 18:15</div>
<div style="position:absolute;left:1196px;top:1553.4px;font-size:19px;line-height:1;color:#FFFFFF;white-space:pre;font-family:'Liberation Sans', sans-serif;letter-spacing:-0.3px">12 May 22:15</div>
<div style="position:absolute;left:1324px;top:1553.4px;font-size:19px;line-height:1;color:#FFFFFF;white-space:pre;font-family:'Liberation Sans', sans-serif;letter-spacing:-0.3px">13 May 02:15</div>
<div style="position:absolute;left:1452px;top:1553.4px;font-size:19px;line-height:1;color:#FFFFFF;white-space:pre;font-family:'Liberation Sans', sans-serif;letter-spacing:-0.3px">13 May 06:15</div>
<div style="position:absolute;left:1580px;top:1553.4px;font-size:19px;line-height:1;color:#FFFFFF;white-space:pre;font-family:'Liberation Sans', sans-serif;letter-spacing:-0.3px">13 May 10:15</div>
<div style="position:absolute;left:1708px;top:1553.4px;font-size:19px;line-height:1;color:#FFFFFF;white-space:pre;font-family:'Liberation Sans', sans-serif;letter-spacing:-0.3px">13 May 14:15</div>
<div style="position:absolute;left:1836px;top:1553.4px;font-size:19px;line-height:1;color:#FFFFFF;white-space:pre;font-family:'Liberation Sans', sans-serif;letter-spacing:-0.3px">13 May 18:15</div>
<div style="position:absolute;left:1964px;top:1553.4px;font-size:19px;line-height:1;color:#FFFFFF;white-space:pre;font-family:'Liberation Sans', sans-serif;letter-spacing:-0.3px">13 May 22:15</div>
<div style="position:absolute;left:2092px;top:1553.4px;font-size:19px;line-height:1;color:#FFFFFF;white-space:pre;font-family:'Liberation Sans', sans-serif;letter-spacing:-0.3px">14 May 02:15</div>
<div style="position:absolute;left:2220px;top:1553.4px;font-size:19px;line-height:1;color:#FFFFFF;white-space:pre;font-family:'Liberation Sans', sans-serif;letter-spacing:-0.3px">14 May 06:15</div>
<div style="position:absolute;left:2348px;top:1553.4px;font-size:19px;line-height:1;color:#FFFFFF;white-space:pre;font-family:'Liberation Sans', sans-serif;letter-spacing:-0.3px">14 May 10:15</div>
<div style="position:absolute;left:2476px;top:1553.4px;font-size:19px;line-height:1;color:#FFFFFF;white-space:pre;font-family:'Liberation Sans', sans-serif;letter-spacing:-0.3px">14 May 14:15</div>
<div style="position:absolute;left:2604px;top:1553.4px;font-size:19px;line-height:1;color:#FFFFFF;white-space:pre;font-family:'Liberation Sans', sans-serif;letter-spacing:-0.3px">14 May 18:15</div>
<div style="position:absolute;left:46px;top:1473.4px;font-size:19px;line-height:1;color:#FFFFFF;white-space:pre;font-family:'Liberation Sans', sans-serif;letter-spacing:-0.19px">SSA-Stoch(14,3,3) 55.16 42.47 55.16 25.99 0.00 RSI_Histogram_Vol(7) SSA-Stoch(14,3,3) 54.24 42.16 54.24 25.93 0.00 RSI_Histogram_Vol(7)</div>
<div style="position:absolute;left:40px;top:1580px;width:3354px;height:37px;background:#F0F0F0"></div>
<div style="position:absolute;left:227px;top:1581px;width:3167px;height:1px;background:#000"></div>
<div style="position:absolute;left:41px;top:1580px;width:186px;height:37px;background:#FFFFFF"></div>
<div style="position:absolute;left:43px;top:1580px;width:1px;height:37px;background:#000"></div>
<div style="position:absolute;left:226px;top:1581px;width:1px;height:36px;background:#000"></div>
<div style="position:absolute;left:43px;top:1616px;width:184px;height:1px;background:#000"></div>
<div style="position:absolute;left:40px;top:1617px;width:3354px;height:1px;background:#E3E3E3"></div>
<div style="position:absolute;left:-165.5px;width:600px;top:1590.9px;font-size:22px;line-height:1;color:#000;white-space:pre;text-align:center;">GBPUSD,M15</div>
<div style="position:absolute;left:41px;width:600px;top:1590.9px;font-size:22px;line-height:1;color:#6D6D6D;white-space:pre;text-align:center;">#UKOil_M20,M15</div>
<div style="position:absolute;left:251.60000000000002px;width:600px;top:1590.9px;font-size:22px;line-height:1;color:#6D6D6D;white-space:pre;text-align:center;">GBPAUD,Daily</div>
<div style="position:absolute;left:441px;width:600px;top:1590.9px;font-size:22px;line-height:1;color:#6D6D6D;white-space:pre;text-align:center;">EURUSD,M30</div>
<div style="position:absolute;left:632.7px;width:600px;top:1590.9px;font-size:22px;line-height:1;color:#6D6D6D;white-space:pre;text-align:center;">AUDUSD,Daily</div>
<div style="position:absolute;left:842.5999999999999px;width:600px;top:1590.9px;font-size:22px;line-height:1;color:#6D6D6D;white-space:pre;text-align:center;">#US$idx_M20,H1</div>
<div style="position:absolute;left:1048px;width:600px;top:1590.9px;font-size:22px;line-height:1;color:#6D6D6D;white-space:pre;text-align:center;">GBPUSD,M30</div>
<div style="position:absolute;left:2103px;width:600px;top:1590.9px;font-size:22px;line-height:1;color:#6D6D6D;white-space:pre;text-align:center;">GOLD,M15</div>
<div style="position:absolute;left:2279px;width:600px;top:1590.9px;font-size:22px;line-height:1;color:#6D6D6D;white-space:pre;text-align:center;">USDRUB,Daily</div>
<div style="position:absolute;left:2470px;width:600px;top:1590.9px;font-size:22px;line-height:1;color:#6D6D6D;white-space:pre;text-align:center;">ETHUSD,Daily</div>
<div style="position:absolute;left:2661px;width:600px;top:1590.9px;font-size:22px;line-height:1;color:#6D6D6D;white-space:pre;text-align:center;">USDRUB,Daily</div>
<div style="position:absolute;left:2875px;width:600px;top:1590.9px;font-size:22px;line-height:1;color:#6D6D6D;white-space:pre;text-align:center;">#UK100_M20,M15</div>
<div style="position:absolute;right:1092px;top:1590.9px;font-size:22px;line-height:1;color:#6D6D6D;white-space:pre;text-align:right;">#GER30_M20,M15</div>
<div style="position:absolute;right:1314px;top:1590.9px;font-size:22px;line-height:1;color:#6D6D6D;white-space:pre;text-align:right;">#FRA40_M20,M15</div>
<div style="position:absolute;left:456px;top:1584px;width:1px;height:31px;background:#808080"></div>
<div style="position:absolute;left:649px;top:1584px;width:1px;height:31px;background:#808080"></div>
<div style="position:absolute;left:834px;top:1584px;width:1px;height:31px;background:#808080"></div>
<div style="position:absolute;left:1031px;top:1584px;width:1px;height:31px;background:#808080"></div>
<div style="position:absolute;left:1256px;top:1584px;width:1px;height:31px;background:#808080"></div>
<div style="position:absolute;left:1441px;top:1584px;width:1px;height:31px;background:#808080"></div>
<div style="position:absolute;left:2324px;top:1584px;width:1px;height:31px;background:#808080"></div>
<div style="position:absolute;left:2482px;top:1584px;width:1px;height:31px;background:#808080"></div>
<div style="position:absolute;left:2675px;top:1584px;width:1px;height:31px;background:#808080"></div>
<div style="position:absolute;left:2865px;top:1584px;width:1px;height:31px;background:#808080"></div>
<div style="position:absolute;left:3057px;top:1584px;width:1px;height:31px;background:#808080"></div>
<div style="position:absolute;left:3294px;top:1584px;width:1px;height:31px;background:#808080"></div>
<div style="position:absolute;left:3314px;top:1590.9px;font-size:22px;line-height:1;color:#6D6D6D;white-space:pre;font-family:'Liberation Sans', sans-serif;clip-path:inset(0 6px 0 0)">U</div>
<svg style="position:absolute;left:3336px;top:1585px;" width="58" height="30" viewBox="0 0 58 30"><path d="M15 7 L7 15 L15 23 Z" fill="#A0A0A0"/><path d="M43 7 L51 15 L43 23 Z" fill="#000"/></svg>
<div style="position:absolute;left:3332px;top:1581px;width:62px;height:36px;background:transparent"></div>
<div style="position:absolute;left:0px;top:1617px;width:3394px;height:10px;background:#F0F0F0"></div>
<div style="position:absolute;left:0px;top:1627px;width:3394px;height:1px;background:#A0A0A0"></div>
<div style="position:absolute;left:0px;top:1628px;width:3394px;height:134px;background:#FFFFFF"></div>
<div style="position:absolute;left:0px;top:1668px;width:3394px;height:38px;background:#EBEBEB"></div>
<div style="position:absolute;left:0px;top:1745px;width:3394px;height:17px;background:#EBEBEB"></div>
<div style="position:absolute;left:0px;top:1667px;width:3394px;height:1px;background:#E3E3E3"></div>
<div style="position:absolute;left:0px;top:1706px;width:3394px;height:1px;background:#E3E3E3"></div>
<div style="position:absolute;left:0px;top:1745px;width:3394px;height:1px;background:#E3E3E3"></div>
<div style="position:absolute;left:280px;top:1628px;width:1px;height:134px;background:#E3E3E3"></div>
<div style="position:absolute;left:288px;top:1638.0px;font-size:23px;line-height:1;color:#000;white-space:pre;font-family:'Liberation Sans', sans-serif;">Message</div>
<div style="position:absolute;left:-2px;top:1677.5px;font-size:23px;line-height:1;color:#000;white-space:pre;font-family:'Liberation Sans', sans-serif;letter-spacing:-0.6px">ive (GBPUSD,M15)</div>
<div style="position:absolute;left:-3px;top:1716.0px;font-size:23px;line-height:1;color:#000;white-space:pre;font-family:'Liberation Sans', sans-serif;letter-spacing:-0.6px">USDMXN,D1)</div>
<div style="position:absolute;left:-2px;top:1754.5px;font-size:23px;line-height:1;color:#000;white-space:pre;font-family:'Liberation Sans', sans-serif;letter-spacing:-0.6px">ive (GOLD,M15)</div>
<div style="position:absolute;left:288px;top:1674.3px;font-size:28px;line-height:1;color:#333;white-space:pre;font-family:'Liberation Mono', monospace;">OnInit Expert On &lt;GBPUSD&gt;</div>
<div style="position:absolute;left:288px;top:1712.8px;font-size:28px;line-height:1;color:#333;white-space:pre;font-family:'Liberation Mono', monospace;">Init NATR(PERIOD_D1, 20, 25, 0, AsSeries=0)</div>
<div style="position:absolute;left:288px;top:1751.3px;font-size:28px;line-height:1;color:#333;white-space:pre;font-family:'Liberation Mono', monospace;">OnInit Expert On &lt;GOLD&gt;</div>
<div style="position:absolute;left:1444px;top:486px;width:431px;height:1257px;background:#F0F0F0;border:1px solid #A0A0A0;box-sizing:border-box;box-shadow:inset 1px 1px 0 #F9F9F9"></div>
<svg style="position:absolute;left:1456px;top:495px;" width="34" height="34" viewBox="0 0 34 34"><path d="M6 3 H28" stroke="#444" stroke-width="2"/><path d="M13 7 H21 V16 H27 L17 27 L7 16 H13 Z" fill="#E2452A"/></svg>
<div style="position:absolute;left:1504px;top:500.4px;font-size:24px;line-height:1;color:#000;white-space:pre;font-family:'Liberation Sans', sans-serif;letter-spacing:-0.15px">Sell Limit 0.01</div>
<div style="position:absolute;right:1531px;top:500.4px;font-size:24px;line-height:1;color:#000;white-space:pre;text-align:right;letter-spacing:-0.2px">1.23370</div>
<div style="position:absolute;left:1448px;top:541px;width:423px;height:1px;background:#A0A0A0"></div>
<div style="position:absolute;left:1448px;top:542px;width:423px;height:1px;background:#FFFFFF"></div>
<div style="position:absolute;left:1504px;top:563.5px;font-size:24px;line-height:1;color:#000;white-space:pre;font-family:'Liberation Sans', sans-serif;letter-spacing:-0.15px">Trading</div>
<svg style="position:absolute;left:1850px;top:563px;" width="12" height="18" viewBox="0 0 12 18"><path d="M1 1 L9 8.5 L1 16 Z" fill="#000"/></svg>
<svg style="position:absolute;left:1456px;top:602px;" width="34" height="34" viewBox="0 0 34 34"><rect x="2" y="4" width="30" height="26" fill="#EAF2FB" stroke="#2F7FD8" stroke-width="2"/><rect x="3" y="5" width="28" height="4" fill="#5DA2EC"/><g fill="#E06A6A"><rect x="7" y="12" width="4" height="3"/><rect x="15" y="12" width="4" height="3"/><rect x="23" y="12" width="4" height="3"/></g><g fill="#4A7BC8"><rect x="7" y="18" width="4" height="3"/><rect x="15" y="18" width="4" height="3"/><rect x="23" y="18" width="4" height="3"/><rect x="7" y="24" width="4" height="3"/><rect x="15" y="24" width="4" height="3"/><rect x="23" y="24" width="4" height="3"/></g></svg>
<div style="position:absolute;left:1504px;top:607.7px;font-size:24px;line-height:1;color:#000;white-space:pre;font-family:'Liberation Sans', sans-serif;letter-spacing:-0.15px">Depth Of Market</div>
<div style="position:absolute;right:1531px;top:607.7px;font-size:24px;line-height:1;color:#000;white-space:pre;text-align:right;letter-spacing:-0.2px">Alt+B</div>
<svg style="position:absolute;left:1456px;top:646px;" width="34" height="34" viewBox="0 0 34 34"><rect x="2" y="10" width="14" height="10" fill="#E0495A"/><rect x="18" y="10" width="14" height="10" fill="#4A62C8"/><rect x="12" y="10" width="10" height="4" fill="#F0F0F0"/></svg>
<div style="position:absolute;left:1504px;top:651.4px;font-size:24px;line-height:1;color:#000;white-space:pre;font-family:'Liberation Sans', sans-serif;letter-spacing:-0.15px">One Click Trading</div>
<div style="position:absolute;right:1531px;top:651.4px;font-size:24px;line-height:1;color:#000;white-space:pre;text-align:right;letter-spacing:-0.2px">Alt+T</div>
<svg style="position:absolute;left:1456px;top:690px;" width="34" height="34" viewBox="0 0 34 34"><rect x="2" y="2" width="24" height="22" fill="#EAF2FB" stroke="#2F7FD8" stroke-width="2"/><path d="M6 9 H20 M6 13 H20 M6 17 H14" stroke="#6A7A8A" stroke-width="1.5"/><rect x="14" y="14" width="18" height="18" fill="#F4CF3A" stroke="#B08A10" stroke-width="1.5"/><path d="M26 17 Q21 16 21 22 L19 30" stroke="#333" stroke-width="1.8" fill="none"/><path d="M18 23 H25" stroke="#333" stroke-width="1.5"/></svg>
<div style="position:absolute;left:1504px;top:695.4px;font-size:24px;line-height:1;color:#000;white-space:pre;font-family:'Liberation Sans', sans-serif;letter-spacing:-0.15px">Indicator List</div>
<div style="position:absolute;right:1531px;top:695.4px;font-size:24px;line-height:1;color:#000;white-space:pre;text-align:right;letter-spacing:-0.2px">Ctrl+I</div>
<svg style="position:absolute;left:1456px;top:733px;" width="34" height="34" viewBox="0 0 34 34"><rect x="2" y="2" width="24" height="22" fill="#EAF2FB" stroke="#2F7FD8" stroke-width="2"/><path d="M6 9 H20 M6 13 H20 M6 17 H14" stroke="#6A7A8A" stroke-width="1.5"/><path d="M22 14 L32 26 H12 Z" fill="#A8A8A8"/><rect x="8" y="20" width="16" height="12" fill="#6A6A6A" stroke="#444" stroke-width="1"/></svg>
<div style="position:absolute;left:1504px;top:738.9px;font-size:24px;line-height:1;color:#000;white-space:pre;font-family:'Liberation Sans', sans-serif;letter-spacing:-0.15px">Object List</div>
<div style="position:absolute;right:1531px;top:738.9px;font-size:24px;line-height:1;color:#000;white-space:pre;text-align:right;letter-spacing:-0.2px">Ctrl+B</div>
<svg style="position:absolute;left:1456px;top:777px;" width="34" height="34" viewBox="0 0 34 34"><rect x="2" y="2" width="24" height="22" fill="#EAF2FB" stroke="#2F7FD8" stroke-width="2"/><path d="M6 9 H20 M6 13 H20 M6 17 H14" stroke="#6A7A8A" stroke-width="1.5"/><path d="M15 17 L24 13 L33 17 L24 21 Z" fill="#444"/><circle cx="24" cy="24" r="4" fill="#D8A12A"/><path d="M15 33 Q16 26 24 27 Q32 27 32 33 Z" fill="#3D7BD8"/></svg>
<div style="position:absolute;left:1504px;top:782.7px;font-size:24px;line-height:1;color:#000;white-space:pre;font-family:'Liberation Sans', sans-serif;letter-spacing:-0.15px">Expert List</div>
<div style="position:absolute;left:1448px;top:824px;width:423px;height:1px;background:#A0A0A0"></div>
<div style="position:absolute;left:1448px;top:825px;width:423px;height:1px;background:#FFFFFF"></div>
<svg style="position:absolute;left:1456px;top:841px;" width="34" height="34" viewBox="0 0 34 34"><path d="M5 3 V33 M1 29.5 H32" stroke="#2B5FCB" stroke-width="2" fill="none"/><circle cx="5" cy="3.5" r="2.2" fill="#2B5FCB"/><circle cx="31" cy="29.5" r="2.2" fill="#2B5FCB"/><path d="M14 10 V26 M10 22 h4 M14 16 h4 M24 6 V22 M20 10 h4 M24 18 h4" stroke="#2E9A12" stroke-width="3" fill="none"/></svg>
<div style="position:absolute;left:1504px;top:846.8px;font-size:24px;line-height:1;color:#000;white-space:pre;font-family:'Liberation Sans', sans-serif;letter-spacing:-0.15px">Bar Chart</div>
<div style="position:absolute;right:1531px;top:846.8px;font-size:24px;line-height:1;color:#000;white-space:pre;text-align:right;letter-spacing:-0.2px">Alt+<u>1</u></div>
<div style="position:absolute;left:1451px;top:879px;width:43px;height:43px;background:#D3E3F3;border-top:1px solid #A0A0A0;border-left:1px solid #A0A0A0;border-bottom:1px solid #FFFFFF;border-right:1px solid #FFFFFF;box-sizing:border-box"></div>
<svg style="position:absolute;left:1456px;top:884px;" width="34" height="34" viewBox="0 0 34 34"><path d="M5 3 V33 M1 29.5 H32" stroke="#2B5FCB" stroke-width="2" fill="none"/><circle cx="5" cy="3.5" r="2.2" fill="#2B5FCB"/><circle cx="31" cy="29.5" r="2.2" fill="#2B5FCB"/><path d="M16 4 V26" stroke="#2E9A12" stroke-width="1.8"/><rect x="12" y="8" width="8" height="14" fill="#DDF5D3" stroke="#2E9A12" stroke-width="1.8"/></svg>
<div style="position:absolute;left:1504px;top:890.0px;font-size:24px;line-height:1;color:#000;white-space:pre;font-family:'Liberation Sans', sans-serif;letter-spacing:-0.15px">Candlesticks</div>
<div style="position:absolute;right:1531px;top:890.0px;font-size:24px;line-height:1;color:#000;white-space:pre;text-align:right;letter-spacing:-0.2px">Alt+<u>2</u></div>
<svg style="position:absolute;left:1456px;top:929px;" width="34" height="34" viewBox="0 0 34 34"><path d="M5 3 V33 M1 29.5 H32" stroke="#2B5FCB" stroke-width="2" fill="none"/><circle cx="5" cy="3.5" r="2.2" fill="#2B5FCB"/><circle cx="31" cy="29.5" r="2.2" fill="#2B5FCB"/><path d="M8 22 L14 14 L19 19 L28 9" stroke="#2E9A12" stroke-width="3" fill="none"/></svg>
<div style="position:absolute;left:1504px;top:934.5px;font-size:24px;line-height:1;color:#000;white-space:pre;font-family:'Liberation Sans', sans-serif;letter-spacing:-0.15px">Line Chart</div>
<div style="position:absolute;right:1531px;top:934.5px;font-size:24px;line-height:1;color:#000;white-space:pre;text-align:right;letter-spacing:-0.2px">Alt+<u>3</u></div>
<div style="position:absolute;left:1448px;top:976px;width:423px;height:1px;background:#A0A0A0"></div>
<div style="position:absolute;left:1448px;top:977px;width:423px;height:1px;background:#FFFFFF"></div>
<div style="position:absolute;left:1504px;top:997.3px;font-size:24px;line-height:1;color:#000;white-space:pre;font-family:'Liberation Sans', sans-serif;letter-spacing:-0.15px">Timeframes</div>
<svg style="position:absolute;left:1850px;top:997px;" width="12" height="18" viewBox="0 0 12 18"><path d="M1 1 L9 8.5 L1 16 Z" fill="#000"/></svg>
<div style="position:absolute;left:1447px;top:1030px;width:422px;height:44px;background:#0078D7"></div>
<div style="position:absolute;left:1504px;top:1041.8px;font-size:24px;line-height:1;color:#FFF;white-space:pre;font-family:'Liberation Sans', sans-serif;letter-spacing:-0.15px">Templates</div>
<svg style="position:absolute;left:1850px;top:1041px;" width="12" height="18" viewBox="0 0 12 18"><path d="M1 1 L9 8.5 L1 16 Z" fill="#FFF"/></svg>
<svg style="position:absolute;left:1456px;top:1079px;" width="34" height="34" viewBox="0 0 34 34"><path d="M6 15 A11 11 0 0 1 26 10" stroke="#2FB52A" stroke-width="5" fill="none"/><path d="M22 4 L31 10 L22 15 Z" fill="#2FB52A"/><path d="M28 19 A11 11 0 0 1 8 24" stroke="#2FB52A" stroke-width="5" fill="none"/><path d="M12 30 L3 24 L12 19 Z" fill="#2FB52A"/></svg>
<div style="position:absolute;left:1504px;top:1085.0px;font-size:24px;line-height:1;color:#000;white-space:pre;font-family:'Liberation Sans', sans-serif;letter-spacing:-0.15px">Refresh</div>
<div style="position:absolute;left:1448px;top:1126px;width:423px;height:1px;background:#A0A0A0"></div>
<div style="position:absolute;left:1448px;top:1127px;width:423px;height:1px;background:#FFFFFF"></div>
<div style="position:absolute;left:1451px;top:1138px;width:43px;height:43px;background:#D3E3F3;border-top:1px solid #A0A0A0;border-left:1px solid #A0A0A0;border-bottom:1px solid #FFFFFF;border-right:1px solid #FFFFFF;box-sizing:border-box"></div>
<svg style="position:absolute;left:1456px;top:1144px;" width="34" height="34" viewBox="0 0 34 34"><path d="M14 20 L5 31" stroke="#555" stroke-width="2.5"/><path d="M16 7 L27 18 L21 20 L14 13 Z" fill="#E2453A"/><path d="M10 16 L18 24 L24 18 L16 10 Z" fill="#D8383A"/><circle cx="22" cy="12" r="5" fill="#F06060"/></svg>
<div style="position:absolute;left:1504px;top:1149.3px;font-size:24px;line-height:1;color:#000;white-space:pre;font-family:'Liberation Sans', sans-serif;letter-spacing:-0.15px">Docked</div>
<div style="position:absolute;right:1531px;top:1149.3px;font-size:24px;line-height:1;color:#000;white-space:pre;text-align:right;letter-spacing:-0.2px">Alt+D</div>
<svg style="position:absolute;left:1456px;top:1187px;" width="34" height="34" viewBox="0 0 34 34"><path d="M5 3 V33 M1 29.5 H32" stroke="#2B5FCB" stroke-width="2" fill="none"/><circle cx="5" cy="3.5" r="2.2" fill="#2B5FCB"/><circle cx="31" cy="29.5" r="2.2" fill="#2B5FCB"/><path d="M10 8 V26 M15 8 V26 M20 8 V26 M25 8 V26 M8 11 H28 M8 16 H28 M8 21 H28" stroke="#555" stroke-width="1.8"/></svg>
<div style="position:absolute;left:1504px;top:1192.6px;font-size:24px;line-height:1;color:#000;white-space:pre;font-family:'Liberation Sans', sans-serif;letter-spacing:-0.15px">Grid</div>
<div style="position:absolute;right:1531px;top:1192.6px;font-size:24px;line-height:1;color:#000;white-space:pre;text-align:right;letter-spacing:-0.2px">Ctrl+G</div>
<svg style="position:absolute;left:1456px;top:1231px;" width="34" height="34" viewBox="0 0 34 34"><path d="M5 3 V33 M1 29.5 H32" stroke="#2B5FCB" stroke-width="2" fill="none"/><circle cx="5" cy="3.5" r="2.2" fill="#2B5FCB"/><circle cx="31" cy="29.5" r="2.2" fill="#2B5FCB"/><path d="M10 13 H18" stroke="#8AD870" stroke-width="4"/><path d="M17 8 L24 13 L17 18 Z" fill="#3EB82A"/><path d="M28 5 V24" stroke="#444" stroke-width="2"/></svg>
<div style="position:absolute;left:1504px;top:1236.3px;font-size:24px;line-height:1;color:#000;white-space:pre;font-family:'Liberation Sans', sans-serif;letter-spacing:-0.15px">Auto Scroll</div>
<div style="position:absolute;left:1451px;top:1269px;width:43px;height:43px;background:#D3E3F3;border-top:1px solid #A0A0A0;border-left:1px solid #A0A0A0;border-bottom:1px solid #FFFFFF;border-right:1px solid #FFFFFF;box-sizing:border-box"></div>
<svg style="position:absolute;left:1456px;top:1275px;" width="34" height="34" viewBox="0 0 34 34"><path d="M5 3 V33 M1 29.5 H32" stroke="#2B5FCB" stroke-width="2" fill="none"/><circle cx="5" cy="3.5" r="2.2" fill="#2B5FCB"/><circle cx="31" cy="29.5" r="2.2" fill="#2B5FCB"/><path d="M16 5 V26" stroke="#444" stroke-width="2"/><path d="M22 13 H30" stroke="#8AB8F0" stroke-width="4"/><path d="M27 7 L20 13 L27 19 Z" fill="#4A8DE6"/></svg>
<div style="position:absolute;left:1504px;top:1280.3px;font-size:24px;line-height:1;color:#000;white-space:pre;font-family:'Liberation Sans', sans-serif;letter-spacing:-0.15px">Chart Shift</div>
<div style="position:absolute;left:1448px;top:1321px;width:423px;height:1px;background:#A0A0A0"></div>
<div style="position:absolute;left:1448px;top:1322px;width:423px;height:1px;background:#FFFFFF"></div>
<svg style="position:absolute;left:1456px;top:1338px;" width="34" height="34" viewBox="0 0 34 34"><path d="M5 3 V33 M1 29.5 H32" stroke="#2B5FCB" stroke-width="2" fill="none"/><circle cx="5" cy="3.5" r="2.2" fill="#2B5FCB"/><circle cx="31" cy="29.5" r="2.2" fill="#2B5FCB"/><path d="M8 27 L8 18 L13 14 L17 19 L22 16 L28 27 Z" fill="#2E9A12"/><path d="M9 12 L14 7 L18 11 L24 6 L28 10" stroke="#7FD66A" stroke-width="1.5" fill="none"/></svg>
<div style="position:absolute;left:1504px;top:1343.2px;font-size:24px;line-height:1;color:#000;white-space:pre;font-family:'Liberation Sans', sans-serif;letter-spacing:-0.15px">Volumes</div>
<div style="position:absolute;right:1531px;top:1343.2px;font-size:24px;line-height:1;color:#000;white-space:pre;text-align:right;letter-spacing:-0.2px">Ctrl+K</div>
<div style="position:absolute;left:1451px;top:1376px;width:43px;height:43px;background:#D3E3F3;border-top:1px solid #A0A0A0;border-left:1px solid #A0A0A0;border-bottom:1px solid #FFFFFF;border-right:1px solid #FFFFFF;box-sizing:border-box"></div>
<svg style="position:absolute;left:1456px;top:1382px;" width="34" height="34" viewBox="0 0 34 34"><path d="M5 3 V33 M1 29.5 H32" stroke="#2B5FCB" stroke-width="2" fill="none"/><circle cx="5" cy="3.5" r="2.2" fill="#2B5FCB"/><circle cx="31" cy="29.5" r="2.2" fill="#2B5FCB"/><path d="M8 27 L8 19 L13 15 L17 20 L22 17 L28 27 Z" fill="#2E9A12"/><path d="M17 6 H29 M23 6 V17" stroke="#2B5FCB" stroke-width="3"/></svg>
<div style="position:absolute;left:1504px;top:1387.2px;font-size:24px;line-height:1;color:#000;white-space:pre;font-family:'Liberation Sans', sans-serif;letter-spacing:-0.15px">Tick Volumes</div>
<div style="position:absolute;right:1531px;top:1387.2px;font-size:24px;line-height:1;color:#000;white-space:pre;text-align:right;letter-spacing:-0.2px">Ctrl+L</div>
<div style="position:absolute;left:1448px;top:1428px;width:423px;height:1px;background:#A0A0A0"></div>
<div style="position:absolute;left:1448px;top:1429px;width:423px;height:1px;background:#FFFFFF"></div>
<svg style="position:absolute;left:1456px;top:1445px;" width="34" height="34" viewBox="0 0 34 34"><circle cx="13" cy="11" r="8" fill="#EEF3FA" stroke="#3F86D6" stroke-width="2.4"/><path d="M9 11 H17 M13 7 V15" stroke="#2566C8" stroke-width="2.2"/><path d="M18 17 L25 28" stroke="#B88A1A" stroke-width="4.5" stroke-linecap="round"/></svg>
<div style="position:absolute;left:1504px;top:1450.7px;font-size:24px;line-height:1;color:#000;white-space:pre;font-family:'Liberation Sans', sans-serif;letter-spacing:-0.15px">Zoom In</div>
<div style="position:absolute;right:1531px;top:1450.7px;font-size:24px;line-height:1;color:#000;white-space:pre;text-align:right;letter-spacing:-0.2px">+</div>
<svg style="position:absolute;left:1456px;top:1488px;" width="34" height="34" viewBox="0 0 34 34"><circle cx="13" cy="11" r="8" fill="#EEF3FA" stroke="#3F86D6" stroke-width="2.4"/><path d="M9 11 H17" stroke="#2566C8" stroke-width="2.2"/><path d="M18 17 L25 28" stroke="#B88A1A" stroke-width="4.5" stroke-linecap="round"/></svg>
<div style="position:absolute;left:1504px;top:1493.9px;font-size:24px;line-height:1;color:#000;white-space:pre;font-family:'Liberation Sans', sans-serif;letter-spacing:-0.15px">Zoom Out</div>
<div style="position:absolute;right:1531px;top:1493.9px;font-size:24px;line-height:1;color:#000;white-space:pre;text-align:right;letter-spacing:-0.2px">-</div>
<svg style="position:absolute;left:1456px;top:1532px;" width="34" height="34" viewBox="0 0 34 34"><rect x="2" y="2" width="28" height="28" fill="#F4F4F4" stroke="#9A9A9A" stroke-width="2"/><path d="M20 7 Q14 6 14 12 L11 26 M10 14 H18" stroke="#888" stroke-width="2" fill="none"/><circle cx="25" cy="26" r="7" fill="#9A9A9A"/><path d="M22 23 L28 29 M28 23 L22 29" stroke="#FFF" stroke-width="2"/></svg>
<div style="position:absolute;left:1504px;top:1538.2px;font-size:24px;line-height:1;color:#6D6D6D;white-space:pre;font-family:'Liberation Sans', sans-serif;letter-spacing:-0.15px">Delete Indicators Window</div>
<svg style="position:absolute;left:1456px;top:1577px;" width="34" height="34" viewBox="0 0 34 34"><path d="M5 3 V33 M1 29.5 H32" stroke="#2B5FCB" stroke-width="2" fill="none"/><circle cx="5" cy="3.5" r="2.2" fill="#2B5FCB"/><circle cx="31" cy="29.5" r="2.2" fill="#2B5FCB"/><path d="M9 11 L15 6 V9 H20 V13 H15 V16 Z" fill="#4A8DE6"/><path d="M27 17 L21 12 V15 H16 V19 H21 V22 Z" fill="#3EB82A"/></svg>
<div style="position:absolute;left:1504px;top:1582.5px;font-size:24px;line-height:1;color:#000;white-space:pre;font-family:'Liberation Sans', sans-serif;letter-spacing:-0.15px">Step by Step</div>
<div style="position:absolute;right:1531px;top:1582.5px;font-size:24px;line-height:1;color:#000;white-space:pre;text-align:right;letter-spacing:-0.2px">F12</div>
<div style="position:absolute;left:1448px;top:1623px;width:423px;height:1px;background:#A0A0A0"></div>
<div style="position:absolute;left:1448px;top:1624px;width:423px;height:1px;background:#FFFFFF"></div>
<svg style="position:absolute;left:1456px;top:1639px;" width="34" height="34" viewBox="0 0 34 34"><rect x="2" y="2" width="28" height="26" fill="#E7F1FA" stroke="#1F74D0" stroke-width="2"/><path d="M7 8 V26 M4 11 l3 -4 l3 4 M4 23 l3 4 l3 -4" stroke="#2357C0" stroke-width="1.8" fill="none"/><path d="M11 18 L16 11 L21 15 L29 8" stroke="#2E9A12" stroke-width="2" fill="none"/><rect x="14" y="16" width="18" height="18" rx="2" fill="#6E6E6E"/><rect x="18" y="18" width="9" height="5" fill="#D8E6EC"/><rect x="17" y="26" width="12" height="7" fill="#E8F0F4"/></svg>
<div style="position:absolute;left:1504px;top:1644.7px;font-size:24px;line-height:1;color:#000;white-space:pre;font-family:'Liberation Sans', sans-serif;letter-spacing:-0.15px">Save as Picture</div>
<div style="position:absolute;left:1448px;top:1686px;width:423px;height:1px;background:#A0A0A0"></div>
<div style="position:absolute;left:1448px;top:1687px;width:423px;height:1px;background:#FFFFFF"></div>
<svg style="position:absolute;left:1456px;top:1702px;" width="34" height="34" viewBox="0 0 34 34"><rect x="2" y="2" width="28" height="26" fill="#E7F1FA" stroke="#1F74D0" stroke-width="2"/><path d="M7 8 V26 M4 11 l3 -4 l3 4 M4 23 l3 4 l3 -4" stroke="#2357C0" stroke-width="1.8" fill="none"/><path d="M11 18 L16 11 L21 15 L29 8" stroke="#2E9A12" stroke-width="2" fill="none"/><circle cx="23" cy="25" r="7" fill="#E8B21E" stroke="#B07A10" stroke-width="3" stroke-dasharray="3,2"/><circle cx="23" cy="25" r="2.5" fill="#FFF3C0"/></svg>
<div style="position:absolute;left:1504px;top:1708.1px;font-size:24px;line-height:1;color:#000;white-space:pre;font-family:'Liberation Sans', sans-serif;letter-spacing:-0.15px">Properties</div>
<div style="position:absolute;right:1531px;top:1708.1px;font-size:24px;line-height:1;color:#000;white-space:pre;text-align:right;letter-spacing:-0.2px">F8</div>
<div style="position:absolute;left:1869px;top:1027px;width:366px;height:596px;background:#F0F0F0;border:1px solid #A0A0A0;box-sizing:border-box;box-shadow:inset 1px 1px 0 #F9F9F9"></div>
<svg style="position:absolute;left:1880px;top:1036px;" width="34" height="34" viewBox="0 0 34 34"><rect x="2" y="2" width="28" height="24" fill="#E7F1FA" stroke="#1F74D0" stroke-width="2"/><rect x="3" y="3" width="26" height="4" fill="#5DA2EC"/><path d="M6 14 L11 20 L17 12 L22 16" stroke="#2E9A12" stroke-width="2.2" fill="none"/><rect x="14" y="15" width="19" height="19" rx="2" fill="#6E6E6E"/><rect x="18" y="17" width="9" height="5" fill="#D8E6EC"/><rect x="17" y="25" width="13" height="7" fill="#E8F0F4"/></svg>
<div style="position:absolute;left:1929px;top:1041.8px;font-size:24px;line-height:1;color:#000;white-space:pre;font-family:'Liberation Sans', sans-serif;letter-spacing:-0.15px">Save Template</div>
<div style="position:absolute;left:1929px;top:1086.0px;font-size:24px;line-height:1;color:#000;white-space:pre;font-family:'Liberation Sans', sans-serif;letter-spacing:-0.15px">Load Template</div>
<div style="position:absolute;left:1929px;top:1129.7px;font-size:24px;line-height:1;color:#000;white-space:pre;font-family:'Liberation Sans', sans-serif;letter-spacing:-0.15px">Remove Template</div>
<svg style="position:absolute;left:2208px;top:1129px;" width="12" height="18" viewBox="0 0 12 18"><path d="M1 1 L9 8.5 L1 16 Z" fill="#000"/></svg>
<div style="position:absolute;left:1873px;top:1170px;width:358px;height:1px;background:#A0A0A0"></div>
<div style="position:absolute;left:1873px;top:1171px;width:358px;height:1px;background:#FFFFFF"></div>
<div style="position:absolute;left:1929px;top:1192.5px;font-size:24px;line-height:1;color:#000;white-space:pre;font-family:'Liberation Sans', sans-serif;letter-spacing:-0.15px">ADX</div>
<div style="position:absolute;left:1929px;top:1236.3px;font-size:24px;line-height:1;color:#000;white-space:pre;font-family:'Liberation Sans', sans-serif;letter-spacing:-0.15px">BollingerBands</div>
<div style="position:absolute;left:1929px;top:1280.5px;font-size:24px;line-height:1;color:#000;white-space:pre;font-family:'Liberation Sans', sans-serif;letter-spacing:-0.15px">Default</div>
<div style="position:absolute;left:1929px;top:1324.8px;font-size:24px;line-height:1;color:#000;white-space:pre;font-family:'Liberation Sans', sans-serif;letter-spacing:-0.15px">HA</div>
<div style="position:absolute;left:1929px;top:1368.6px;font-size:24px;line-height:1;color:#000;white-space:pre;font-family:'Liberation Sans', sans-serif;letter-spacing:-0.15px">IndicatorBars</div>
<div style="position:absolute;left:1929px;top:1412.6px;font-size:24px;line-height:1;color:#000;white-space:pre;font-family:'Liberation Sans', sans-serif;letter-spacing:-0.15px">Indicators</div>
<div style="position:absolute;left:1929px;top:1456.7px;font-size:24px;line-height:1;color:#000;white-space:pre;font-family:'Liberation Sans', sans-serif;letter-spacing:-0.15px">Momentum</div>
<div style="position:absolute;left:1872px;top:1489px;width:360px;height:44px;background:#0078D7"></div>
<div style="position:absolute;left:1929px;top:1500.4px;font-size:24px;line-height:1;color:#FFF;white-space:pre;font-family:'Liberation Sans', sans-serif;letter-spacing:-0.15px">Objective</div>
<div style="position:absolute;left:1929px;top:1543.8px;font-size:24px;line-height:1;color:#000;white-space:pre;font-family:'Liberation Sans', sans-serif;letter-spacing:-0.15px">ObjectiveTester</div>
<div style="position:absolute;left:1929px;top:1588.3px;font-size:24px;line-height:1;color:#000;white-space:pre;font-family:'Liberation Sans', sans-serif;letter-spacing:-0.15px">SSA</div>
</body></html>
